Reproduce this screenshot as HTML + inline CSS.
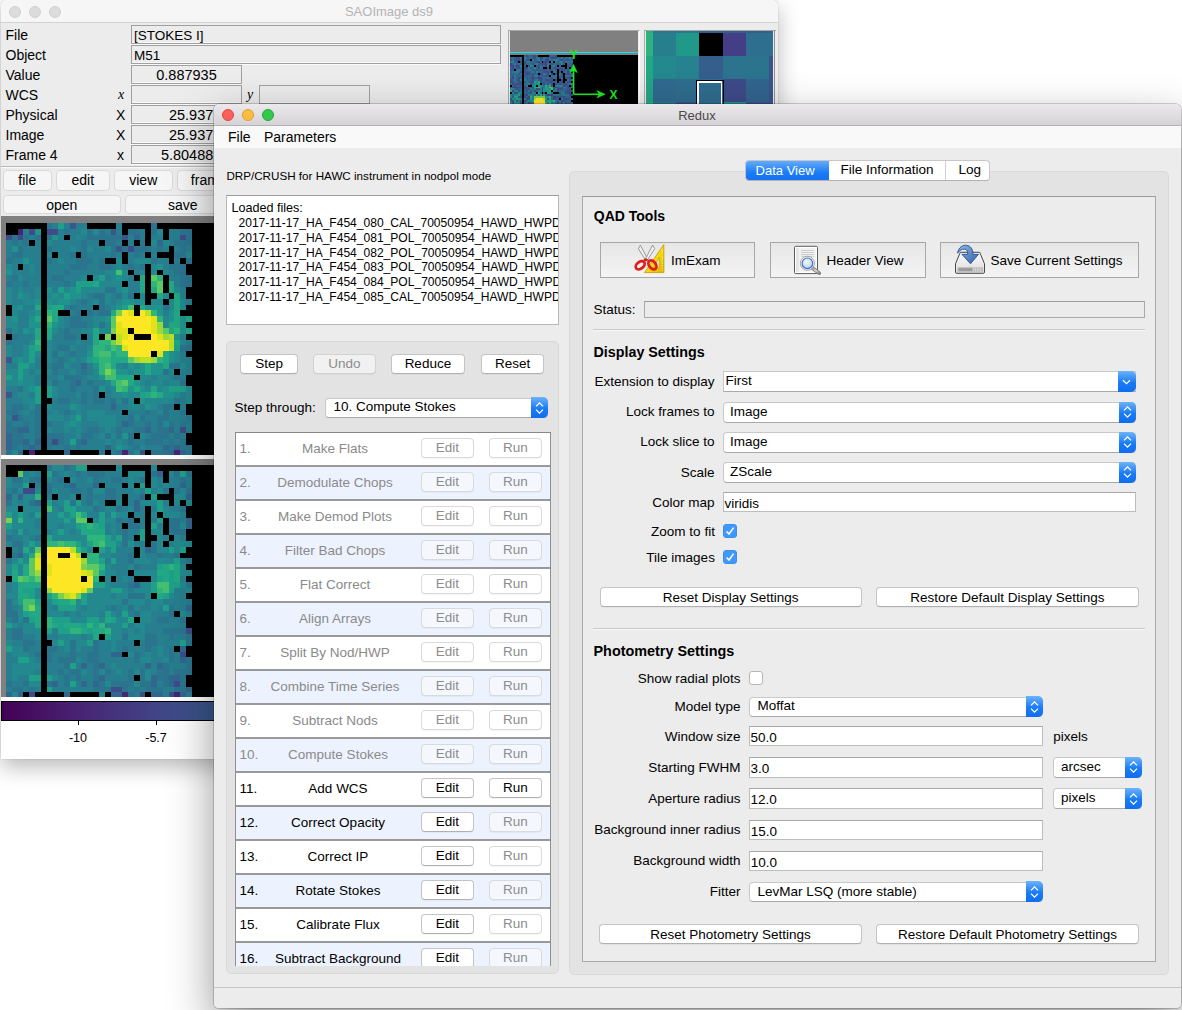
<!DOCTYPE html><html><head><meta charset="utf-8"><style>
*{box-sizing:border-box;margin:0;padding:0}
html,body{width:1182px;height:1010px;overflow:hidden;background:#fff;font-family:"Liberation Sans",sans-serif;font-size:13.5px;color:#000}
.a{position:absolute}
.t{position:absolute;white-space:nowrap;line-height:1}
.btn{position:absolute;background:#fff;border:1px solid #c4c4c4;border-bottom-color:#b0b0b0;border-radius:4px;text-align:center;white-space:nowrap;box-shadow:0 0.5px 0.5px rgba(0,0,0,0.08)}
.dis{color:#8c8c8c;border-color:#dadada;background:#f7f7f7}
.combo{position:absolute;background:#fff;border:1px solid #c8c8c8;border-bottom-color:#a9a9a9;border-radius:4px;white-space:nowrap;overflow:hidden}
.cblue{position:absolute;right:-1px;top:-1px;bottom:-1px;width:17px;background:linear-gradient(#6cb3fa,#1a7bf5 55%,#0f6ef0);border-radius:0 4px 4px 0}
.field{position:absolute;background:#fff;border:1px solid #bdbdbd;border-top-color:#a8a8a8;white-space:nowrap;overflow:hidden}
.pbtn{position:absolute;border:1px solid #a9a9a9;background:linear-gradient(#ebebeb,#f6f6f6);text-align:center;white-space:nowrap}
.tkent{position:absolute;border:1px solid #a0a0a0;box-shadow:inset 0 -1px 0 #f8f8f8, 0 1px 0 #fafafa;background:#ececec;white-space:nowrap}
.tkbtn{position:absolute;background:#f6f6f6;border:1px solid #d9d9d9;border-radius:4px;text-align:center;white-space:nowrap}
</style></head><body><div class="a" style="left:1px;top:0;width:777px;height:759px;border-radius:5px 5px 0 0;box-shadow:0 8px 22px rgba(0,0,0,0.28),0 0 1px rgba(0,0,0,0.4);background:#ececec;overflow:hidden"><div class="a" style="left:0px;top:0px;width:777px;height:22.5px;background:#f6f6f6;border-bottom:1px solid #d3d3d3"></div><div class="a" style="left:8px;top:6px;width:12px;height:12px;border-radius:50%;background:#dcdcdc;border:1px solid #d0d0d0"></div><div class="a" style="left:28px;top:6px;width:12px;height:12px;border-radius:50%;background:#dcdcdc;border:1px solid #d0d0d0"></div><div class="a" style="left:48px;top:6px;width:12px;height:12px;border-radius:50%;background:#dcdcdc;border:1px solid #d0d0d0"></div><div class="t" style="left:188px;width:400px;text-align:center;top:4.95px;font-size:13px;color:#b4b4b4;">SAOImage ds9</div><div class="t" style="left:4.5px;top:28.00px;font-size:14px;">File</div><div class="t" style="left:4.5px;top:48.00px;font-size:14px;">Object</div><div class="t" style="left:4.5px;top:68.00px;font-size:14px;">Value</div><div class="t" style="left:4.5px;top:88.00px;font-size:14px;">WCS</div><div class="t" style="left:4.5px;top:108.00px;font-size:14px;">Physical</div><div class="t" style="left:4.5px;top:128.00px;font-size:14px;">Image</div><div class="t" style="left:4.5px;top:148.00px;font-size:14px;">Frame 4</div><div class="t" style="left:117px;top:87.60px;font-size:14px;font-family:'Liberation Serif',serif"><i>x</i></div><div class="t" style="left:115px;top:108.00px;font-size:14px;">X</div><div class="t" style="left:115px;top:128.00px;font-size:14px;">X</div><div class="t" style="left:116px;top:148.00px;font-size:14px;">x</div><div class="t" style="left:246px;top:87.60px;font-size:14px;font-family:'Liberation Serif',serif"><i>y</i></div><div class="tkent" style="left:130px;top:25px;width:370px;height:19px;font-size:13.5px;text-align:left;padding-left:2px;line-height:19px">[STOKES I]</div><div class="tkent" style="left:130px;top:45px;width:370px;height:19px;font-size:13.5px;text-align:left;padding-left:2px;line-height:19px">M51</div><div class="tkent" style="left:130px;top:65px;width:111px;height:19px;font-size:14.5px;text-align:center;padding-left:0px;line-height:19px">0.887935</div><div class="tkent" style="left:130px;top:85px;width:111px;height:19px;font-size:13.5px;text-align:left;padding-left:2px;line-height:19px"></div><div class="tkent" style="left:258px;top:85px;width:111px;height:19px;font-size:13.5px;text-align:left;padding-left:2px;line-height:19px"></div><div class="tkent" style="left:130px;top:105px;width:111px;height:19px;font-size:13.5px;text-align:left;padding-left:2px;line-height:19px"></div><div class="tkent" style="left:130px;top:125px;width:111px;height:19px;font-size:13.5px;text-align:left;padding-left:2px;line-height:19px"></div><div class="tkent" style="left:130px;top:145px;width:111px;height:19px;font-size:13.5px;text-align:left;padding-left:2px;line-height:19px"></div><div class="t" style="left:-187.7px;width:400px;text-align:right;top:107.58px;font-size:14.5px;">25.937</div><div class="t" style="left:-187.7px;width:400px;text-align:right;top:127.58px;font-size:14.5px;">25.937</div><div class="t" style="left:-187.7px;width:400px;text-align:right;top:147.58px;font-size:14.5px;">5.80488</div><div class="a" style="left:0px;top:166px;width:777px;height:1px;background:#b9b9b9"></div><div class="a" style="left:0px;top:167px;width:777px;height:1px;background:#fafafa"></div><div class="tkbtn" style="left:2px;top:170px;width:48.5px;height:20.5px;line-height:19px;font-size:14px">file</div><div class="tkbtn" style="left:55px;top:170px;width:53.5px;height:20.5px;line-height:19px;font-size:14px">edit</div><div class="tkbtn" style="left:113px;top:170px;width:58.5px;height:20.5px;line-height:19px;font-size:14px">view</div><div class="tkbtn" style="left:176px;top:170px;width:63.5px;height:20.5px;line-height:19px;font-size:14px">frame</div><div class="tkbtn" style="left:2px;top:194.8px;width:117.5px;height:19.5px;line-height:18px;font-size:14px">open</div><div class="tkbtn" style="left:124px;top:194.8px;width:115.5px;height:19.5px;line-height:18px;font-size:14px">save</div><div class="a" style="left:0px;top:216px;width:777px;height:239px;background:#808080"></div><div class="a" style="left:0px;top:455px;width:777px;height:4px;background:#fff"></div><div class="a" style="left:0px;top:459px;width:777px;height:238px;background:#808080"></div><div class="a" style="left:0px;top:697px;width:777px;height:62px;background:#fff"></div><div class="a" style="left:0px;top:701px;width:777px;height:20px;border:1px solid #000;background:linear-gradient(90deg,#440154 0%,#482475 10%,#414487 20%,#355f8d 30%,#2a788e 40%,#21918c 50%,#22a884 60%,#44bf70 70%,#7ad151 80%,#bddf26 90%,#fde725 100%)"></div><div class="a" style="left:76.5px;top:721px;width:1px;height:4px;background:#000"></div><div class="a" style="left:154.5px;top:721px;width:1px;height:4px;background:#000"></div><div class="t" style="left:-123px;width:400px;text-align:center;top:732.38px;font-size:12.5px;">-10</div><div class="t" style="left:-45px;width:400px;text-align:center;top:732.38px;font-size:12.5px;">-5.7</div><svg class="a" style="left:0px;top:216px" width="214" height="239" shape-rendering="crispEdges"><rect width="214" height="239" fill="#000"/><rect x="4.95" y="7.00" width="6.11" height="6.13" fill="#000000"/><rect x="10.76" y="7.00" width="6.11" height="6.13" fill="#000000"/><rect x="16.57" y="7.00" width="6.11" height="6.13" fill="#000000"/><rect x="22.38" y="7.00" width="6.11" height="6.13" fill="#000000"/><rect x="28.19" y="7.00" width="6.11" height="6.13" fill="#000000"/><rect x="34.00" y="7.00" width="6.11" height="6.13" fill="#000000"/><rect x="39.81" y="7.00" width="6.11" height="6.13" fill="#000000"/><rect x="45.62" y="7.00" width="6.11" height="6.13" fill="#2b748e"/><rect x="51.43" y="7.00" width="6.11" height="6.13" fill="#277e8e"/><rect x="57.24" y="7.00" width="6.11" height="6.13" fill="#1fa088"/><rect x="63.05" y="7.00" width="6.11" height="6.13" fill="#277e8e"/><rect x="68.86" y="7.00" width="6.11" height="6.13" fill="#38588c"/><rect x="74.67" y="7.00" width="6.11" height="6.13" fill="#277e8e"/><rect x="80.48" y="7.00" width="6.11" height="6.13" fill="#277e8e"/><rect x="86.29" y="7.00" width="6.11" height="6.13" fill="#000000"/><rect x="92.10" y="7.00" width="6.11" height="6.13" fill="#000000"/><rect x="97.91" y="7.00" width="6.11" height="6.13" fill="#000000"/><rect x="103.72" y="7.00" width="6.11" height="6.13" fill="#000000"/><rect x="109.53" y="7.00" width="6.11" height="6.13" fill="#000000"/><rect x="115.34" y="7.00" width="6.11" height="6.13" fill="#277e8e"/><rect x="121.15" y="7.00" width="6.11" height="6.13" fill="#000000"/><rect x="126.96" y="7.00" width="6.11" height="6.13" fill="#000000"/><rect x="132.77" y="7.00" width="6.11" height="6.13" fill="#000000"/><rect x="138.58" y="7.00" width="6.11" height="6.13" fill="#000000"/><rect x="144.39" y="7.00" width="6.11" height="6.13" fill="#000000"/><rect x="150.20" y="7.00" width="6.11" height="6.13" fill="#2b748e"/><rect x="156.01" y="7.00" width="6.11" height="6.13" fill="#000000"/><rect x="161.82" y="7.00" width="6.11" height="6.13" fill="#000000"/><rect x="167.63" y="7.00" width="6.11" height="6.13" fill="#000000"/><rect x="173.44" y="7.00" width="6.11" height="6.13" fill="#000000"/><rect x="179.25" y="7.00" width="6.11" height="6.13" fill="#000000"/><rect x="185.06" y="7.00" width="6.11" height="6.13" fill="#000000"/><rect x="4.95" y="12.83" width="6.11" height="6.13" fill="#000000"/><rect x="10.76" y="12.83" width="6.11" height="6.13" fill="#000000"/><rect x="16.57" y="12.83" width="6.11" height="6.13" fill="#482475"/><rect x="22.38" y="12.83" width="6.11" height="6.13" fill="#277e8e"/><rect x="28.19" y="12.83" width="6.11" height="6.13" fill="#3e4c8a"/><rect x="34.00" y="12.83" width="6.11" height="6.13" fill="#20938c"/><rect x="39.81" y="12.83" width="6.11" height="6.13" fill="#000000"/><rect x="45.62" y="12.83" width="6.11" height="6.13" fill="#3e4c8a"/><rect x="51.43" y="12.83" width="6.11" height="6.13" fill="#3e4c8a"/><rect x="57.24" y="12.83" width="6.11" height="6.13" fill="#277e8e"/><rect x="63.05" y="12.83" width="6.11" height="6.13" fill="#2b748e"/><rect x="68.86" y="12.83" width="6.11" height="6.13" fill="#277e8e"/><rect x="74.67" y="12.83" width="6.11" height="6.13" fill="#277e8e"/><rect x="80.48" y="12.83" width="6.11" height="6.13" fill="#23898e"/><rect x="86.29" y="12.83" width="6.11" height="6.13" fill="#2b748e"/><rect x="92.10" y="12.83" width="6.11" height="6.13" fill="#23898e"/><rect x="97.91" y="12.83" width="6.11" height="6.13" fill="#2b748e"/><rect x="103.72" y="12.83" width="6.11" height="6.13" fill="#277e8e"/><rect x="109.53" y="12.83" width="6.11" height="6.13" fill="#38588c"/><rect x="115.34" y="12.83" width="6.11" height="6.13" fill="#277e8e"/><rect x="121.15" y="12.83" width="6.11" height="6.13" fill="#000000"/><rect x="126.96" y="12.83" width="6.11" height="6.13" fill="#2b748e"/><rect x="132.77" y="12.83" width="6.11" height="6.13" fill="#2b748e"/><rect x="138.58" y="12.83" width="6.11" height="6.13" fill="#277e8e"/><rect x="144.39" y="12.83" width="6.11" height="6.13" fill="#000000"/><rect x="150.20" y="12.83" width="6.11" height="6.13" fill="#2b748e"/><rect x="156.01" y="12.83" width="6.11" height="6.13" fill="#23898e"/><rect x="161.82" y="12.83" width="6.11" height="6.13" fill="#000000"/><rect x="167.63" y="12.83" width="6.11" height="6.13" fill="#277e8e"/><rect x="173.44" y="12.83" width="6.11" height="6.13" fill="#277e8e"/><rect x="179.25" y="12.83" width="6.11" height="6.13" fill="#2b748e"/><rect x="185.06" y="12.83" width="6.11" height="6.13" fill="#2b748e"/><rect x="4.95" y="18.66" width="6.11" height="6.13" fill="#3e4c8a"/><rect x="10.76" y="18.66" width="6.11" height="6.13" fill="#2b748e"/><rect x="16.57" y="18.66" width="6.11" height="6.13" fill="#3e4c8a"/><rect x="22.38" y="18.66" width="6.11" height="6.13" fill="#2b748e"/><rect x="28.19" y="18.66" width="6.11" height="6.13" fill="#277e8e"/><rect x="34.00" y="18.66" width="6.11" height="6.13" fill="#2b748e"/><rect x="39.81" y="18.66" width="6.11" height="6.13" fill="#000000"/><rect x="45.62" y="18.66" width="6.11" height="6.13" fill="#2b748e"/><rect x="51.43" y="18.66" width="6.11" height="6.13" fill="#20938c"/><rect x="57.24" y="18.66" width="6.11" height="6.13" fill="#277e8e"/><rect x="63.05" y="18.66" width="6.11" height="6.13" fill="#000000"/><rect x="68.86" y="18.66" width="6.11" height="6.13" fill="#277e8e"/><rect x="74.67" y="18.66" width="6.11" height="6.13" fill="#23898e"/><rect x="80.48" y="18.66" width="6.11" height="6.13" fill="#277e8e"/><rect x="86.29" y="18.66" width="6.11" height="6.13" fill="#2b748e"/><rect x="92.10" y="18.66" width="6.11" height="6.13" fill="#2b748e"/><rect x="97.91" y="18.66" width="6.11" height="6.13" fill="#2b748e"/><rect x="103.72" y="18.66" width="6.11" height="6.13" fill="#2b748e"/><rect x="109.53" y="18.66" width="6.11" height="6.13" fill="#2b748e"/><rect x="115.34" y="18.66" width="6.11" height="6.13" fill="#2b748e"/><rect x="121.15" y="18.66" width="6.11" height="6.13" fill="#38588c"/><rect x="126.96" y="18.66" width="6.11" height="6.13" fill="#277e8e"/><rect x="132.77" y="18.66" width="6.11" height="6.13" fill="#31668e"/><rect x="138.58" y="18.66" width="6.11" height="6.13" fill="#277e8e"/><rect x="144.39" y="18.66" width="6.11" height="6.13" fill="#000000"/><rect x="150.20" y="18.66" width="6.11" height="6.13" fill="#277e8e"/><rect x="156.01" y="18.66" width="6.11" height="6.13" fill="#277e8e"/><rect x="161.82" y="18.66" width="6.11" height="6.13" fill="#000000"/><rect x="167.63" y="18.66" width="6.11" height="6.13" fill="#277e8e"/><rect x="173.44" y="18.66" width="6.11" height="6.13" fill="#277e8e"/><rect x="179.25" y="18.66" width="6.11" height="6.13" fill="#3e4c8a"/><rect x="185.06" y="18.66" width="6.11" height="6.13" fill="#2b748e"/><rect x="4.95" y="24.49" width="6.11" height="6.13" fill="#277e8e"/><rect x="10.76" y="24.49" width="6.11" height="6.13" fill="#2b748e"/><rect x="16.57" y="24.49" width="6.11" height="6.13" fill="#277e8e"/><rect x="22.38" y="24.49" width="6.11" height="6.13" fill="#2b748e"/><rect x="28.19" y="24.49" width="6.11" height="6.13" fill="#000000"/><rect x="34.00" y="24.49" width="6.11" height="6.13" fill="#277e8e"/><rect x="39.81" y="24.49" width="6.11" height="6.13" fill="#000000"/><rect x="45.62" y="24.49" width="6.11" height="6.13" fill="#23898e"/><rect x="51.43" y="24.49" width="6.11" height="6.13" fill="#277e8e"/><rect x="57.24" y="24.49" width="6.11" height="6.13" fill="#277e8e"/><rect x="63.05" y="24.49" width="6.11" height="6.13" fill="#277e8e"/><rect x="68.86" y="24.49" width="6.11" height="6.13" fill="#277e8e"/><rect x="74.67" y="24.49" width="6.11" height="6.13" fill="#277e8e"/><rect x="80.48" y="24.49" width="6.11" height="6.13" fill="#2b748e"/><rect x="86.29" y="24.49" width="6.11" height="6.13" fill="#277e8e"/><rect x="92.10" y="24.49" width="6.11" height="6.13" fill="#277e8e"/><rect x="97.91" y="24.49" width="6.11" height="6.13" fill="#000000"/><rect x="103.72" y="24.49" width="6.11" height="6.13" fill="#2b748e"/><rect x="109.53" y="24.49" width="6.11" height="6.13" fill="#2b748e"/><rect x="115.34" y="24.49" width="6.11" height="6.13" fill="#277e8e"/><rect x="121.15" y="24.49" width="6.11" height="6.13" fill="#000000"/><rect x="126.96" y="24.49" width="6.11" height="6.13" fill="#277e8e"/><rect x="132.77" y="24.49" width="6.11" height="6.13" fill="#000000"/><rect x="138.58" y="24.49" width="6.11" height="6.13" fill="#2b748e"/><rect x="144.39" y="24.49" width="6.11" height="6.13" fill="#000000"/><rect x="150.20" y="24.49" width="6.11" height="6.13" fill="#23898e"/><rect x="156.01" y="24.49" width="6.11" height="6.13" fill="#31668e"/><rect x="161.82" y="24.49" width="6.11" height="6.13" fill="#23898e"/><rect x="167.63" y="24.49" width="6.11" height="6.13" fill="#277e8e"/><rect x="173.44" y="24.49" width="6.11" height="6.13" fill="#2b748e"/><rect x="179.25" y="24.49" width="6.11" height="6.13" fill="#2b748e"/><rect x="185.06" y="24.49" width="6.11" height="6.13" fill="#2b748e"/><rect x="4.95" y="30.32" width="6.11" height="6.13" fill="#277e8e"/><rect x="10.76" y="30.32" width="6.11" height="6.13" fill="#20938c"/><rect x="16.57" y="30.32" width="6.11" height="6.13" fill="#2b748e"/><rect x="22.38" y="30.32" width="6.11" height="6.13" fill="#277e8e"/><rect x="28.19" y="30.32" width="6.11" height="6.13" fill="#277e8e"/><rect x="34.00" y="30.32" width="6.11" height="6.13" fill="#277e8e"/><rect x="39.81" y="30.32" width="6.11" height="6.13" fill="#000000"/><rect x="45.62" y="30.32" width="6.11" height="6.13" fill="#2b748e"/><rect x="51.43" y="30.32" width="6.11" height="6.13" fill="#277e8e"/><rect x="57.24" y="30.32" width="6.11" height="6.13" fill="#277e8e"/><rect x="63.05" y="30.32" width="6.11" height="6.13" fill="#277e8e"/><rect x="68.86" y="30.32" width="6.11" height="6.13" fill="#23898e"/><rect x="74.67" y="30.32" width="6.11" height="6.13" fill="#277e8e"/><rect x="80.48" y="30.32" width="6.11" height="6.13" fill="#2b748e"/><rect x="86.29" y="30.32" width="6.11" height="6.13" fill="#23898e"/><rect x="92.10" y="30.32" width="6.11" height="6.13" fill="#277e8e"/><rect x="97.91" y="30.32" width="6.11" height="6.13" fill="#277e8e"/><rect x="103.72" y="30.32" width="6.11" height="6.13" fill="#23898e"/><rect x="109.53" y="30.32" width="6.11" height="6.13" fill="#2b748e"/><rect x="115.34" y="30.32" width="6.11" height="6.13" fill="#38588c"/><rect x="121.15" y="30.32" width="6.11" height="6.13" fill="#2b748e"/><rect x="126.96" y="30.32" width="6.11" height="6.13" fill="#3e4c8a"/><rect x="132.77" y="30.32" width="6.11" height="6.13" fill="#2b748e"/><rect x="138.58" y="30.32" width="6.11" height="6.13" fill="#2b748e"/><rect x="144.39" y="30.32" width="6.11" height="6.13" fill="#2b748e"/><rect x="150.20" y="30.32" width="6.11" height="6.13" fill="#277e8e"/><rect x="156.01" y="30.32" width="6.11" height="6.13" fill="#2b748e"/><rect x="161.82" y="30.32" width="6.11" height="6.13" fill="#277e8e"/><rect x="167.63" y="30.32" width="6.11" height="6.13" fill="#000000"/><rect x="173.44" y="30.32" width="6.11" height="6.13" fill="#277e8e"/><rect x="179.25" y="30.32" width="6.11" height="6.13" fill="#2b748e"/><rect x="185.06" y="30.32" width="6.11" height="6.13" fill="#277e8e"/><rect x="4.95" y="36.15" width="6.11" height="6.13" fill="#277e8e"/><rect x="10.76" y="36.15" width="6.11" height="6.13" fill="#2b748e"/><rect x="16.57" y="36.15" width="6.11" height="6.13" fill="#2b748e"/><rect x="22.38" y="36.15" width="6.11" height="6.13" fill="#277e8e"/><rect x="28.19" y="36.15" width="6.11" height="6.13" fill="#277e8e"/><rect x="34.00" y="36.15" width="6.11" height="6.13" fill="#277e8e"/><rect x="39.81" y="36.15" width="6.11" height="6.13" fill="#000000"/><rect x="45.62" y="36.15" width="6.11" height="6.13" fill="#23898e"/><rect x="51.43" y="36.15" width="6.11" height="6.13" fill="#000000"/><rect x="57.24" y="36.15" width="6.11" height="6.13" fill="#277e8e"/><rect x="63.05" y="36.15" width="6.11" height="6.13" fill="#277e8e"/><rect x="68.86" y="36.15" width="6.11" height="6.13" fill="#2b748e"/><rect x="74.67" y="36.15" width="6.11" height="6.13" fill="#000000"/><rect x="80.48" y="36.15" width="6.11" height="6.13" fill="#2b748e"/><rect x="86.29" y="36.15" width="6.11" height="6.13" fill="#277e8e"/><rect x="92.10" y="36.15" width="6.11" height="6.13" fill="#277e8e"/><rect x="97.91" y="36.15" width="6.11" height="6.13" fill="#277e8e"/><rect x="103.72" y="36.15" width="6.11" height="6.13" fill="#277e8e"/><rect x="109.53" y="36.15" width="6.11" height="6.13" fill="#2b748e"/><rect x="115.34" y="36.15" width="6.11" height="6.13" fill="#277e8e"/><rect x="121.15" y="36.15" width="6.11" height="6.13" fill="#000000"/><rect x="126.96" y="36.15" width="6.11" height="6.13" fill="#277e8e"/><rect x="132.77" y="36.15" width="6.11" height="6.13" fill="#2b748e"/><rect x="138.58" y="36.15" width="6.11" height="6.13" fill="#277e8e"/><rect x="144.39" y="36.15" width="6.11" height="6.13" fill="#000000"/><rect x="150.20" y="36.15" width="6.11" height="6.13" fill="#277e8e"/><rect x="156.01" y="36.15" width="6.11" height="6.13" fill="#000000"/><rect x="161.82" y="36.15" width="6.11" height="6.13" fill="#000000"/><rect x="167.63" y="36.15" width="6.11" height="6.13" fill="#000000"/><rect x="173.44" y="36.15" width="6.11" height="6.13" fill="#2b748e"/><rect x="179.25" y="36.15" width="6.11" height="6.13" fill="#2b748e"/><rect x="185.06" y="36.15" width="6.11" height="6.13" fill="#23898e"/><rect x="4.95" y="41.98" width="6.11" height="6.13" fill="#2b748e"/><rect x="10.76" y="41.98" width="6.11" height="6.13" fill="#277e8e"/><rect x="16.57" y="41.98" width="6.11" height="6.13" fill="#277e8e"/><rect x="22.38" y="41.98" width="6.11" height="6.13" fill="#20938c"/><rect x="28.19" y="41.98" width="6.11" height="6.13" fill="#277e8e"/><rect x="34.00" y="41.98" width="6.11" height="6.13" fill="#277e8e"/><rect x="39.81" y="41.98" width="6.11" height="6.13" fill="#000000"/><rect x="45.62" y="41.98" width="6.11" height="6.13" fill="#2b748e"/><rect x="51.43" y="41.98" width="6.11" height="6.13" fill="#277e8e"/><rect x="57.24" y="41.98" width="6.11" height="6.13" fill="#23898e"/><rect x="63.05" y="41.98" width="6.11" height="6.13" fill="#277e8e"/><rect x="68.86" y="41.98" width="6.11" height="6.13" fill="#277e8e"/><rect x="74.67" y="41.98" width="6.11" height="6.13" fill="#2b748e"/><rect x="80.48" y="41.98" width="6.11" height="6.13" fill="#2b748e"/><rect x="86.29" y="41.98" width="6.11" height="6.13" fill="#2b748e"/><rect x="92.10" y="41.98" width="6.11" height="6.13" fill="#277e8e"/><rect x="97.91" y="41.98" width="6.11" height="6.13" fill="#2b748e"/><rect x="103.72" y="41.98" width="6.11" height="6.13" fill="#000000"/><rect x="109.53" y="41.98" width="6.11" height="6.13" fill="#000000"/><rect x="115.34" y="41.98" width="6.11" height="6.13" fill="#23898e"/><rect x="121.15" y="41.98" width="6.11" height="6.13" fill="#000000"/><rect x="126.96" y="41.98" width="6.11" height="6.13" fill="#277e8e"/><rect x="132.77" y="41.98" width="6.11" height="6.13" fill="#23898e"/><rect x="138.58" y="41.98" width="6.11" height="6.13" fill="#23898e"/><rect x="144.39" y="41.98" width="6.11" height="6.13" fill="#23898e"/><rect x="150.20" y="41.98" width="6.11" height="6.13" fill="#2b748e"/><rect x="156.01" y="41.98" width="6.11" height="6.13" fill="#277e8e"/><rect x="161.82" y="41.98" width="6.11" height="6.13" fill="#277e8e"/><rect x="167.63" y="41.98" width="6.11" height="6.13" fill="#000000"/><rect x="173.44" y="41.98" width="6.11" height="6.13" fill="#277e8e"/><rect x="179.25" y="41.98" width="6.11" height="6.13" fill="#000000"/><rect x="185.06" y="41.98" width="6.11" height="6.13" fill="#2b748e"/><rect x="4.95" y="47.81" width="6.11" height="6.13" fill="#23898e"/><rect x="10.76" y="47.81" width="6.11" height="6.13" fill="#277e8e"/><rect x="16.57" y="47.81" width="6.11" height="6.13" fill="#000000"/><rect x="22.38" y="47.81" width="6.11" height="6.13" fill="#277e8e"/><rect x="28.19" y="47.81" width="6.11" height="6.13" fill="#23898e"/><rect x="34.00" y="47.81" width="6.11" height="6.13" fill="#277e8e"/><rect x="39.81" y="47.81" width="6.11" height="6.13" fill="#000000"/><rect x="45.62" y="47.81" width="6.11" height="6.13" fill="#277e8e"/><rect x="51.43" y="47.81" width="6.11" height="6.13" fill="#277e8e"/><rect x="57.24" y="47.81" width="6.11" height="6.13" fill="#277e8e"/><rect x="63.05" y="47.81" width="6.11" height="6.13" fill="#277e8e"/><rect x="68.86" y="47.81" width="6.11" height="6.13" fill="#2b748e"/><rect x="74.67" y="47.81" width="6.11" height="6.13" fill="#2b748e"/><rect x="80.48" y="47.81" width="6.11" height="6.13" fill="#2b748e"/><rect x="86.29" y="47.81" width="6.11" height="6.13" fill="#277e8e"/><rect x="92.10" y="47.81" width="6.11" height="6.13" fill="#277e8e"/><rect x="97.91" y="47.81" width="6.11" height="6.13" fill="#2b748e"/><rect x="103.72" y="47.81" width="6.11" height="6.13" fill="#2b748e"/><rect x="109.53" y="47.81" width="6.11" height="6.13" fill="#277e8e"/><rect x="115.34" y="47.81" width="6.11" height="6.13" fill="#23898e"/><rect x="121.15" y="47.81" width="6.11" height="6.13" fill="#277e8e"/><rect x="126.96" y="47.81" width="6.11" height="6.13" fill="#2b748e"/><rect x="132.77" y="47.81" width="6.11" height="6.13" fill="#277e8e"/><rect x="138.58" y="47.81" width="6.11" height="6.13" fill="#2b748e"/><rect x="144.39" y="47.81" width="6.11" height="6.13" fill="#000000"/><rect x="150.20" y="47.81" width="6.11" height="6.13" fill="#23898e"/><rect x="156.01" y="47.81" width="6.11" height="6.13" fill="#20938c"/><rect x="161.82" y="47.81" width="6.11" height="6.13" fill="#277e8e"/><rect x="167.63" y="47.81" width="6.11" height="6.13" fill="#2b748e"/><rect x="173.44" y="47.81" width="6.11" height="6.13" fill="#2b748e"/><rect x="179.25" y="47.81" width="6.11" height="6.13" fill="#2b748e"/><rect x="185.06" y="47.81" width="6.11" height="6.13" fill="#000000"/><rect x="4.95" y="53.64" width="6.11" height="6.13" fill="#20938c"/><rect x="10.76" y="53.64" width="6.11" height="6.13" fill="#277e8e"/><rect x="16.57" y="53.64" width="6.11" height="6.13" fill="#277e8e"/><rect x="22.38" y="53.64" width="6.11" height="6.13" fill="#277e8e"/><rect x="28.19" y="53.64" width="6.11" height="6.13" fill="#23898e"/><rect x="34.00" y="53.64" width="6.11" height="6.13" fill="#277e8e"/><rect x="39.81" y="53.64" width="6.11" height="6.13" fill="#000000"/><rect x="45.62" y="53.64" width="6.11" height="6.13" fill="#277e8e"/><rect x="51.43" y="53.64" width="6.11" height="6.13" fill="#277e8e"/><rect x="57.24" y="53.64" width="6.11" height="6.13" fill="#277e8e"/><rect x="63.05" y="53.64" width="6.11" height="6.13" fill="#2b748e"/><rect x="68.86" y="53.64" width="6.11" height="6.13" fill="#277e8e"/><rect x="74.67" y="53.64" width="6.11" height="6.13" fill="#277e8e"/><rect x="80.48" y="53.64" width="6.11" height="6.13" fill="#277e8e"/><rect x="86.29" y="53.64" width="6.11" height="6.13" fill="#277e8e"/><rect x="92.10" y="53.64" width="6.11" height="6.13" fill="#277e8e"/><rect x="97.91" y="53.64" width="6.11" height="6.13" fill="#277e8e"/><rect x="103.72" y="53.64" width="6.11" height="6.13" fill="#23898e"/><rect x="109.53" y="53.64" width="6.11" height="6.13" fill="#23898e"/><rect x="115.34" y="53.64" width="6.11" height="6.13" fill="#44bf70"/><rect x="121.15" y="53.64" width="6.11" height="6.13" fill="#23898e"/><rect x="126.96" y="53.64" width="6.11" height="6.13" fill="#000000"/><rect x="132.77" y="53.64" width="6.11" height="6.13" fill="#277e8e"/><rect x="138.58" y="53.64" width="6.11" height="6.13" fill="#23898e"/><rect x="144.39" y="53.64" width="6.11" height="6.13" fill="#000000"/><rect x="150.20" y="53.64" width="6.11" height="6.13" fill="#23898e"/><rect x="156.01" y="53.64" width="6.11" height="6.13" fill="#000000"/><rect x="161.82" y="53.64" width="6.11" height="6.13" fill="#23898e"/><rect x="167.63" y="53.64" width="6.11" height="6.13" fill="#277e8e"/><rect x="173.44" y="53.64" width="6.11" height="6.13" fill="#2b748e"/><rect x="179.25" y="53.64" width="6.11" height="6.13" fill="#2b748e"/><rect x="185.06" y="53.64" width="6.11" height="6.13" fill="#000000"/><rect x="4.95" y="59.47" width="6.11" height="6.13" fill="#277e8e"/><rect x="10.76" y="59.47" width="6.11" height="6.13" fill="#2b748e"/><rect x="16.57" y="59.47" width="6.11" height="6.13" fill="#23898e"/><rect x="22.38" y="59.47" width="6.11" height="6.13" fill="#277e8e"/><rect x="28.19" y="59.47" width="6.11" height="6.13" fill="#277e8e"/><rect x="34.00" y="59.47" width="6.11" height="6.13" fill="#277e8e"/><rect x="39.81" y="59.47" width="6.11" height="6.13" fill="#000000"/><rect x="45.62" y="59.47" width="6.11" height="6.13" fill="#277e8e"/><rect x="51.43" y="59.47" width="6.11" height="6.13" fill="#2b748e"/><rect x="57.24" y="59.47" width="6.11" height="6.13" fill="#2b748e"/><rect x="63.05" y="59.47" width="6.11" height="6.13" fill="#277e8e"/><rect x="68.86" y="59.47" width="6.11" height="6.13" fill="#277e8e"/><rect x="74.67" y="59.47" width="6.11" height="6.13" fill="#277e8e"/><rect x="80.48" y="59.47" width="6.11" height="6.13" fill="#23898e"/><rect x="86.29" y="59.47" width="6.11" height="6.13" fill="#000000"/><rect x="92.10" y="59.47" width="6.11" height="6.13" fill="#23898e"/><rect x="97.91" y="59.47" width="6.11" height="6.13" fill="#1fa088"/><rect x="103.72" y="59.47" width="6.11" height="6.13" fill="#277e8e"/><rect x="109.53" y="59.47" width="6.11" height="6.13" fill="#23898e"/><rect x="115.34" y="59.47" width="6.11" height="6.13" fill="#20938c"/><rect x="121.15" y="59.47" width="6.11" height="6.13" fill="#23898e"/><rect x="126.96" y="59.47" width="6.11" height="6.13" fill="#277e8e"/><rect x="132.77" y="59.47" width="6.11" height="6.13" fill="#000000"/><rect x="138.58" y="59.47" width="6.11" height="6.13" fill="#22a884"/><rect x="144.39" y="59.47" width="6.11" height="6.13" fill="#000000"/><rect x="150.20" y="59.47" width="6.11" height="6.13" fill="#5ec962"/><rect x="156.01" y="59.47" width="6.11" height="6.13" fill="#2fb47c"/><rect x="161.82" y="59.47" width="6.11" height="6.13" fill="#000000"/><rect x="167.63" y="59.47" width="6.11" height="6.13" fill="#277e8e"/><rect x="173.44" y="59.47" width="6.11" height="6.13" fill="#277e8e"/><rect x="179.25" y="59.47" width="6.11" height="6.13" fill="#2b748e"/><rect x="185.06" y="59.47" width="6.11" height="6.13" fill="#2b748e"/><rect x="4.95" y="65.30" width="6.11" height="6.13" fill="#2b748e"/><rect x="10.76" y="65.30" width="6.11" height="6.13" fill="#277e8e"/><rect x="16.57" y="65.30" width="6.11" height="6.13" fill="#277e8e"/><rect x="22.38" y="65.30" width="6.11" height="6.13" fill="#2b748e"/><rect x="28.19" y="65.30" width="6.11" height="6.13" fill="#277e8e"/><rect x="34.00" y="65.30" width="6.11" height="6.13" fill="#277e8e"/><rect x="39.81" y="65.30" width="6.11" height="6.13" fill="#000000"/><rect x="45.62" y="65.30" width="6.11" height="6.13" fill="#277e8e"/><rect x="51.43" y="65.30" width="6.11" height="6.13" fill="#277e8e"/><rect x="57.24" y="65.30" width="6.11" height="6.13" fill="#277e8e"/><rect x="63.05" y="65.30" width="6.11" height="6.13" fill="#2b748e"/><rect x="68.86" y="65.30" width="6.11" height="6.13" fill="#277e8e"/><rect x="74.67" y="65.30" width="6.11" height="6.13" fill="#1fa088"/><rect x="80.48" y="65.30" width="6.11" height="6.13" fill="#1fa088"/><rect x="86.29" y="65.30" width="6.11" height="6.13" fill="#1fa088"/><rect x="92.10" y="65.30" width="6.11" height="6.13" fill="#22a884"/><rect x="97.91" y="65.30" width="6.11" height="6.13" fill="#23898e"/><rect x="103.72" y="65.30" width="6.11" height="6.13" fill="#23898e"/><rect x="109.53" y="65.30" width="6.11" height="6.13" fill="#23898e"/><rect x="115.34" y="65.30" width="6.11" height="6.13" fill="#23898e"/><rect x="121.15" y="65.30" width="6.11" height="6.13" fill="#000000"/><rect x="126.96" y="65.30" width="6.11" height="6.13" fill="#277e8e"/><rect x="132.77" y="65.30" width="6.11" height="6.13" fill="#277e8e"/><rect x="138.58" y="65.30" width="6.11" height="6.13" fill="#22a884"/><rect x="144.39" y="65.30" width="6.11" height="6.13" fill="#000000"/><rect x="150.20" y="65.30" width="6.11" height="6.13" fill="#2fb47c"/><rect x="156.01" y="65.30" width="6.11" height="6.13" fill="#5ec962"/><rect x="161.82" y="65.30" width="6.11" height="6.13" fill="#000000"/><rect x="167.63" y="65.30" width="6.11" height="6.13" fill="#22a884"/><rect x="173.44" y="65.30" width="6.11" height="6.13" fill="#277e8e"/><rect x="179.25" y="65.30" width="6.11" height="6.13" fill="#2b748e"/><rect x="185.06" y="65.30" width="6.11" height="6.13" fill="#2b748e"/><rect x="4.95" y="71.13" width="6.11" height="6.13" fill="#23898e"/><rect x="10.76" y="71.13" width="6.11" height="6.13" fill="#277e8e"/><rect x="16.57" y="71.13" width="6.11" height="6.13" fill="#23898e"/><rect x="22.38" y="71.13" width="6.11" height="6.13" fill="#277e8e"/><rect x="28.19" y="71.13" width="6.11" height="6.13" fill="#277e8e"/><rect x="34.00" y="71.13" width="6.11" height="6.13" fill="#23898e"/><rect x="39.81" y="71.13" width="6.11" height="6.13" fill="#000000"/><rect x="45.62" y="71.13" width="6.11" height="6.13" fill="#20938c"/><rect x="51.43" y="71.13" width="6.11" height="6.13" fill="#277e8e"/><rect x="57.24" y="71.13" width="6.11" height="6.13" fill="#1fa088"/><rect x="63.05" y="71.13" width="6.11" height="6.13" fill="#23898e"/><rect x="68.86" y="71.13" width="6.11" height="6.13" fill="#20938c"/><rect x="74.67" y="71.13" width="6.11" height="6.13" fill="#1fa088"/><rect x="80.48" y="71.13" width="6.11" height="6.13" fill="#23898e"/><rect x="86.29" y="71.13" width="6.11" height="6.13" fill="#23898e"/><rect x="92.10" y="71.13" width="6.11" height="6.13" fill="#23898e"/><rect x="97.91" y="71.13" width="6.11" height="6.13" fill="#23898e"/><rect x="103.72" y="71.13" width="6.11" height="6.13" fill="#2b748e"/><rect x="109.53" y="71.13" width="6.11" height="6.13" fill="#2b748e"/><rect x="115.34" y="71.13" width="6.11" height="6.13" fill="#23898e"/><rect x="121.15" y="71.13" width="6.11" height="6.13" fill="#20938c"/><rect x="126.96" y="71.13" width="6.11" height="6.13" fill="#277e8e"/><rect x="132.77" y="71.13" width="6.11" height="6.13" fill="#277e8e"/><rect x="138.58" y="71.13" width="6.11" height="6.13" fill="#22a884"/><rect x="144.39" y="71.13" width="6.11" height="6.13" fill="#000000"/><rect x="150.20" y="71.13" width="6.11" height="6.13" fill="#22a884"/><rect x="156.01" y="71.13" width="6.11" height="6.13" fill="#5ec962"/><rect x="161.82" y="71.13" width="6.11" height="6.13" fill="#000000"/><rect x="167.63" y="71.13" width="6.11" height="6.13" fill="#22a884"/><rect x="173.44" y="71.13" width="6.11" height="6.13" fill="#23898e"/><rect x="179.25" y="71.13" width="6.11" height="6.13" fill="#277e8e"/><rect x="185.06" y="71.13" width="6.11" height="6.13" fill="#000000"/><rect x="4.95" y="76.96" width="6.11" height="6.13" fill="#23898e"/><rect x="10.76" y="76.96" width="6.11" height="6.13" fill="#277e8e"/><rect x="16.57" y="76.96" width="6.11" height="6.13" fill="#20938c"/><rect x="22.38" y="76.96" width="6.11" height="6.13" fill="#23898e"/><rect x="28.19" y="76.96" width="6.11" height="6.13" fill="#277e8e"/><rect x="34.00" y="76.96" width="6.11" height="6.13" fill="#23898e"/><rect x="39.81" y="76.96" width="6.11" height="6.13" fill="#000000"/><rect x="45.62" y="76.96" width="6.11" height="6.13" fill="#23898e"/><rect x="51.43" y="76.96" width="6.11" height="6.13" fill="#20938c"/><rect x="57.24" y="76.96" width="6.11" height="6.13" fill="#23898e"/><rect x="63.05" y="76.96" width="6.11" height="6.13" fill="#1fa088"/><rect x="68.86" y="76.96" width="6.11" height="6.13" fill="#20938c"/><rect x="74.67" y="76.96" width="6.11" height="6.13" fill="#20938c"/><rect x="80.48" y="76.96" width="6.11" height="6.13" fill="#23898e"/><rect x="86.29" y="76.96" width="6.11" height="6.13" fill="#277e8e"/><rect x="92.10" y="76.96" width="6.11" height="6.13" fill="#2b748e"/><rect x="97.91" y="76.96" width="6.11" height="6.13" fill="#2b748e"/><rect x="103.72" y="76.96" width="6.11" height="6.13" fill="#23898e"/><rect x="109.53" y="76.96" width="6.11" height="6.13" fill="#277e8e"/><rect x="115.34" y="76.96" width="6.11" height="6.13" fill="#2b748e"/><rect x="121.15" y="76.96" width="6.11" height="6.13" fill="#23898e"/><rect x="126.96" y="76.96" width="6.11" height="6.13" fill="#2b748e"/><rect x="132.77" y="76.96" width="6.11" height="6.13" fill="#000000"/><rect x="138.58" y="76.96" width="6.11" height="6.13" fill="#23898e"/><rect x="144.39" y="76.96" width="6.11" height="6.13" fill="#000000"/><rect x="150.20" y="76.96" width="6.11" height="6.13" fill="#000000"/><rect x="156.01" y="76.96" width="6.11" height="6.13" fill="#22a884"/><rect x="161.82" y="76.96" width="6.11" height="6.13" fill="#23898e"/><rect x="167.63" y="76.96" width="6.11" height="6.13" fill="#000000"/><rect x="173.44" y="76.96" width="6.11" height="6.13" fill="#22a884"/><rect x="179.25" y="76.96" width="6.11" height="6.13" fill="#277e8e"/><rect x="185.06" y="76.96" width="6.11" height="6.13" fill="#000000"/><rect x="4.95" y="82.79" width="6.11" height="6.13" fill="#23898e"/><rect x="10.76" y="82.79" width="6.11" height="6.13" fill="#277e8e"/><rect x="16.57" y="82.79" width="6.11" height="6.13" fill="#277e8e"/><rect x="22.38" y="82.79" width="6.11" height="6.13" fill="#23898e"/><rect x="28.19" y="82.79" width="6.11" height="6.13" fill="#23898e"/><rect x="34.00" y="82.79" width="6.11" height="6.13" fill="#20938c"/><rect x="39.81" y="82.79" width="6.11" height="6.13" fill="#000000"/><rect x="45.62" y="82.79" width="6.11" height="6.13" fill="#20938c"/><rect x="51.43" y="82.79" width="6.11" height="6.13" fill="#23898e"/><rect x="57.24" y="82.79" width="6.11" height="6.13" fill="#20938c"/><rect x="63.05" y="82.79" width="6.11" height="6.13" fill="#20938c"/><rect x="68.86" y="82.79" width="6.11" height="6.13" fill="#23898e"/><rect x="74.67" y="82.79" width="6.11" height="6.13" fill="#277e8e"/><rect x="80.48" y="82.79" width="6.11" height="6.13" fill="#2b748e"/><rect x="86.29" y="82.79" width="6.11" height="6.13" fill="#277e8e"/><rect x="92.10" y="82.79" width="6.11" height="6.13" fill="#23898e"/><rect x="97.91" y="82.79" width="6.11" height="6.13" fill="#2b748e"/><rect x="103.72" y="82.79" width="6.11" height="6.13" fill="#23898e"/><rect x="109.53" y="82.79" width="6.11" height="6.13" fill="#277e8e"/><rect x="115.34" y="82.79" width="6.11" height="6.13" fill="#23898e"/><rect x="121.15" y="82.79" width="6.11" height="6.13" fill="#20938c"/><rect x="126.96" y="82.79" width="6.11" height="6.13" fill="#20938c"/><rect x="132.77" y="82.79" width="6.11" height="6.13" fill="#23898e"/><rect x="138.58" y="82.79" width="6.11" height="6.13" fill="#20938c"/><rect x="144.39" y="82.79" width="6.11" height="6.13" fill="#000000"/><rect x="150.20" y="82.79" width="6.11" height="6.13" fill="#23898e"/><rect x="156.01" y="82.79" width="6.11" height="6.13" fill="#23898e"/><rect x="161.82" y="82.79" width="6.11" height="6.13" fill="#000000"/><rect x="167.63" y="82.79" width="6.11" height="6.13" fill="#23898e"/><rect x="173.44" y="82.79" width="6.11" height="6.13" fill="#22a884"/><rect x="179.25" y="82.79" width="6.11" height="6.13" fill="#23898e"/><rect x="185.06" y="82.79" width="6.11" height="6.13" fill="#277e8e"/><rect x="4.95" y="88.62" width="6.11" height="6.13" fill="#000000"/><rect x="10.76" y="88.62" width="6.11" height="6.13" fill="#23898e"/><rect x="16.57" y="88.62" width="6.11" height="6.13" fill="#20938c"/><rect x="22.38" y="88.62" width="6.11" height="6.13" fill="#277e8e"/><rect x="28.19" y="88.62" width="6.11" height="6.13" fill="#277e8e"/><rect x="34.00" y="88.62" width="6.11" height="6.13" fill="#22a884"/><rect x="39.81" y="88.62" width="6.11" height="6.13" fill="#000000"/><rect x="45.62" y="88.62" width="6.11" height="6.13" fill="#1fa088"/><rect x="51.43" y="88.62" width="6.11" height="6.13" fill="#22a884"/><rect x="57.24" y="88.62" width="6.11" height="6.13" fill="#22a884"/><rect x="63.05" y="88.62" width="6.11" height="6.13" fill="#277e8e"/><rect x="68.86" y="88.62" width="6.11" height="6.13" fill="#2b748e"/><rect x="74.67" y="88.62" width="6.11" height="6.13" fill="#277e8e"/><rect x="80.48" y="88.62" width="6.11" height="6.13" fill="#277e8e"/><rect x="86.29" y="88.62" width="6.11" height="6.13" fill="#277e8e"/><rect x="92.10" y="88.62" width="6.11" height="6.13" fill="#000000"/><rect x="97.91" y="88.62" width="6.11" height="6.13" fill="#2b748e"/><rect x="103.72" y="88.62" width="6.11" height="6.13" fill="#277e8e"/><rect x="109.53" y="88.62" width="6.11" height="6.13" fill="#23898e"/><rect x="115.34" y="88.62" width="6.11" height="6.13" fill="#20938c"/><rect x="121.15" y="88.62" width="6.11" height="6.13" fill="#1fa088"/><rect x="126.96" y="88.62" width="6.11" height="6.13" fill="#44bf70"/><rect x="132.77" y="88.62" width="6.11" height="6.13" fill="#000000"/><rect x="138.58" y="88.62" width="6.11" height="6.13" fill="#22a884"/><rect x="144.39" y="88.62" width="6.11" height="6.13" fill="#20938c"/><rect x="150.20" y="88.62" width="6.11" height="6.13" fill="#20938c"/><rect x="156.01" y="88.62" width="6.11" height="6.13" fill="#20938c"/><rect x="161.82" y="88.62" width="6.11" height="6.13" fill="#2b748e"/><rect x="167.63" y="88.62" width="6.11" height="6.13" fill="#23898e"/><rect x="173.44" y="88.62" width="6.11" height="6.13" fill="#22a884"/><rect x="179.25" y="88.62" width="6.11" height="6.13" fill="#23898e"/><rect x="185.06" y="88.62" width="6.11" height="6.13" fill="#000000"/><rect x="4.95" y="94.45" width="6.11" height="6.13" fill="#000000"/><rect x="10.76" y="94.45" width="6.11" height="6.13" fill="#23898e"/><rect x="16.57" y="94.45" width="6.11" height="6.13" fill="#277e8e"/><rect x="22.38" y="94.45" width="6.11" height="6.13" fill="#277e8e"/><rect x="28.19" y="94.45" width="6.11" height="6.13" fill="#23898e"/><rect x="34.00" y="94.45" width="6.11" height="6.13" fill="#20938c"/><rect x="39.81" y="94.45" width="6.11" height="6.13" fill="#000000"/><rect x="45.62" y="94.45" width="6.11" height="6.13" fill="#2fb47c"/><rect x="51.43" y="94.45" width="6.11" height="6.13" fill="#22a884"/><rect x="57.24" y="94.45" width="6.11" height="6.13" fill="#000000"/><rect x="63.05" y="94.45" width="6.11" height="6.13" fill="#000000"/><rect x="68.86" y="94.45" width="6.11" height="6.13" fill="#277e8e"/><rect x="74.67" y="94.45" width="6.11" height="6.13" fill="#2b748e"/><rect x="80.48" y="94.45" width="6.11" height="6.13" fill="#000000"/><rect x="86.29" y="94.45" width="6.11" height="6.13" fill="#2b748e"/><rect x="92.10" y="94.45" width="6.11" height="6.13" fill="#277e8e"/><rect x="97.91" y="94.45" width="6.11" height="6.13" fill="#2b748e"/><rect x="103.72" y="94.45" width="6.11" height="6.13" fill="#2b748e"/><rect x="109.53" y="94.45" width="6.11" height="6.13" fill="#22a884"/><rect x="115.34" y="94.45" width="6.11" height="6.13" fill="#7ad151"/><rect x="121.15" y="94.45" width="6.11" height="6.13" fill="#fde725"/><rect x="126.96" y="94.45" width="6.11" height="6.13" fill="#dfe318"/><rect x="132.77" y="94.45" width="6.11" height="6.13" fill="#000000"/><rect x="138.58" y="94.45" width="6.11" height="6.13" fill="#fde725"/><rect x="144.39" y="94.45" width="6.11" height="6.13" fill="#bddf26"/><rect x="150.20" y="94.45" width="6.11" height="6.13" fill="#2fb47c"/><rect x="156.01" y="94.45" width="6.11" height="6.13" fill="#20938c"/><rect x="161.82" y="94.45" width="6.11" height="6.13" fill="#277e8e"/><rect x="167.63" y="94.45" width="6.11" height="6.13" fill="#20938c"/><rect x="173.44" y="94.45" width="6.11" height="6.13" fill="#22a884"/><rect x="179.25" y="94.45" width="6.11" height="6.13" fill="#000000"/><rect x="185.06" y="94.45" width="6.11" height="6.13" fill="#000000"/><rect x="4.95" y="100.28" width="6.11" height="6.13" fill="#23898e"/><rect x="10.76" y="100.28" width="6.11" height="6.13" fill="#20938c"/><rect x="16.57" y="100.28" width="6.11" height="6.13" fill="#277e8e"/><rect x="22.38" y="100.28" width="6.11" height="6.13" fill="#277e8e"/><rect x="28.19" y="100.28" width="6.11" height="6.13" fill="#20938c"/><rect x="34.00" y="100.28" width="6.11" height="6.13" fill="#22a884"/><rect x="39.81" y="100.28" width="6.11" height="6.13" fill="#000000"/><rect x="45.62" y="100.28" width="6.11" height="6.13" fill="#5ec962"/><rect x="51.43" y="100.28" width="6.11" height="6.13" fill="#22a884"/><rect x="57.24" y="100.28" width="6.11" height="6.13" fill="#23898e"/><rect x="63.05" y="100.28" width="6.11" height="6.13" fill="#277e8e"/><rect x="68.86" y="100.28" width="6.11" height="6.13" fill="#2b748e"/><rect x="74.67" y="100.28" width="6.11" height="6.13" fill="#2b748e"/><rect x="80.48" y="100.28" width="6.11" height="6.13" fill="#277e8e"/><rect x="86.29" y="100.28" width="6.11" height="6.13" fill="#277e8e"/><rect x="92.10" y="100.28" width="6.11" height="6.13" fill="#23898e"/><rect x="97.91" y="100.28" width="6.11" height="6.13" fill="#23898e"/><rect x="103.72" y="100.28" width="6.11" height="6.13" fill="#20938c"/><rect x="109.53" y="100.28" width="6.11" height="6.13" fill="#5ec962"/><rect x="115.34" y="100.28" width="6.11" height="6.13" fill="#fde725"/><rect x="121.15" y="100.28" width="6.11" height="6.13" fill="#fde725"/><rect x="126.96" y="100.28" width="6.11" height="6.13" fill="#fde725"/><rect x="132.77" y="100.28" width="6.11" height="6.13" fill="#fde725"/><rect x="138.58" y="100.28" width="6.11" height="6.13" fill="#fde725"/><rect x="144.39" y="100.28" width="6.11" height="6.13" fill="#fde725"/><rect x="150.20" y="100.28" width="6.11" height="6.13" fill="#dfe318"/><rect x="156.01" y="100.28" width="6.11" height="6.13" fill="#2fb47c"/><rect x="161.82" y="100.28" width="6.11" height="6.13" fill="#23898e"/><rect x="167.63" y="100.28" width="6.11" height="6.13" fill="#20938c"/><rect x="173.44" y="100.28" width="6.11" height="6.13" fill="#22a884"/><rect x="179.25" y="100.28" width="6.11" height="6.13" fill="#20938c"/><rect x="185.06" y="100.28" width="6.11" height="6.13" fill="#22a884"/><rect x="4.95" y="106.11" width="6.11" height="6.13" fill="#23898e"/><rect x="10.76" y="106.11" width="6.11" height="6.13" fill="#23898e"/><rect x="16.57" y="106.11" width="6.11" height="6.13" fill="#277e8e"/><rect x="22.38" y="106.11" width="6.11" height="6.13" fill="#277e8e"/><rect x="28.19" y="106.11" width="6.11" height="6.13" fill="#20938c"/><rect x="34.00" y="106.11" width="6.11" height="6.13" fill="#20938c"/><rect x="39.81" y="106.11" width="6.11" height="6.13" fill="#000000"/><rect x="45.62" y="106.11" width="6.11" height="6.13" fill="#2fb47c"/><rect x="51.43" y="106.11" width="6.11" height="6.13" fill="#20938c"/><rect x="57.24" y="106.11" width="6.11" height="6.13" fill="#23898e"/><rect x="63.05" y="106.11" width="6.11" height="6.13" fill="#277e8e"/><rect x="68.86" y="106.11" width="6.11" height="6.13" fill="#2b748e"/><rect x="74.67" y="106.11" width="6.11" height="6.13" fill="#2b748e"/><rect x="80.48" y="106.11" width="6.11" height="6.13" fill="#2b748e"/><rect x="86.29" y="106.11" width="6.11" height="6.13" fill="#277e8e"/><rect x="92.10" y="106.11" width="6.11" height="6.13" fill="#23898e"/><rect x="97.91" y="106.11" width="6.11" height="6.13" fill="#2b748e"/><rect x="103.72" y="106.11" width="6.11" height="6.13" fill="#23898e"/><rect x="109.53" y="106.11" width="6.11" height="6.13" fill="#5ec962"/><rect x="115.34" y="106.11" width="6.11" height="6.13" fill="#dfe318"/><rect x="121.15" y="106.11" width="6.11" height="6.13" fill="#fde725"/><rect x="126.96" y="106.11" width="6.11" height="6.13" fill="#fde725"/><rect x="132.77" y="106.11" width="6.11" height="6.13" fill="#fde725"/><rect x="138.58" y="106.11" width="6.11" height="6.13" fill="#fde725"/><rect x="144.39" y="106.11" width="6.11" height="6.13" fill="#fde725"/><rect x="150.20" y="106.11" width="6.11" height="6.13" fill="#dfe318"/><rect x="156.01" y="106.11" width="6.11" height="6.13" fill="#9bd93c"/><rect x="161.82" y="106.11" width="6.11" height="6.13" fill="#23898e"/><rect x="167.63" y="106.11" width="6.11" height="6.13" fill="#22a884"/><rect x="173.44" y="106.11" width="6.11" height="6.13" fill="#22a884"/><rect x="179.25" y="106.11" width="6.11" height="6.13" fill="#20938c"/><rect x="185.06" y="106.11" width="6.11" height="6.13" fill="#000000"/><rect x="4.95" y="111.94" width="6.11" height="6.13" fill="#2b748e"/><rect x="10.76" y="111.94" width="6.11" height="6.13" fill="#23898e"/><rect x="16.57" y="111.94" width="6.11" height="6.13" fill="#277e8e"/><rect x="22.38" y="111.94" width="6.11" height="6.13" fill="#20938c"/><rect x="28.19" y="111.94" width="6.11" height="6.13" fill="#23898e"/><rect x="34.00" y="111.94" width="6.11" height="6.13" fill="#22a884"/><rect x="39.81" y="111.94" width="6.11" height="6.13" fill="#000000"/><rect x="45.62" y="111.94" width="6.11" height="6.13" fill="#22a884"/><rect x="51.43" y="111.94" width="6.11" height="6.13" fill="#23898e"/><rect x="57.24" y="111.94" width="6.11" height="6.13" fill="#277e8e"/><rect x="63.05" y="111.94" width="6.11" height="6.13" fill="#2b748e"/><rect x="68.86" y="111.94" width="6.11" height="6.13" fill="#277e8e"/><rect x="74.67" y="111.94" width="6.11" height="6.13" fill="#277e8e"/><rect x="80.48" y="111.94" width="6.11" height="6.13" fill="#23898e"/><rect x="86.29" y="111.94" width="6.11" height="6.13" fill="#23898e"/><rect x="92.10" y="111.94" width="6.11" height="6.13" fill="#22a884"/><rect x="97.91" y="111.94" width="6.11" height="6.13" fill="#23898e"/><rect x="103.72" y="111.94" width="6.11" height="6.13" fill="#23898e"/><rect x="109.53" y="111.94" width="6.11" height="6.13" fill="#7ad151"/><rect x="115.34" y="111.94" width="6.11" height="6.13" fill="#dfe318"/><rect x="121.15" y="111.94" width="6.11" height="6.13" fill="#dfe318"/><rect x="126.96" y="111.94" width="6.11" height="6.13" fill="#000000"/><rect x="132.77" y="111.94" width="6.11" height="6.13" fill="#fde725"/><rect x="138.58" y="111.94" width="6.11" height="6.13" fill="#fde725"/><rect x="144.39" y="111.94" width="6.11" height="6.13" fill="#fde725"/><rect x="150.20" y="111.94" width="6.11" height="6.13" fill="#dfe318"/><rect x="156.01" y="111.94" width="6.11" height="6.13" fill="#9bd93c"/><rect x="161.82" y="111.94" width="6.11" height="6.13" fill="#5ec962"/><rect x="167.63" y="111.94" width="6.11" height="6.13" fill="#22a884"/><rect x="173.44" y="111.94" width="6.11" height="6.13" fill="#2fb47c"/><rect x="179.25" y="111.94" width="6.11" height="6.13" fill="#20938c"/><rect x="185.06" y="111.94" width="6.11" height="6.13" fill="#22a884"/><rect x="4.95" y="117.77" width="6.11" height="6.13" fill="#000000"/><rect x="10.76" y="117.77" width="6.11" height="6.13" fill="#2b748e"/><rect x="16.57" y="117.77" width="6.11" height="6.13" fill="#277e8e"/><rect x="22.38" y="117.77" width="6.11" height="6.13" fill="#277e8e"/><rect x="28.19" y="117.77" width="6.11" height="6.13" fill="#277e8e"/><rect x="34.00" y="117.77" width="6.11" height="6.13" fill="#22a884"/><rect x="39.81" y="117.77" width="6.11" height="6.13" fill="#000000"/><rect x="45.62" y="117.77" width="6.11" height="6.13" fill="#22a884"/><rect x="51.43" y="117.77" width="6.11" height="6.13" fill="#277e8e"/><rect x="57.24" y="117.77" width="6.11" height="6.13" fill="#277e8e"/><rect x="63.05" y="117.77" width="6.11" height="6.13" fill="#2b748e"/><rect x="68.86" y="117.77" width="6.11" height="6.13" fill="#2b748e"/><rect x="74.67" y="117.77" width="6.11" height="6.13" fill="#277e8e"/><rect x="80.48" y="117.77" width="6.11" height="6.13" fill="#000000"/><rect x="86.29" y="117.77" width="6.11" height="6.13" fill="#277e8e"/><rect x="92.10" y="117.77" width="6.11" height="6.13" fill="#22a884"/><rect x="97.91" y="117.77" width="6.11" height="6.13" fill="#000000"/><rect x="103.72" y="117.77" width="6.11" height="6.13" fill="#7ad151"/><rect x="109.53" y="117.77" width="6.11" height="6.13" fill="#000000"/><rect x="115.34" y="117.77" width="6.11" height="6.13" fill="#bddf26"/><rect x="121.15" y="117.77" width="6.11" height="6.13" fill="#dfe318"/><rect x="126.96" y="117.77" width="6.11" height="6.13" fill="#fde725"/><rect x="132.77" y="117.77" width="6.11" height="6.13" fill="#000000"/><rect x="138.58" y="117.77" width="6.11" height="6.13" fill="#000000"/><rect x="144.39" y="117.77" width="6.11" height="6.13" fill="#000000"/><rect x="150.20" y="117.77" width="6.11" height="6.13" fill="#fde725"/><rect x="156.01" y="117.77" width="6.11" height="6.13" fill="#dfe318"/><rect x="161.82" y="117.77" width="6.11" height="6.13" fill="#9bd93c"/><rect x="167.63" y="117.77" width="6.11" height="6.13" fill="#bddf26"/><rect x="173.44" y="117.77" width="6.11" height="6.13" fill="#20938c"/><rect x="179.25" y="117.77" width="6.11" height="6.13" fill="#277e8e"/><rect x="185.06" y="117.77" width="6.11" height="6.13" fill="#000000"/><rect x="4.95" y="123.60" width="6.11" height="6.13" fill="#2b748e"/><rect x="10.76" y="123.60" width="6.11" height="6.13" fill="#277e8e"/><rect x="16.57" y="123.60" width="6.11" height="6.13" fill="#277e8e"/><rect x="22.38" y="123.60" width="6.11" height="6.13" fill="#277e8e"/><rect x="28.19" y="123.60" width="6.11" height="6.13" fill="#23898e"/><rect x="34.00" y="123.60" width="6.11" height="6.13" fill="#2fb47c"/><rect x="39.81" y="123.60" width="6.11" height="6.13" fill="#000000"/><rect x="45.62" y="123.60" width="6.11" height="6.13" fill="#23898e"/><rect x="51.43" y="123.60" width="6.11" height="6.13" fill="#277e8e"/><rect x="57.24" y="123.60" width="6.11" height="6.13" fill="#277e8e"/><rect x="63.05" y="123.60" width="6.11" height="6.13" fill="#277e8e"/><rect x="68.86" y="123.60" width="6.11" height="6.13" fill="#277e8e"/><rect x="74.67" y="123.60" width="6.11" height="6.13" fill="#23898e"/><rect x="80.48" y="123.60" width="6.11" height="6.13" fill="#277e8e"/><rect x="86.29" y="123.60" width="6.11" height="6.13" fill="#277e8e"/><rect x="92.10" y="123.60" width="6.11" height="6.13" fill="#22a884"/><rect x="97.91" y="123.60" width="6.11" height="6.13" fill="#2fb47c"/><rect x="103.72" y="123.60" width="6.11" height="6.13" fill="#2fb47c"/><rect x="109.53" y="123.60" width="6.11" height="6.13" fill="#7ad151"/><rect x="115.34" y="123.60" width="6.11" height="6.13" fill="#bddf26"/><rect x="121.15" y="123.60" width="6.11" height="6.13" fill="#fde725"/><rect x="126.96" y="123.60" width="6.11" height="6.13" fill="#fde725"/><rect x="132.77" y="123.60" width="6.11" height="6.13" fill="#fde725"/><rect x="138.58" y="123.60" width="6.11" height="6.13" fill="#fde725"/><rect x="144.39" y="123.60" width="6.11" height="6.13" fill="#fde725"/><rect x="150.20" y="123.60" width="6.11" height="6.13" fill="#fde725"/><rect x="156.01" y="123.60" width="6.11" height="6.13" fill="#fde725"/><rect x="161.82" y="123.60" width="6.11" height="6.13" fill="#fde725"/><rect x="167.63" y="123.60" width="6.11" height="6.13" fill="#bddf26"/><rect x="173.44" y="123.60" width="6.11" height="6.13" fill="#22a884"/><rect x="179.25" y="123.60" width="6.11" height="6.13" fill="#23898e"/><rect x="185.06" y="123.60" width="6.11" height="6.13" fill="#277e8e"/><rect x="4.95" y="129.43" width="6.11" height="6.13" fill="#23898e"/><rect x="10.76" y="129.43" width="6.11" height="6.13" fill="#277e8e"/><rect x="16.57" y="129.43" width="6.11" height="6.13" fill="#277e8e"/><rect x="22.38" y="129.43" width="6.11" height="6.13" fill="#23898e"/><rect x="28.19" y="129.43" width="6.11" height="6.13" fill="#1fa088"/><rect x="34.00" y="129.43" width="6.11" height="6.13" fill="#22a884"/><rect x="39.81" y="129.43" width="6.11" height="6.13" fill="#000000"/><rect x="45.62" y="129.43" width="6.11" height="6.13" fill="#23898e"/><rect x="51.43" y="129.43" width="6.11" height="6.13" fill="#277e8e"/><rect x="57.24" y="129.43" width="6.11" height="6.13" fill="#2b748e"/><rect x="63.05" y="129.43" width="6.11" height="6.13" fill="#2b748e"/><rect x="68.86" y="129.43" width="6.11" height="6.13" fill="#23898e"/><rect x="74.67" y="129.43" width="6.11" height="6.13" fill="#277e8e"/><rect x="80.48" y="129.43" width="6.11" height="6.13" fill="#277e8e"/><rect x="86.29" y="129.43" width="6.11" height="6.13" fill="#23898e"/><rect x="92.10" y="129.43" width="6.11" height="6.13" fill="#2fb47c"/><rect x="97.91" y="129.43" width="6.11" height="6.13" fill="#2fb47c"/><rect x="103.72" y="129.43" width="6.11" height="6.13" fill="#22a884"/><rect x="109.53" y="129.43" width="6.11" height="6.13" fill="#44bf70"/><rect x="115.34" y="129.43" width="6.11" height="6.13" fill="#2fb47c"/><rect x="121.15" y="129.43" width="6.11" height="6.13" fill="#dfe318"/><rect x="126.96" y="129.43" width="6.11" height="6.13" fill="#fde725"/><rect x="132.77" y="129.43" width="6.11" height="6.13" fill="#fde725"/><rect x="138.58" y="129.43" width="6.11" height="6.13" fill="#fde725"/><rect x="144.39" y="129.43" width="6.11" height="6.13" fill="#fde725"/><rect x="150.20" y="129.43" width="6.11" height="6.13" fill="#fde725"/><rect x="156.01" y="129.43" width="6.11" height="6.13" fill="#fde725"/><rect x="161.82" y="129.43" width="6.11" height="6.13" fill="#fde725"/><rect x="167.63" y="129.43" width="6.11" height="6.13" fill="#bddf26"/><rect x="173.44" y="129.43" width="6.11" height="6.13" fill="#1fa088"/><rect x="179.25" y="129.43" width="6.11" height="6.13" fill="#2b748e"/><rect x="185.06" y="129.43" width="6.11" height="6.13" fill="#2b748e"/><rect x="4.95" y="135.26" width="6.11" height="6.13" fill="#23898e"/><rect x="10.76" y="135.26" width="6.11" height="6.13" fill="#277e8e"/><rect x="16.57" y="135.26" width="6.11" height="6.13" fill="#277e8e"/><rect x="22.38" y="135.26" width="6.11" height="6.13" fill="#23898e"/><rect x="28.19" y="135.26" width="6.11" height="6.13" fill="#1fa088"/><rect x="34.00" y="135.26" width="6.11" height="6.13" fill="#23898e"/><rect x="39.81" y="135.26" width="6.11" height="6.13" fill="#000000"/><rect x="45.62" y="135.26" width="6.11" height="6.13" fill="#23898e"/><rect x="51.43" y="135.26" width="6.11" height="6.13" fill="#2b748e"/><rect x="57.24" y="135.26" width="6.11" height="6.13" fill="#23898e"/><rect x="63.05" y="135.26" width="6.11" height="6.13" fill="#277e8e"/><rect x="68.86" y="135.26" width="6.11" height="6.13" fill="#2b748e"/><rect x="74.67" y="135.26" width="6.11" height="6.13" fill="#277e8e"/><rect x="80.48" y="135.26" width="6.11" height="6.13" fill="#277e8e"/><rect x="86.29" y="135.26" width="6.11" height="6.13" fill="#20938c"/><rect x="92.10" y="135.26" width="6.11" height="6.13" fill="#2fb47c"/><rect x="97.91" y="135.26" width="6.11" height="6.13" fill="#44bf70"/><rect x="103.72" y="135.26" width="6.11" height="6.13" fill="#44bf70"/><rect x="109.53" y="135.26" width="6.11" height="6.13" fill="#22a884"/><rect x="115.34" y="135.26" width="6.11" height="6.13" fill="#2fb47c"/><rect x="121.15" y="135.26" width="6.11" height="6.13" fill="#2fb47c"/><rect x="126.96" y="135.26" width="6.11" height="6.13" fill="#fde725"/><rect x="132.77" y="135.26" width="6.11" height="6.13" fill="#fde725"/><rect x="138.58" y="135.26" width="6.11" height="6.13" fill="#fde725"/><rect x="144.39" y="135.26" width="6.11" height="6.13" fill="#fde725"/><rect x="150.20" y="135.26" width="6.11" height="6.13" fill="#000000"/><rect x="156.01" y="135.26" width="6.11" height="6.13" fill="#dfe318"/><rect x="161.82" y="135.26" width="6.11" height="6.13" fill="#22a884"/><rect x="167.63" y="135.26" width="6.11" height="6.13" fill="#20938c"/><rect x="173.44" y="135.26" width="6.11" height="6.13" fill="#23898e"/><rect x="179.25" y="135.26" width="6.11" height="6.13" fill="#277e8e"/><rect x="185.06" y="135.26" width="6.11" height="6.13" fill="#000000"/><rect x="4.95" y="141.09" width="6.11" height="6.13" fill="#38588c"/><rect x="10.76" y="141.09" width="6.11" height="6.13" fill="#23898e"/><rect x="16.57" y="141.09" width="6.11" height="6.13" fill="#20938c"/><rect x="22.38" y="141.09" width="6.11" height="6.13" fill="#23898e"/><rect x="28.19" y="141.09" width="6.11" height="6.13" fill="#1fa088"/><rect x="34.00" y="141.09" width="6.11" height="6.13" fill="#277e8e"/><rect x="39.81" y="141.09" width="6.11" height="6.13" fill="#000000"/><rect x="45.62" y="141.09" width="6.11" height="6.13" fill="#23898e"/><rect x="51.43" y="141.09" width="6.11" height="6.13" fill="#277e8e"/><rect x="57.24" y="141.09" width="6.11" height="6.13" fill="#2b748e"/><rect x="63.05" y="141.09" width="6.11" height="6.13" fill="#277e8e"/><rect x="68.86" y="141.09" width="6.11" height="6.13" fill="#23898e"/><rect x="74.67" y="141.09" width="6.11" height="6.13" fill="#277e8e"/><rect x="80.48" y="141.09" width="6.11" height="6.13" fill="#23898e"/><rect x="86.29" y="141.09" width="6.11" height="6.13" fill="#1fa088"/><rect x="92.10" y="141.09" width="6.11" height="6.13" fill="#22a884"/><rect x="97.91" y="141.09" width="6.11" height="6.13" fill="#2fb47c"/><rect x="103.72" y="141.09" width="6.11" height="6.13" fill="#2fb47c"/><rect x="109.53" y="141.09" width="6.11" height="6.13" fill="#22a884"/><rect x="115.34" y="141.09" width="6.11" height="6.13" fill="#22a884"/><rect x="121.15" y="141.09" width="6.11" height="6.13" fill="#22a884"/><rect x="126.96" y="141.09" width="6.11" height="6.13" fill="#5ec962"/><rect x="132.77" y="141.09" width="6.11" height="6.13" fill="#9bd93c"/><rect x="138.58" y="141.09" width="6.11" height="6.13" fill="#bddf26"/><rect x="144.39" y="141.09" width="6.11" height="6.13" fill="#bddf26"/><rect x="150.20" y="141.09" width="6.11" height="6.13" fill="#9bd93c"/><rect x="156.01" y="141.09" width="6.11" height="6.13" fill="#2fb47c"/><rect x="161.82" y="141.09" width="6.11" height="6.13" fill="#22a884"/><rect x="167.63" y="141.09" width="6.11" height="6.13" fill="#20938c"/><rect x="173.44" y="141.09" width="6.11" height="6.13" fill="#23898e"/><rect x="179.25" y="141.09" width="6.11" height="6.13" fill="#277e8e"/><rect x="185.06" y="141.09" width="6.11" height="6.13" fill="#277e8e"/><rect x="4.95" y="146.92" width="6.11" height="6.13" fill="#277e8e"/><rect x="10.76" y="146.92" width="6.11" height="6.13" fill="#277e8e"/><rect x="16.57" y="146.92" width="6.11" height="6.13" fill="#1fa088"/><rect x="22.38" y="146.92" width="6.11" height="6.13" fill="#1fa088"/><rect x="28.19" y="146.92" width="6.11" height="6.13" fill="#23898e"/><rect x="34.00" y="146.92" width="6.11" height="6.13" fill="#277e8e"/><rect x="39.81" y="146.92" width="6.11" height="6.13" fill="#000000"/><rect x="45.62" y="146.92" width="6.11" height="6.13" fill="#277e8e"/><rect x="51.43" y="146.92" width="6.11" height="6.13" fill="#2b748e"/><rect x="57.24" y="146.92" width="6.11" height="6.13" fill="#2b748e"/><rect x="63.05" y="146.92" width="6.11" height="6.13" fill="#23898e"/><rect x="68.86" y="146.92" width="6.11" height="6.13" fill="#277e8e"/><rect x="74.67" y="146.92" width="6.11" height="6.13" fill="#277e8e"/><rect x="80.48" y="146.92" width="6.11" height="6.13" fill="#31668e"/><rect x="86.29" y="146.92" width="6.11" height="6.13" fill="#277e8e"/><rect x="92.10" y="146.92" width="6.11" height="6.13" fill="#20938c"/><rect x="97.91" y="146.92" width="6.11" height="6.13" fill="#2fb47c"/><rect x="103.72" y="146.92" width="6.11" height="6.13" fill="#44bf70"/><rect x="109.53" y="146.92" width="6.11" height="6.13" fill="#22a884"/><rect x="115.34" y="146.92" width="6.11" height="6.13" fill="#23898e"/><rect x="121.15" y="146.92" width="6.11" height="6.13" fill="#277e8e"/><rect x="126.96" y="146.92" width="6.11" height="6.13" fill="#20938c"/><rect x="132.77" y="146.92" width="6.11" height="6.13" fill="#23898e"/><rect x="138.58" y="146.92" width="6.11" height="6.13" fill="#20938c"/><rect x="144.39" y="146.92" width="6.11" height="6.13" fill="#22a884"/><rect x="150.20" y="146.92" width="6.11" height="6.13" fill="#20938c"/><rect x="156.01" y="146.92" width="6.11" height="6.13" fill="#20938c"/><rect x="161.82" y="146.92" width="6.11" height="6.13" fill="#22a884"/><rect x="167.63" y="146.92" width="6.11" height="6.13" fill="#2b748e"/><rect x="173.44" y="146.92" width="6.11" height="6.13" fill="#2b748e"/><rect x="179.25" y="146.92" width="6.11" height="6.13" fill="#23898e"/><rect x="185.06" y="146.92" width="6.11" height="6.13" fill="#277e8e"/><rect x="4.95" y="152.75" width="6.11" height="6.13" fill="#23898e"/><rect x="10.76" y="152.75" width="6.11" height="6.13" fill="#23898e"/><rect x="16.57" y="152.75" width="6.11" height="6.13" fill="#1fa088"/><rect x="22.38" y="152.75" width="6.11" height="6.13" fill="#23898e"/><rect x="28.19" y="152.75" width="6.11" height="6.13" fill="#277e8e"/><rect x="34.00" y="152.75" width="6.11" height="6.13" fill="#23898e"/><rect x="39.81" y="152.75" width="6.11" height="6.13" fill="#000000"/><rect x="45.62" y="152.75" width="6.11" height="6.13" fill="#23898e"/><rect x="51.43" y="152.75" width="6.11" height="6.13" fill="#2b748e"/><rect x="57.24" y="152.75" width="6.11" height="6.13" fill="#277e8e"/><rect x="63.05" y="152.75" width="6.11" height="6.13" fill="#277e8e"/><rect x="68.86" y="152.75" width="6.11" height="6.13" fill="#23898e"/><rect x="74.67" y="152.75" width="6.11" height="6.13" fill="#277e8e"/><rect x="80.48" y="152.75" width="6.11" height="6.13" fill="#2b748e"/><rect x="86.29" y="152.75" width="6.11" height="6.13" fill="#277e8e"/><rect x="92.10" y="152.75" width="6.11" height="6.13" fill="#23898e"/><rect x="97.91" y="152.75" width="6.11" height="6.13" fill="#2fb47c"/><rect x="103.72" y="152.75" width="6.11" height="6.13" fill="#7ad151"/><rect x="109.53" y="152.75" width="6.11" height="6.13" fill="#44bf70"/><rect x="115.34" y="152.75" width="6.11" height="6.13" fill="#20938c"/><rect x="121.15" y="152.75" width="6.11" height="6.13" fill="#20938c"/><rect x="126.96" y="152.75" width="6.11" height="6.13" fill="#23898e"/><rect x="132.77" y="152.75" width="6.11" height="6.13" fill="#20938c"/><rect x="138.58" y="152.75" width="6.11" height="6.13" fill="#20938c"/><rect x="144.39" y="152.75" width="6.11" height="6.13" fill="#22a884"/><rect x="150.20" y="152.75" width="6.11" height="6.13" fill="#20938c"/><rect x="156.01" y="152.75" width="6.11" height="6.13" fill="#20938c"/><rect x="161.82" y="152.75" width="6.11" height="6.13" fill="#2b748e"/><rect x="167.63" y="152.75" width="6.11" height="6.13" fill="#23898e"/><rect x="173.44" y="152.75" width="6.11" height="6.13" fill="#000000"/><rect x="179.25" y="152.75" width="6.11" height="6.13" fill="#277e8e"/><rect x="185.06" y="152.75" width="6.11" height="6.13" fill="#277e8e"/><rect x="4.95" y="158.58" width="6.11" height="6.13" fill="#1fa088"/><rect x="10.76" y="158.58" width="6.11" height="6.13" fill="#23898e"/><rect x="16.57" y="158.58" width="6.11" height="6.13" fill="#1fa088"/><rect x="22.38" y="158.58" width="6.11" height="6.13" fill="#23898e"/><rect x="28.19" y="158.58" width="6.11" height="6.13" fill="#23898e"/><rect x="34.00" y="158.58" width="6.11" height="6.13" fill="#277e8e"/><rect x="39.81" y="158.58" width="6.11" height="6.13" fill="#000000"/><rect x="45.62" y="158.58" width="6.11" height="6.13" fill="#277e8e"/><rect x="51.43" y="158.58" width="6.11" height="6.13" fill="#277e8e"/><rect x="57.24" y="158.58" width="6.11" height="6.13" fill="#23898e"/><rect x="63.05" y="158.58" width="6.11" height="6.13" fill="#2b748e"/><rect x="68.86" y="158.58" width="6.11" height="6.13" fill="#2b748e"/><rect x="74.67" y="158.58" width="6.11" height="6.13" fill="#2b748e"/><rect x="80.48" y="158.58" width="6.11" height="6.13" fill="#277e8e"/><rect x="86.29" y="158.58" width="6.11" height="6.13" fill="#23898e"/><rect x="92.10" y="158.58" width="6.11" height="6.13" fill="#23898e"/><rect x="97.91" y="158.58" width="6.11" height="6.13" fill="#20938c"/><rect x="103.72" y="158.58" width="6.11" height="6.13" fill="#44bf70"/><rect x="109.53" y="158.58" width="6.11" height="6.13" fill="#44bf70"/><rect x="115.34" y="158.58" width="6.11" height="6.13" fill="#22a884"/><rect x="121.15" y="158.58" width="6.11" height="6.13" fill="#22a884"/><rect x="126.96" y="158.58" width="6.11" height="6.13" fill="#22a884"/><rect x="132.77" y="158.58" width="6.11" height="6.13" fill="#000000"/><rect x="138.58" y="158.58" width="6.11" height="6.13" fill="#23898e"/><rect x="144.39" y="158.58" width="6.11" height="6.13" fill="#23898e"/><rect x="150.20" y="158.58" width="6.11" height="6.13" fill="#277e8e"/><rect x="156.01" y="158.58" width="6.11" height="6.13" fill="#23898e"/><rect x="161.82" y="158.58" width="6.11" height="6.13" fill="#23898e"/><rect x="167.63" y="158.58" width="6.11" height="6.13" fill="#277e8e"/><rect x="173.44" y="158.58" width="6.11" height="6.13" fill="#2b748e"/><rect x="179.25" y="158.58" width="6.11" height="6.13" fill="#277e8e"/><rect x="185.06" y="158.58" width="6.11" height="6.13" fill="#000000"/><rect x="4.95" y="164.41" width="6.11" height="6.13" fill="#23898e"/><rect x="10.76" y="164.41" width="6.11" height="6.13" fill="#23898e"/><rect x="16.57" y="164.41" width="6.11" height="6.13" fill="#20938c"/><rect x="22.38" y="164.41" width="6.11" height="6.13" fill="#23898e"/><rect x="28.19" y="164.41" width="6.11" height="6.13" fill="#23898e"/><rect x="34.00" y="164.41" width="6.11" height="6.13" fill="#277e8e"/><rect x="39.81" y="164.41" width="6.11" height="6.13" fill="#000000"/><rect x="45.62" y="164.41" width="6.11" height="6.13" fill="#23898e"/><rect x="51.43" y="164.41" width="6.11" height="6.13" fill="#2b748e"/><rect x="57.24" y="164.41" width="6.11" height="6.13" fill="#277e8e"/><rect x="63.05" y="164.41" width="6.11" height="6.13" fill="#277e8e"/><rect x="68.86" y="164.41" width="6.11" height="6.13" fill="#2b748e"/><rect x="74.67" y="164.41" width="6.11" height="6.13" fill="#31668e"/><rect x="80.48" y="164.41" width="6.11" height="6.13" fill="#277e8e"/><rect x="86.29" y="164.41" width="6.11" height="6.13" fill="#2b748e"/><rect x="92.10" y="164.41" width="6.11" height="6.13" fill="#277e8e"/><rect x="97.91" y="164.41" width="6.11" height="6.13" fill="#277e8e"/><rect x="103.72" y="164.41" width="6.11" height="6.13" fill="#23898e"/><rect x="109.53" y="164.41" width="6.11" height="6.13" fill="#22a884"/><rect x="115.34" y="164.41" width="6.11" height="6.13" fill="#44bf70"/><rect x="121.15" y="164.41" width="6.11" height="6.13" fill="#5ec962"/><rect x="126.96" y="164.41" width="6.11" height="6.13" fill="#22a884"/><rect x="132.77" y="164.41" width="6.11" height="6.13" fill="#20938c"/><rect x="138.58" y="164.41" width="6.11" height="6.13" fill="#23898e"/><rect x="144.39" y="164.41" width="6.11" height="6.13" fill="#277e8e"/><rect x="150.20" y="164.41" width="6.11" height="6.13" fill="#23898e"/><rect x="156.01" y="164.41" width="6.11" height="6.13" fill="#23898e"/><rect x="161.82" y="164.41" width="6.11" height="6.13" fill="#277e8e"/><rect x="167.63" y="164.41" width="6.11" height="6.13" fill="#23898e"/><rect x="173.44" y="164.41" width="6.11" height="6.13" fill="#23898e"/><rect x="179.25" y="164.41" width="6.11" height="6.13" fill="#2b748e"/><rect x="185.06" y="164.41" width="6.11" height="6.13" fill="#000000"/><rect x="4.95" y="170.24" width="6.11" height="6.13" fill="#277e8e"/><rect x="10.76" y="170.24" width="6.11" height="6.13" fill="#277e8e"/><rect x="16.57" y="170.24" width="6.11" height="6.13" fill="#2b748e"/><rect x="22.38" y="170.24" width="6.11" height="6.13" fill="#23898e"/><rect x="28.19" y="170.24" width="6.11" height="6.13" fill="#20938c"/><rect x="34.00" y="170.24" width="6.11" height="6.13" fill="#1fa088"/><rect x="39.81" y="170.24" width="6.11" height="6.13" fill="#000000"/><rect x="45.62" y="170.24" width="6.11" height="6.13" fill="#1fa088"/><rect x="51.43" y="170.24" width="6.11" height="6.13" fill="#23898e"/><rect x="57.24" y="170.24" width="6.11" height="6.13" fill="#277e8e"/><rect x="63.05" y="170.24" width="6.11" height="6.13" fill="#277e8e"/><rect x="68.86" y="170.24" width="6.11" height="6.13" fill="#2b748e"/><rect x="74.67" y="170.24" width="6.11" height="6.13" fill="#277e8e"/><rect x="80.48" y="170.24" width="6.11" height="6.13" fill="#277e8e"/><rect x="86.29" y="170.24" width="6.11" height="6.13" fill="#277e8e"/><rect x="92.10" y="170.24" width="6.11" height="6.13" fill="#2b748e"/><rect x="97.91" y="170.24" width="6.11" height="6.13" fill="#20938c"/><rect x="103.72" y="170.24" width="6.11" height="6.13" fill="#277e8e"/><rect x="109.53" y="170.24" width="6.11" height="6.13" fill="#23898e"/><rect x="115.34" y="170.24" width="6.11" height="6.13" fill="#44bf70"/><rect x="121.15" y="170.24" width="6.11" height="6.13" fill="#2fb47c"/><rect x="126.96" y="170.24" width="6.11" height="6.13" fill="#20938c"/><rect x="132.77" y="170.24" width="6.11" height="6.13" fill="#22a884"/><rect x="138.58" y="170.24" width="6.11" height="6.13" fill="#20938c"/><rect x="144.39" y="170.24" width="6.11" height="6.13" fill="#23898e"/><rect x="150.20" y="170.24" width="6.11" height="6.13" fill="#22a884"/><rect x="156.01" y="170.24" width="6.11" height="6.13" fill="#23898e"/><rect x="161.82" y="170.24" width="6.11" height="6.13" fill="#20938c"/><rect x="167.63" y="170.24" width="6.11" height="6.13" fill="#1fa088"/><rect x="173.44" y="170.24" width="6.11" height="6.13" fill="#1fa088"/><rect x="179.25" y="170.24" width="6.11" height="6.13" fill="#1fa088"/><rect x="185.06" y="170.24" width="6.11" height="6.13" fill="#23898e"/><rect x="4.95" y="176.07" width="6.11" height="6.13" fill="#38588c"/><rect x="10.76" y="176.07" width="6.11" height="6.13" fill="#277e8e"/><rect x="16.57" y="176.07" width="6.11" height="6.13" fill="#23898e"/><rect x="22.38" y="176.07" width="6.11" height="6.13" fill="#23898e"/><rect x="28.19" y="176.07" width="6.11" height="6.13" fill="#277e8e"/><rect x="34.00" y="176.07" width="6.11" height="6.13" fill="#1fa088"/><rect x="39.81" y="176.07" width="6.11" height="6.13" fill="#000000"/><rect x="45.62" y="176.07" width="6.11" height="6.13" fill="#1fa088"/><rect x="51.43" y="176.07" width="6.11" height="6.13" fill="#23898e"/><rect x="57.24" y="176.07" width="6.11" height="6.13" fill="#277e8e"/><rect x="63.05" y="176.07" width="6.11" height="6.13" fill="#277e8e"/><rect x="68.86" y="176.07" width="6.11" height="6.13" fill="#277e8e"/><rect x="74.67" y="176.07" width="6.11" height="6.13" fill="#23898e"/><rect x="80.48" y="176.07" width="6.11" height="6.13" fill="#2b748e"/><rect x="86.29" y="176.07" width="6.11" height="6.13" fill="#277e8e"/><rect x="92.10" y="176.07" width="6.11" height="6.13" fill="#2b748e"/><rect x="97.91" y="176.07" width="6.11" height="6.13" fill="#000000"/><rect x="103.72" y="176.07" width="6.11" height="6.13" fill="#277e8e"/><rect x="109.53" y="176.07" width="6.11" height="6.13" fill="#23898e"/><rect x="115.34" y="176.07" width="6.11" height="6.13" fill="#23898e"/><rect x="121.15" y="176.07" width="6.11" height="6.13" fill="#20938c"/><rect x="126.96" y="176.07" width="6.11" height="6.13" fill="#23898e"/><rect x="132.77" y="176.07" width="6.11" height="6.13" fill="#23898e"/><rect x="138.58" y="176.07" width="6.11" height="6.13" fill="#1fa088"/><rect x="144.39" y="176.07" width="6.11" height="6.13" fill="#22a884"/><rect x="150.20" y="176.07" width="6.11" height="6.13" fill="#2fb47c"/><rect x="156.01" y="176.07" width="6.11" height="6.13" fill="#22a884"/><rect x="161.82" y="176.07" width="6.11" height="6.13" fill="#20938c"/><rect x="167.63" y="176.07" width="6.11" height="6.13" fill="#20938c"/><rect x="173.44" y="176.07" width="6.11" height="6.13" fill="#23898e"/><rect x="179.25" y="176.07" width="6.11" height="6.13" fill="#277e8e"/><rect x="185.06" y="176.07" width="6.11" height="6.13" fill="#23898e"/><rect x="4.95" y="181.90" width="6.11" height="6.13" fill="#277e8e"/><rect x="10.76" y="181.90" width="6.11" height="6.13" fill="#277e8e"/><rect x="16.57" y="181.90" width="6.11" height="6.13" fill="#277e8e"/><rect x="22.38" y="181.90" width="6.11" height="6.13" fill="#23898e"/><rect x="28.19" y="181.90" width="6.11" height="6.13" fill="#23898e"/><rect x="34.00" y="181.90" width="6.11" height="6.13" fill="#1fa088"/><rect x="39.81" y="181.90" width="6.11" height="6.13" fill="#000000"/><rect x="45.62" y="181.90" width="6.11" height="6.13" fill="#000000"/><rect x="51.43" y="181.90" width="6.11" height="6.13" fill="#277e8e"/><rect x="57.24" y="181.90" width="6.11" height="6.13" fill="#2b748e"/><rect x="63.05" y="181.90" width="6.11" height="6.13" fill="#2b748e"/><rect x="68.86" y="181.90" width="6.11" height="6.13" fill="#277e8e"/><rect x="74.67" y="181.90" width="6.11" height="6.13" fill="#277e8e"/><rect x="80.48" y="181.90" width="6.11" height="6.13" fill="#2b748e"/><rect x="86.29" y="181.90" width="6.11" height="6.13" fill="#277e8e"/><rect x="92.10" y="181.90" width="6.11" height="6.13" fill="#2b748e"/><rect x="97.91" y="181.90" width="6.11" height="6.13" fill="#2b748e"/><rect x="103.72" y="181.90" width="6.11" height="6.13" fill="#277e8e"/><rect x="109.53" y="181.90" width="6.11" height="6.13" fill="#2b748e"/><rect x="115.34" y="181.90" width="6.11" height="6.13" fill="#23898e"/><rect x="121.15" y="181.90" width="6.11" height="6.13" fill="#2b748e"/><rect x="126.96" y="181.90" width="6.11" height="6.13" fill="#23898e"/><rect x="132.77" y="181.90" width="6.11" height="6.13" fill="#000000"/><rect x="138.58" y="181.90" width="6.11" height="6.13" fill="#20938c"/><rect x="144.39" y="181.90" width="6.11" height="6.13" fill="#23898e"/><rect x="150.20" y="181.90" width="6.11" height="6.13" fill="#23898e"/><rect x="156.01" y="181.90" width="6.11" height="6.13" fill="#23898e"/><rect x="161.82" y="181.90" width="6.11" height="6.13" fill="#23898e"/><rect x="167.63" y="181.90" width="6.11" height="6.13" fill="#23898e"/><rect x="173.44" y="181.90" width="6.11" height="6.13" fill="#2b748e"/><rect x="179.25" y="181.90" width="6.11" height="6.13" fill="#277e8e"/><rect x="185.06" y="181.90" width="6.11" height="6.13" fill="#23898e"/><rect x="4.95" y="187.73" width="6.11" height="6.13" fill="#277e8e"/><rect x="10.76" y="187.73" width="6.11" height="6.13" fill="#2b748e"/><rect x="16.57" y="187.73" width="6.11" height="6.13" fill="#2b748e"/><rect x="22.38" y="187.73" width="6.11" height="6.13" fill="#277e8e"/><rect x="28.19" y="187.73" width="6.11" height="6.13" fill="#23898e"/><rect x="34.00" y="187.73" width="6.11" height="6.13" fill="#2b748e"/><rect x="39.81" y="187.73" width="6.11" height="6.13" fill="#000000"/><rect x="45.62" y="187.73" width="6.11" height="6.13" fill="#23898e"/><rect x="51.43" y="187.73" width="6.11" height="6.13" fill="#277e8e"/><rect x="57.24" y="187.73" width="6.11" height="6.13" fill="#277e8e"/><rect x="63.05" y="187.73" width="6.11" height="6.13" fill="#277e8e"/><rect x="68.86" y="187.73" width="6.11" height="6.13" fill="#20938c"/><rect x="74.67" y="187.73" width="6.11" height="6.13" fill="#23898e"/><rect x="80.48" y="187.73" width="6.11" height="6.13" fill="#277e8e"/><rect x="86.29" y="187.73" width="6.11" height="6.13" fill="#277e8e"/><rect x="92.10" y="187.73" width="6.11" height="6.13" fill="#277e8e"/><rect x="97.91" y="187.73" width="6.11" height="6.13" fill="#277e8e"/><rect x="103.72" y="187.73" width="6.11" height="6.13" fill="#277e8e"/><rect x="109.53" y="187.73" width="6.11" height="6.13" fill="#31668e"/><rect x="115.34" y="187.73" width="6.11" height="6.13" fill="#277e8e"/><rect x="121.15" y="187.73" width="6.11" height="6.13" fill="#277e8e"/><rect x="126.96" y="187.73" width="6.11" height="6.13" fill="#23898e"/><rect x="132.77" y="187.73" width="6.11" height="6.13" fill="#23898e"/><rect x="138.58" y="187.73" width="6.11" height="6.13" fill="#277e8e"/><rect x="144.39" y="187.73" width="6.11" height="6.13" fill="#20938c"/><rect x="150.20" y="187.73" width="6.11" height="6.13" fill="#23898e"/><rect x="156.01" y="187.73" width="6.11" height="6.13" fill="#277e8e"/><rect x="161.82" y="187.73" width="6.11" height="6.13" fill="#2b748e"/><rect x="167.63" y="187.73" width="6.11" height="6.13" fill="#2b748e"/><rect x="173.44" y="187.73" width="6.11" height="6.13" fill="#000000"/><rect x="179.25" y="187.73" width="6.11" height="6.13" fill="#277e8e"/><rect x="185.06" y="187.73" width="6.11" height="6.13" fill="#000000"/><rect x="4.95" y="193.56" width="6.11" height="6.13" fill="#2b748e"/><rect x="10.76" y="193.56" width="6.11" height="6.13" fill="#2b748e"/><rect x="16.57" y="193.56" width="6.11" height="6.13" fill="#277e8e"/><rect x="22.38" y="193.56" width="6.11" height="6.13" fill="#23898e"/><rect x="28.19" y="193.56" width="6.11" height="6.13" fill="#277e8e"/><rect x="34.00" y="193.56" width="6.11" height="6.13" fill="#2b748e"/><rect x="39.81" y="193.56" width="6.11" height="6.13" fill="#000000"/><rect x="45.62" y="193.56" width="6.11" height="6.13" fill="#277e8e"/><rect x="51.43" y="193.56" width="6.11" height="6.13" fill="#23898e"/><rect x="57.24" y="193.56" width="6.11" height="6.13" fill="#277e8e"/><rect x="63.05" y="193.56" width="6.11" height="6.13" fill="#2b748e"/><rect x="68.86" y="193.56" width="6.11" height="6.13" fill="#277e8e"/><rect x="74.67" y="193.56" width="6.11" height="6.13" fill="#23898e"/><rect x="80.48" y="193.56" width="6.11" height="6.13" fill="#277e8e"/><rect x="86.29" y="193.56" width="6.11" height="6.13" fill="#23898e"/><rect x="92.10" y="193.56" width="6.11" height="6.13" fill="#23898e"/><rect x="97.91" y="193.56" width="6.11" height="6.13" fill="#23898e"/><rect x="103.72" y="193.56" width="6.11" height="6.13" fill="#277e8e"/><rect x="109.53" y="193.56" width="6.11" height="6.13" fill="#277e8e"/><rect x="115.34" y="193.56" width="6.11" height="6.13" fill="#277e8e"/><rect x="121.15" y="193.56" width="6.11" height="6.13" fill="#000000"/><rect x="126.96" y="193.56" width="6.11" height="6.13" fill="#277e8e"/><rect x="132.77" y="193.56" width="6.11" height="6.13" fill="#277e8e"/><rect x="138.58" y="193.56" width="6.11" height="6.13" fill="#277e8e"/><rect x="144.39" y="193.56" width="6.11" height="6.13" fill="#2b748e"/><rect x="150.20" y="193.56" width="6.11" height="6.13" fill="#277e8e"/><rect x="156.01" y="193.56" width="6.11" height="6.13" fill="#23898e"/><rect x="161.82" y="193.56" width="6.11" height="6.13" fill="#2b748e"/><rect x="167.63" y="193.56" width="6.11" height="6.13" fill="#277e8e"/><rect x="173.44" y="193.56" width="6.11" height="6.13" fill="#277e8e"/><rect x="179.25" y="193.56" width="6.11" height="6.13" fill="#2b748e"/><rect x="185.06" y="193.56" width="6.11" height="6.13" fill="#000000"/><rect x="4.95" y="199.39" width="6.11" height="6.13" fill="#277e8e"/><rect x="10.76" y="199.39" width="6.11" height="6.13" fill="#38588c"/><rect x="16.57" y="199.39" width="6.11" height="6.13" fill="#2b748e"/><rect x="22.38" y="199.39" width="6.11" height="6.13" fill="#277e8e"/><rect x="28.19" y="199.39" width="6.11" height="6.13" fill="#277e8e"/><rect x="34.00" y="199.39" width="6.11" height="6.13" fill="#2b748e"/><rect x="39.81" y="199.39" width="6.11" height="6.13" fill="#000000"/><rect x="45.62" y="199.39" width="6.11" height="6.13" fill="#23898e"/><rect x="51.43" y="199.39" width="6.11" height="6.13" fill="#23898e"/><rect x="57.24" y="199.39" width="6.11" height="6.13" fill="#23898e"/><rect x="63.05" y="199.39" width="6.11" height="6.13" fill="#277e8e"/><rect x="68.86" y="199.39" width="6.11" height="6.13" fill="#23898e"/><rect x="74.67" y="199.39" width="6.11" height="6.13" fill="#1fa088"/><rect x="80.48" y="199.39" width="6.11" height="6.13" fill="#277e8e"/><rect x="86.29" y="199.39" width="6.11" height="6.13" fill="#23898e"/><rect x="92.10" y="199.39" width="6.11" height="6.13" fill="#23898e"/><rect x="97.91" y="199.39" width="6.11" height="6.13" fill="#23898e"/><rect x="103.72" y="199.39" width="6.11" height="6.13" fill="#23898e"/><rect x="109.53" y="199.39" width="6.11" height="6.13" fill="#23898e"/><rect x="115.34" y="199.39" width="6.11" height="6.13" fill="#277e8e"/><rect x="121.15" y="199.39" width="6.11" height="6.13" fill="#277e8e"/><rect x="126.96" y="199.39" width="6.11" height="6.13" fill="#2b748e"/><rect x="132.77" y="199.39" width="6.11" height="6.13" fill="#23898e"/><rect x="138.58" y="199.39" width="6.11" height="6.13" fill="#2b748e"/><rect x="144.39" y="199.39" width="6.11" height="6.13" fill="#277e8e"/><rect x="150.20" y="199.39" width="6.11" height="6.13" fill="#277e8e"/><rect x="156.01" y="199.39" width="6.11" height="6.13" fill="#2b748e"/><rect x="161.82" y="199.39" width="6.11" height="6.13" fill="#2b748e"/><rect x="167.63" y="199.39" width="6.11" height="6.13" fill="#277e8e"/><rect x="173.44" y="199.39" width="6.11" height="6.13" fill="#277e8e"/><rect x="179.25" y="199.39" width="6.11" height="6.13" fill="#277e8e"/><rect x="185.06" y="199.39" width="6.11" height="6.13" fill="#2b748e"/><rect x="4.95" y="205.22" width="6.11" height="6.13" fill="#2b748e"/><rect x="10.76" y="205.22" width="6.11" height="6.13" fill="#277e8e"/><rect x="16.57" y="205.22" width="6.11" height="6.13" fill="#277e8e"/><rect x="22.38" y="205.22" width="6.11" height="6.13" fill="#2b748e"/><rect x="28.19" y="205.22" width="6.11" height="6.13" fill="#277e8e"/><rect x="34.00" y="205.22" width="6.11" height="6.13" fill="#2b748e"/><rect x="39.81" y="205.22" width="6.11" height="6.13" fill="#000000"/><rect x="45.62" y="205.22" width="6.11" height="6.13" fill="#2b748e"/><rect x="51.43" y="205.22" width="6.11" height="6.13" fill="#277e8e"/><rect x="57.24" y="205.22" width="6.11" height="6.13" fill="#277e8e"/><rect x="63.05" y="205.22" width="6.11" height="6.13" fill="#23898e"/><rect x="68.86" y="205.22" width="6.11" height="6.13" fill="#20938c"/><rect x="74.67" y="205.22" width="6.11" height="6.13" fill="#23898e"/><rect x="80.48" y="205.22" width="6.11" height="6.13" fill="#277e8e"/><rect x="86.29" y="205.22" width="6.11" height="6.13" fill="#277e8e"/><rect x="92.10" y="205.22" width="6.11" height="6.13" fill="#277e8e"/><rect x="97.91" y="205.22" width="6.11" height="6.13" fill="#23898e"/><rect x="103.72" y="205.22" width="6.11" height="6.13" fill="#23898e"/><rect x="109.53" y="205.22" width="6.11" height="6.13" fill="#23898e"/><rect x="115.34" y="205.22" width="6.11" height="6.13" fill="#277e8e"/><rect x="121.15" y="205.22" width="6.11" height="6.13" fill="#31668e"/><rect x="126.96" y="205.22" width="6.11" height="6.13" fill="#2b748e"/><rect x="132.77" y="205.22" width="6.11" height="6.13" fill="#277e8e"/><rect x="138.58" y="205.22" width="6.11" height="6.13" fill="#277e8e"/><rect x="144.39" y="205.22" width="6.11" height="6.13" fill="#2b748e"/><rect x="150.20" y="205.22" width="6.11" height="6.13" fill="#277e8e"/><rect x="156.01" y="205.22" width="6.11" height="6.13" fill="#2b748e"/><rect x="161.82" y="205.22" width="6.11" height="6.13" fill="#23898e"/><rect x="167.63" y="205.22" width="6.11" height="6.13" fill="#2b748e"/><rect x="173.44" y="205.22" width="6.11" height="6.13" fill="#277e8e"/><rect x="179.25" y="205.22" width="6.11" height="6.13" fill="#2b748e"/><rect x="185.06" y="205.22" width="6.11" height="6.13" fill="#277e8e"/><rect x="4.95" y="211.05" width="6.11" height="6.13" fill="#2b748e"/><rect x="10.76" y="211.05" width="6.11" height="6.13" fill="#2b748e"/><rect x="16.57" y="211.05" width="6.11" height="6.13" fill="#31668e"/><rect x="22.38" y="211.05" width="6.11" height="6.13" fill="#31668e"/><rect x="28.19" y="211.05" width="6.11" height="6.13" fill="#277e8e"/><rect x="34.00" y="211.05" width="6.11" height="6.13" fill="#2b748e"/><rect x="39.81" y="211.05" width="6.11" height="6.13" fill="#000000"/><rect x="45.62" y="211.05" width="6.11" height="6.13" fill="#23898e"/><rect x="51.43" y="211.05" width="6.11" height="6.13" fill="#277e8e"/><rect x="57.24" y="211.05" width="6.11" height="6.13" fill="#277e8e"/><rect x="63.05" y="211.05" width="6.11" height="6.13" fill="#23898e"/><rect x="68.86" y="211.05" width="6.11" height="6.13" fill="#277e8e"/><rect x="74.67" y="211.05" width="6.11" height="6.13" fill="#23898e"/><rect x="80.48" y="211.05" width="6.11" height="6.13" fill="#277e8e"/><rect x="86.29" y="211.05" width="6.11" height="6.13" fill="#2b748e"/><rect x="92.10" y="211.05" width="6.11" height="6.13" fill="#2b748e"/><rect x="97.91" y="211.05" width="6.11" height="6.13" fill="#277e8e"/><rect x="103.72" y="211.05" width="6.11" height="6.13" fill="#23898e"/><rect x="109.53" y="211.05" width="6.11" height="6.13" fill="#277e8e"/><rect x="115.34" y="211.05" width="6.11" height="6.13" fill="#2b748e"/><rect x="121.15" y="211.05" width="6.11" height="6.13" fill="#277e8e"/><rect x="126.96" y="211.05" width="6.11" height="6.13" fill="#277e8e"/><rect x="132.77" y="211.05" width="6.11" height="6.13" fill="#2b748e"/><rect x="138.58" y="211.05" width="6.11" height="6.13" fill="#2b748e"/><rect x="144.39" y="211.05" width="6.11" height="6.13" fill="#31668e"/><rect x="150.20" y="211.05" width="6.11" height="6.13" fill="#277e8e"/><rect x="156.01" y="211.05" width="6.11" height="6.13" fill="#2b748e"/><rect x="161.82" y="211.05" width="6.11" height="6.13" fill="#2b748e"/><rect x="167.63" y="211.05" width="6.11" height="6.13" fill="#31668e"/><rect x="173.44" y="211.05" width="6.11" height="6.13" fill="#277e8e"/><rect x="179.25" y="211.05" width="6.11" height="6.13" fill="#3e4c8a"/><rect x="185.06" y="211.05" width="6.11" height="6.13" fill="#277e8e"/><rect x="4.95" y="216.88" width="6.11" height="6.13" fill="#31668e"/><rect x="10.76" y="216.88" width="6.11" height="6.13" fill="#2b748e"/><rect x="16.57" y="216.88" width="6.11" height="6.13" fill="#2b748e"/><rect x="22.38" y="216.88" width="6.11" height="6.13" fill="#277e8e"/><rect x="28.19" y="216.88" width="6.11" height="6.13" fill="#277e8e"/><rect x="34.00" y="216.88" width="6.11" height="6.13" fill="#2b748e"/><rect x="39.81" y="216.88" width="6.11" height="6.13" fill="#000000"/><rect x="45.62" y="216.88" width="6.11" height="6.13" fill="#2b748e"/><rect x="51.43" y="216.88" width="6.11" height="6.13" fill="#2b748e"/><rect x="57.24" y="216.88" width="6.11" height="6.13" fill="#2b748e"/><rect x="63.05" y="216.88" width="6.11" height="6.13" fill="#277e8e"/><rect x="68.86" y="216.88" width="6.11" height="6.13" fill="#277e8e"/><rect x="74.67" y="216.88" width="6.11" height="6.13" fill="#23898e"/><rect x="80.48" y="216.88" width="6.11" height="6.13" fill="#2b748e"/><rect x="86.29" y="216.88" width="6.11" height="6.13" fill="#2b748e"/><rect x="92.10" y="216.88" width="6.11" height="6.13" fill="#277e8e"/><rect x="97.91" y="216.88" width="6.11" height="6.13" fill="#23898e"/><rect x="103.72" y="216.88" width="6.11" height="6.13" fill="#2b748e"/><rect x="109.53" y="216.88" width="6.11" height="6.13" fill="#23898e"/><rect x="115.34" y="216.88" width="6.11" height="6.13" fill="#2b748e"/><rect x="121.15" y="216.88" width="6.11" height="6.13" fill="#20938c"/><rect x="126.96" y="216.88" width="6.11" height="6.13" fill="#2b748e"/><rect x="132.77" y="216.88" width="6.11" height="6.13" fill="#000000"/><rect x="138.58" y="216.88" width="6.11" height="6.13" fill="#23898e"/><rect x="144.39" y="216.88" width="6.11" height="6.13" fill="#277e8e"/><rect x="150.20" y="216.88" width="6.11" height="6.13" fill="#2b748e"/><rect x="156.01" y="216.88" width="6.11" height="6.13" fill="#2b748e"/><rect x="161.82" y="216.88" width="6.11" height="6.13" fill="#2b748e"/><rect x="167.63" y="216.88" width="6.11" height="6.13" fill="#277e8e"/><rect x="173.44" y="216.88" width="6.11" height="6.13" fill="#2b748e"/><rect x="179.25" y="216.88" width="6.11" height="6.13" fill="#277e8e"/><rect x="185.06" y="216.88" width="6.11" height="6.13" fill="#000000"/><rect x="4.95" y="222.71" width="6.11" height="6.13" fill="#31668e"/><rect x="10.76" y="222.71" width="6.11" height="6.13" fill="#2b748e"/><rect x="16.57" y="222.71" width="6.11" height="6.13" fill="#2b748e"/><rect x="22.38" y="222.71" width="6.11" height="6.13" fill="#31668e"/><rect x="28.19" y="222.71" width="6.11" height="6.13" fill="#277e8e"/><rect x="34.00" y="222.71" width="6.11" height="6.13" fill="#31668e"/><rect x="39.81" y="222.71" width="6.11" height="6.13" fill="#000000"/><rect x="45.62" y="222.71" width="6.11" height="6.13" fill="#2b748e"/><rect x="51.43" y="222.71" width="6.11" height="6.13" fill="#3e4c8a"/><rect x="57.24" y="222.71" width="6.11" height="6.13" fill="#2b748e"/><rect x="63.05" y="222.71" width="6.11" height="6.13" fill="#277e8e"/><rect x="68.86" y="222.71" width="6.11" height="6.13" fill="#1fa088"/><rect x="74.67" y="222.71" width="6.11" height="6.13" fill="#2b748e"/><rect x="80.48" y="222.71" width="6.11" height="6.13" fill="#31668e"/><rect x="86.29" y="222.71" width="6.11" height="6.13" fill="#277e8e"/><rect x="92.10" y="222.71" width="6.11" height="6.13" fill="#277e8e"/><rect x="97.91" y="222.71" width="6.11" height="6.13" fill="#277e8e"/><rect x="103.72" y="222.71" width="6.11" height="6.13" fill="#23898e"/><rect x="109.53" y="222.71" width="6.11" height="6.13" fill="#277e8e"/><rect x="115.34" y="222.71" width="6.11" height="6.13" fill="#23898e"/><rect x="121.15" y="222.71" width="6.11" height="6.13" fill="#277e8e"/><rect x="126.96" y="222.71" width="6.11" height="6.13" fill="#2b748e"/><rect x="132.77" y="222.71" width="6.11" height="6.13" fill="#277e8e"/><rect x="138.58" y="222.71" width="6.11" height="6.13" fill="#277e8e"/><rect x="144.39" y="222.71" width="6.11" height="6.13" fill="#2b748e"/><rect x="150.20" y="222.71" width="6.11" height="6.13" fill="#2b748e"/><rect x="156.01" y="222.71" width="6.11" height="6.13" fill="#2b748e"/><rect x="161.82" y="222.71" width="6.11" height="6.13" fill="#277e8e"/><rect x="167.63" y="222.71" width="6.11" height="6.13" fill="#2b748e"/><rect x="173.44" y="222.71" width="6.11" height="6.13" fill="#277e8e"/><rect x="179.25" y="222.71" width="6.11" height="6.13" fill="#2b748e"/><rect x="185.06" y="222.71" width="6.11" height="6.13" fill="#000000"/><rect x="4.95" y="228.54" width="6.11" height="6.13" fill="#31668e"/><rect x="10.76" y="228.54" width="6.11" height="6.13" fill="#2b748e"/><rect x="16.57" y="228.54" width="6.11" height="6.13" fill="#277e8e"/><rect x="22.38" y="228.54" width="6.11" height="6.13" fill="#2b748e"/><rect x="28.19" y="228.54" width="6.11" height="6.13" fill="#31668e"/><rect x="34.00" y="228.54" width="6.11" height="6.13" fill="#2b748e"/><rect x="39.81" y="228.54" width="6.11" height="6.13" fill="#000000"/><rect x="45.62" y="228.54" width="6.11" height="6.13" fill="#2b748e"/><rect x="51.43" y="228.54" width="6.11" height="6.13" fill="#277e8e"/><rect x="57.24" y="228.54" width="6.11" height="6.13" fill="#277e8e"/><rect x="63.05" y="228.54" width="6.11" height="6.13" fill="#2b748e"/><rect x="68.86" y="228.54" width="6.11" height="6.13" fill="#277e8e"/><rect x="74.67" y="228.54" width="6.11" height="6.13" fill="#2b748e"/><rect x="80.48" y="228.54" width="6.11" height="6.13" fill="#277e8e"/><rect x="86.29" y="228.54" width="6.11" height="6.13" fill="#277e8e"/><rect x="92.10" y="228.54" width="6.11" height="6.13" fill="#277e8e"/><rect x="97.91" y="228.54" width="6.11" height="6.13" fill="#277e8e"/><rect x="103.72" y="228.54" width="6.11" height="6.13" fill="#31668e"/><rect x="109.53" y="228.54" width="6.11" height="6.13" fill="#277e8e"/><rect x="115.34" y="228.54" width="6.11" height="6.13" fill="#20938c"/><rect x="121.15" y="228.54" width="6.11" height="6.13" fill="#23898e"/><rect x="126.96" y="228.54" width="6.11" height="6.13" fill="#277e8e"/><rect x="132.77" y="228.54" width="6.11" height="6.13" fill="#2b748e"/><rect x="138.58" y="228.54" width="6.11" height="6.13" fill="#23898e"/><rect x="144.39" y="228.54" width="6.11" height="6.13" fill="#277e8e"/><rect x="150.20" y="228.54" width="6.11" height="6.13" fill="#277e8e"/><rect x="156.01" y="228.54" width="6.11" height="6.13" fill="#277e8e"/><rect x="161.82" y="228.54" width="6.11" height="6.13" fill="#31668e"/><rect x="167.63" y="228.54" width="6.11" height="6.13" fill="#2b748e"/><rect x="173.44" y="228.54" width="6.11" height="6.13" fill="#31668e"/><rect x="179.25" y="228.54" width="6.11" height="6.13" fill="#2b748e"/><rect x="185.06" y="228.54" width="6.11" height="6.13" fill="#2b748e"/><rect x="4.95" y="234.37" width="6.11" height="6.13" fill="#2b748e"/><rect x="10.76" y="234.37" width="6.11" height="6.13" fill="#23898e"/><rect x="16.57" y="234.37" width="6.11" height="6.13" fill="#31668e"/><rect x="22.38" y="234.37" width="6.11" height="6.13" fill="#000000"/><rect x="28.19" y="234.37" width="6.11" height="6.13" fill="#482475"/><rect x="34.00" y="234.37" width="6.11" height="6.13" fill="#000000"/><rect x="39.81" y="234.37" width="6.11" height="6.13" fill="#000000"/><rect x="45.62" y="234.37" width="6.11" height="6.13" fill="#000000"/><rect x="51.43" y="234.37" width="6.11" height="6.13" fill="#000000"/><rect x="57.24" y="234.37" width="6.11" height="6.13" fill="#000000"/><rect x="63.05" y="234.37" width="6.11" height="6.13" fill="#31668e"/><rect x="68.86" y="234.37" width="6.11" height="6.13" fill="#000000"/><rect x="74.67" y="234.37" width="6.11" height="6.13" fill="#000000"/><rect x="80.48" y="234.37" width="6.11" height="6.13" fill="#000000"/><rect x="86.29" y="234.37" width="6.11" height="6.13" fill="#000000"/><rect x="92.10" y="234.37" width="6.11" height="6.13" fill="#000000"/><rect x="97.91" y="234.37" width="6.11" height="6.13" fill="#2b748e"/><rect x="103.72" y="234.37" width="6.11" height="6.13" fill="#000000"/><rect x="109.53" y="234.37" width="6.11" height="6.13" fill="#277e8e"/><rect x="115.34" y="234.37" width="6.11" height="6.13" fill="#2b748e"/><rect x="121.15" y="234.37" width="6.11" height="6.13" fill="#482475"/><rect x="126.96" y="234.37" width="6.11" height="6.13" fill="#2b748e"/><rect x="132.77" y="234.37" width="6.11" height="6.13" fill="#23898e"/><rect x="138.58" y="234.37" width="6.11" height="6.13" fill="#3e4c8a"/><rect x="144.39" y="234.37" width="6.11" height="6.13" fill="#000000"/><rect x="150.20" y="234.37" width="6.11" height="6.13" fill="#2b748e"/><rect x="156.01" y="234.37" width="6.11" height="6.13" fill="#2b748e"/><rect x="161.82" y="234.37" width="6.11" height="6.13" fill="#2b748e"/><rect x="167.63" y="234.37" width="6.11" height="6.13" fill="#31668e"/><rect x="173.44" y="234.37" width="6.11" height="6.13" fill="#482475"/><rect x="179.25" y="234.37" width="6.11" height="6.13" fill="#31668e"/><rect x="185.06" y="234.37" width="6.11" height="6.13" fill="#2b748e"/></svg><svg class="a" style="left:0px;top:459px" width="214" height="238" shape-rendering="crispEdges"><rect width="214" height="238" fill="#000"/><rect x="4.95" y="6.10" width="6.11" height="6.13" fill="#000000"/><rect x="10.76" y="6.10" width="6.11" height="6.13" fill="#000000"/><rect x="16.57" y="6.10" width="6.11" height="6.13" fill="#000000"/><rect x="22.38" y="6.10" width="6.11" height="6.13" fill="#000000"/><rect x="28.19" y="6.10" width="6.11" height="6.13" fill="#000000"/><rect x="34.00" y="6.10" width="6.11" height="6.13" fill="#000000"/><rect x="39.81" y="6.10" width="6.11" height="6.13" fill="#000000"/><rect x="45.62" y="6.10" width="6.11" height="6.13" fill="#2b748e"/><rect x="51.43" y="6.10" width="6.11" height="6.13" fill="#23898e"/><rect x="57.24" y="6.10" width="6.11" height="6.13" fill="#23898e"/><rect x="63.05" y="6.10" width="6.11" height="6.13" fill="#2b748e"/><rect x="68.86" y="6.10" width="6.11" height="6.13" fill="#277e8e"/><rect x="74.67" y="6.10" width="6.11" height="6.13" fill="#1fa088"/><rect x="80.48" y="6.10" width="6.11" height="6.13" fill="#1fa088"/><rect x="86.29" y="6.10" width="6.11" height="6.13" fill="#000000"/><rect x="92.10" y="6.10" width="6.11" height="6.13" fill="#000000"/><rect x="97.91" y="6.10" width="6.11" height="6.13" fill="#000000"/><rect x="103.72" y="6.10" width="6.11" height="6.13" fill="#000000"/><rect x="109.53" y="6.10" width="6.11" height="6.13" fill="#000000"/><rect x="115.34" y="6.10" width="6.11" height="6.13" fill="#23898e"/><rect x="121.15" y="6.10" width="6.11" height="6.13" fill="#000000"/><rect x="126.96" y="6.10" width="6.11" height="6.13" fill="#000000"/><rect x="132.77" y="6.10" width="6.11" height="6.13" fill="#000000"/><rect x="138.58" y="6.10" width="6.11" height="6.13" fill="#000000"/><rect x="144.39" y="6.10" width="6.11" height="6.13" fill="#000000"/><rect x="150.20" y="6.10" width="6.11" height="6.13" fill="#23898e"/><rect x="156.01" y="6.10" width="6.11" height="6.13" fill="#000000"/><rect x="161.82" y="6.10" width="6.11" height="6.13" fill="#000000"/><rect x="167.63" y="6.10" width="6.11" height="6.13" fill="#000000"/><rect x="173.44" y="6.10" width="6.11" height="6.13" fill="#000000"/><rect x="179.25" y="6.10" width="6.11" height="6.13" fill="#000000"/><rect x="185.06" y="6.10" width="6.11" height="6.13" fill="#000000"/><rect x="4.95" y="11.93" width="6.11" height="6.13" fill="#000000"/><rect x="10.76" y="11.93" width="6.11" height="6.13" fill="#000000"/><rect x="16.57" y="11.93" width="6.11" height="6.13" fill="#5ec962"/><rect x="22.38" y="11.93" width="6.11" height="6.13" fill="#277e8e"/><rect x="28.19" y="11.93" width="6.11" height="6.13" fill="#23898e"/><rect x="34.00" y="11.93" width="6.11" height="6.13" fill="#277e8e"/><rect x="39.81" y="11.93" width="6.11" height="6.13" fill="#000000"/><rect x="45.62" y="11.93" width="6.11" height="6.13" fill="#1fa088"/><rect x="51.43" y="11.93" width="6.11" height="6.13" fill="#2b748e"/><rect x="57.24" y="11.93" width="6.11" height="6.13" fill="#277e8e"/><rect x="63.05" y="11.93" width="6.11" height="6.13" fill="#23898e"/><rect x="68.86" y="11.93" width="6.11" height="6.13" fill="#277e8e"/><rect x="74.67" y="11.93" width="6.11" height="6.13" fill="#2b748e"/><rect x="80.48" y="11.93" width="6.11" height="6.13" fill="#277e8e"/><rect x="86.29" y="11.93" width="6.11" height="6.13" fill="#2b748e"/><rect x="92.10" y="11.93" width="6.11" height="6.13" fill="#2b748e"/><rect x="97.91" y="11.93" width="6.11" height="6.13" fill="#2b748e"/><rect x="103.72" y="11.93" width="6.11" height="6.13" fill="#277e8e"/><rect x="109.53" y="11.93" width="6.11" height="6.13" fill="#277e8e"/><rect x="115.34" y="11.93" width="6.11" height="6.13" fill="#277e8e"/><rect x="121.15" y="11.93" width="6.11" height="6.13" fill="#000000"/><rect x="126.96" y="11.93" width="6.11" height="6.13" fill="#23898e"/><rect x="132.77" y="11.93" width="6.11" height="6.13" fill="#23898e"/><rect x="138.58" y="11.93" width="6.11" height="6.13" fill="#23898e"/><rect x="144.39" y="11.93" width="6.11" height="6.13" fill="#000000"/><rect x="150.20" y="11.93" width="6.11" height="6.13" fill="#2b748e"/><rect x="156.01" y="11.93" width="6.11" height="6.13" fill="#31668e"/><rect x="161.82" y="11.93" width="6.11" height="6.13" fill="#000000"/><rect x="167.63" y="11.93" width="6.11" height="6.13" fill="#23898e"/><rect x="173.44" y="11.93" width="6.11" height="6.13" fill="#2b748e"/><rect x="179.25" y="11.93" width="6.11" height="6.13" fill="#1fa088"/><rect x="185.06" y="11.93" width="6.11" height="6.13" fill="#2b748e"/><rect x="4.95" y="17.76" width="6.11" height="6.13" fill="#23898e"/><rect x="10.76" y="17.76" width="6.11" height="6.13" fill="#2b748e"/><rect x="16.57" y="17.76" width="6.11" height="6.13" fill="#2b748e"/><rect x="22.38" y="17.76" width="6.11" height="6.13" fill="#23898e"/><rect x="28.19" y="17.76" width="6.11" height="6.13" fill="#2b748e"/><rect x="34.00" y="17.76" width="6.11" height="6.13" fill="#2b748e"/><rect x="39.81" y="17.76" width="6.11" height="6.13" fill="#000000"/><rect x="45.62" y="17.76" width="6.11" height="6.13" fill="#23898e"/><rect x="51.43" y="17.76" width="6.11" height="6.13" fill="#277e8e"/><rect x="57.24" y="17.76" width="6.11" height="6.13" fill="#2b748e"/><rect x="63.05" y="17.76" width="6.11" height="6.13" fill="#000000"/><rect x="68.86" y="17.76" width="6.11" height="6.13" fill="#23898e"/><rect x="74.67" y="17.76" width="6.11" height="6.13" fill="#277e8e"/><rect x="80.48" y="17.76" width="6.11" height="6.13" fill="#277e8e"/><rect x="86.29" y="17.76" width="6.11" height="6.13" fill="#23898e"/><rect x="92.10" y="17.76" width="6.11" height="6.13" fill="#2b748e"/><rect x="97.91" y="17.76" width="6.11" height="6.13" fill="#277e8e"/><rect x="103.72" y="17.76" width="6.11" height="6.13" fill="#277e8e"/><rect x="109.53" y="17.76" width="6.11" height="6.13" fill="#2b748e"/><rect x="115.34" y="17.76" width="6.11" height="6.13" fill="#2b748e"/><rect x="121.15" y="17.76" width="6.11" height="6.13" fill="#277e8e"/><rect x="126.96" y="17.76" width="6.11" height="6.13" fill="#23898e"/><rect x="132.77" y="17.76" width="6.11" height="6.13" fill="#277e8e"/><rect x="138.58" y="17.76" width="6.11" height="6.13" fill="#2b748e"/><rect x="144.39" y="17.76" width="6.11" height="6.13" fill="#000000"/><rect x="150.20" y="17.76" width="6.11" height="6.13" fill="#23898e"/><rect x="156.01" y="17.76" width="6.11" height="6.13" fill="#277e8e"/><rect x="161.82" y="17.76" width="6.11" height="6.13" fill="#000000"/><rect x="167.63" y="17.76" width="6.11" height="6.13" fill="#277e8e"/><rect x="173.44" y="17.76" width="6.11" height="6.13" fill="#277e8e"/><rect x="179.25" y="17.76" width="6.11" height="6.13" fill="#2b748e"/><rect x="185.06" y="17.76" width="6.11" height="6.13" fill="#277e8e"/><rect x="4.95" y="23.59" width="6.11" height="6.13" fill="#23898e"/><rect x="10.76" y="23.59" width="6.11" height="6.13" fill="#277e8e"/><rect x="16.57" y="23.59" width="6.11" height="6.13" fill="#277e8e"/><rect x="22.38" y="23.59" width="6.11" height="6.13" fill="#1fa088"/><rect x="28.19" y="23.59" width="6.11" height="6.13" fill="#000000"/><rect x="34.00" y="23.59" width="6.11" height="6.13" fill="#277e8e"/><rect x="39.81" y="23.59" width="6.11" height="6.13" fill="#000000"/><rect x="45.62" y="23.59" width="6.11" height="6.13" fill="#2b748e"/><rect x="51.43" y="23.59" width="6.11" height="6.13" fill="#277e8e"/><rect x="57.24" y="23.59" width="6.11" height="6.13" fill="#277e8e"/><rect x="63.05" y="23.59" width="6.11" height="6.13" fill="#2b748e"/><rect x="68.86" y="23.59" width="6.11" height="6.13" fill="#31668e"/><rect x="74.67" y="23.59" width="6.11" height="6.13" fill="#277e8e"/><rect x="80.48" y="23.59" width="6.11" height="6.13" fill="#277e8e"/><rect x="86.29" y="23.59" width="6.11" height="6.13" fill="#277e8e"/><rect x="92.10" y="23.59" width="6.11" height="6.13" fill="#31668e"/><rect x="97.91" y="23.59" width="6.11" height="6.13" fill="#000000"/><rect x="103.72" y="23.59" width="6.11" height="6.13" fill="#277e8e"/><rect x="109.53" y="23.59" width="6.11" height="6.13" fill="#277e8e"/><rect x="115.34" y="23.59" width="6.11" height="6.13" fill="#277e8e"/><rect x="121.15" y="23.59" width="6.11" height="6.13" fill="#000000"/><rect x="126.96" y="23.59" width="6.11" height="6.13" fill="#23898e"/><rect x="132.77" y="23.59" width="6.11" height="6.13" fill="#000000"/><rect x="138.58" y="23.59" width="6.11" height="6.13" fill="#1fa088"/><rect x="144.39" y="23.59" width="6.11" height="6.13" fill="#000000"/><rect x="150.20" y="23.59" width="6.11" height="6.13" fill="#23898e"/><rect x="156.01" y="23.59" width="6.11" height="6.13" fill="#277e8e"/><rect x="161.82" y="23.59" width="6.11" height="6.13" fill="#23898e"/><rect x="167.63" y="23.59" width="6.11" height="6.13" fill="#277e8e"/><rect x="173.44" y="23.59" width="6.11" height="6.13" fill="#277e8e"/><rect x="179.25" y="23.59" width="6.11" height="6.13" fill="#31668e"/><rect x="185.06" y="23.59" width="6.11" height="6.13" fill="#277e8e"/><rect x="4.95" y="29.42" width="6.11" height="6.13" fill="#277e8e"/><rect x="10.76" y="29.42" width="6.11" height="6.13" fill="#2b748e"/><rect x="16.57" y="29.42" width="6.11" height="6.13" fill="#23898e"/><rect x="22.38" y="29.42" width="6.11" height="6.13" fill="#3e4c8a"/><rect x="28.19" y="29.42" width="6.11" height="6.13" fill="#3e4c8a"/><rect x="34.00" y="29.42" width="6.11" height="6.13" fill="#23898e"/><rect x="39.81" y="29.42" width="6.11" height="6.13" fill="#000000"/><rect x="45.62" y="29.42" width="6.11" height="6.13" fill="#2b748e"/><rect x="51.43" y="29.42" width="6.11" height="6.13" fill="#23898e"/><rect x="57.24" y="29.42" width="6.11" height="6.13" fill="#277e8e"/><rect x="63.05" y="29.42" width="6.11" height="6.13" fill="#277e8e"/><rect x="68.86" y="29.42" width="6.11" height="6.13" fill="#2b748e"/><rect x="74.67" y="29.42" width="6.11" height="6.13" fill="#2b748e"/><rect x="80.48" y="29.42" width="6.11" height="6.13" fill="#277e8e"/><rect x="86.29" y="29.42" width="6.11" height="6.13" fill="#2b748e"/><rect x="92.10" y="29.42" width="6.11" height="6.13" fill="#23898e"/><rect x="97.91" y="29.42" width="6.11" height="6.13" fill="#23898e"/><rect x="103.72" y="29.42" width="6.11" height="6.13" fill="#2b748e"/><rect x="109.53" y="29.42" width="6.11" height="6.13" fill="#2b748e"/><rect x="115.34" y="29.42" width="6.11" height="6.13" fill="#277e8e"/><rect x="121.15" y="29.42" width="6.11" height="6.13" fill="#277e8e"/><rect x="126.96" y="29.42" width="6.11" height="6.13" fill="#277e8e"/><rect x="132.77" y="29.42" width="6.11" height="6.13" fill="#23898e"/><rect x="138.58" y="29.42" width="6.11" height="6.13" fill="#277e8e"/><rect x="144.39" y="29.42" width="6.11" height="6.13" fill="#1fa088"/><rect x="150.20" y="29.42" width="6.11" height="6.13" fill="#277e8e"/><rect x="156.01" y="29.42" width="6.11" height="6.13" fill="#23898e"/><rect x="161.82" y="29.42" width="6.11" height="6.13" fill="#2b748e"/><rect x="167.63" y="29.42" width="6.11" height="6.13" fill="#000000"/><rect x="173.44" y="29.42" width="6.11" height="6.13" fill="#2b748e"/><rect x="179.25" y="29.42" width="6.11" height="6.13" fill="#23898e"/><rect x="185.06" y="29.42" width="6.11" height="6.13" fill="#2b748e"/><rect x="4.95" y="35.25" width="6.11" height="6.13" fill="#31668e"/><rect x="10.76" y="35.25" width="6.11" height="6.13" fill="#23898e"/><rect x="16.57" y="35.25" width="6.11" height="6.13" fill="#31668e"/><rect x="22.38" y="35.25" width="6.11" height="6.13" fill="#23898e"/><rect x="28.19" y="35.25" width="6.11" height="6.13" fill="#23898e"/><rect x="34.00" y="35.25" width="6.11" height="6.13" fill="#2fb47c"/><rect x="39.81" y="35.25" width="6.11" height="6.13" fill="#000000"/><rect x="45.62" y="35.25" width="6.11" height="6.13" fill="#277e8e"/><rect x="51.43" y="35.25" width="6.11" height="6.13" fill="#000000"/><rect x="57.24" y="35.25" width="6.11" height="6.13" fill="#277e8e"/><rect x="63.05" y="35.25" width="6.11" height="6.13" fill="#277e8e"/><rect x="68.86" y="35.25" width="6.11" height="6.13" fill="#23898e"/><rect x="74.67" y="35.25" width="6.11" height="6.13" fill="#000000"/><rect x="80.48" y="35.25" width="6.11" height="6.13" fill="#277e8e"/><rect x="86.29" y="35.25" width="6.11" height="6.13" fill="#2b748e"/><rect x="92.10" y="35.25" width="6.11" height="6.13" fill="#277e8e"/><rect x="97.91" y="35.25" width="6.11" height="6.13" fill="#277e8e"/><rect x="103.72" y="35.25" width="6.11" height="6.13" fill="#2b748e"/><rect x="109.53" y="35.25" width="6.11" height="6.13" fill="#2b748e"/><rect x="115.34" y="35.25" width="6.11" height="6.13" fill="#277e8e"/><rect x="121.15" y="35.25" width="6.11" height="6.13" fill="#000000"/><rect x="126.96" y="35.25" width="6.11" height="6.13" fill="#277e8e"/><rect x="132.77" y="35.25" width="6.11" height="6.13" fill="#277e8e"/><rect x="138.58" y="35.25" width="6.11" height="6.13" fill="#31668e"/><rect x="144.39" y="35.25" width="6.11" height="6.13" fill="#000000"/><rect x="150.20" y="35.25" width="6.11" height="6.13" fill="#1fa088"/><rect x="156.01" y="35.25" width="6.11" height="6.13" fill="#000000"/><rect x="161.82" y="35.25" width="6.11" height="6.13" fill="#000000"/><rect x="167.63" y="35.25" width="6.11" height="6.13" fill="#000000"/><rect x="173.44" y="35.25" width="6.11" height="6.13" fill="#23898e"/><rect x="179.25" y="35.25" width="6.11" height="6.13" fill="#23898e"/><rect x="185.06" y="35.25" width="6.11" height="6.13" fill="#31668e"/><rect x="4.95" y="41.08" width="6.11" height="6.13" fill="#2b748e"/><rect x="10.76" y="41.08" width="6.11" height="6.13" fill="#23898e"/><rect x="16.57" y="41.08" width="6.11" height="6.13" fill="#277e8e"/><rect x="22.38" y="41.08" width="6.11" height="6.13" fill="#23898e"/><rect x="28.19" y="41.08" width="6.11" height="6.13" fill="#2b748e"/><rect x="34.00" y="41.08" width="6.11" height="6.13" fill="#31668e"/><rect x="39.81" y="41.08" width="6.11" height="6.13" fill="#000000"/><rect x="45.62" y="41.08" width="6.11" height="6.13" fill="#1fa088"/><rect x="51.43" y="41.08" width="6.11" height="6.13" fill="#277e8e"/><rect x="57.24" y="41.08" width="6.11" height="6.13" fill="#23898e"/><rect x="63.05" y="41.08" width="6.11" height="6.13" fill="#1fa088"/><rect x="68.86" y="41.08" width="6.11" height="6.13" fill="#2b748e"/><rect x="74.67" y="41.08" width="6.11" height="6.13" fill="#1fa088"/><rect x="80.48" y="41.08" width="6.11" height="6.13" fill="#277e8e"/><rect x="86.29" y="41.08" width="6.11" height="6.13" fill="#2b748e"/><rect x="92.10" y="41.08" width="6.11" height="6.13" fill="#23898e"/><rect x="97.91" y="41.08" width="6.11" height="6.13" fill="#277e8e"/><rect x="103.72" y="41.08" width="6.11" height="6.13" fill="#000000"/><rect x="109.53" y="41.08" width="6.11" height="6.13" fill="#000000"/><rect x="115.34" y="41.08" width="6.11" height="6.13" fill="#23898e"/><rect x="121.15" y="41.08" width="6.11" height="6.13" fill="#000000"/><rect x="126.96" y="41.08" width="6.11" height="6.13" fill="#277e8e"/><rect x="132.77" y="41.08" width="6.11" height="6.13" fill="#31668e"/><rect x="138.58" y="41.08" width="6.11" height="6.13" fill="#23898e"/><rect x="144.39" y="41.08" width="6.11" height="6.13" fill="#23898e"/><rect x="150.20" y="41.08" width="6.11" height="6.13" fill="#23898e"/><rect x="156.01" y="41.08" width="6.11" height="6.13" fill="#1fa088"/><rect x="161.82" y="41.08" width="6.11" height="6.13" fill="#277e8e"/><rect x="167.63" y="41.08" width="6.11" height="6.13" fill="#000000"/><rect x="173.44" y="41.08" width="6.11" height="6.13" fill="#23898e"/><rect x="179.25" y="41.08" width="6.11" height="6.13" fill="#000000"/><rect x="185.06" y="41.08" width="6.11" height="6.13" fill="#23898e"/><rect x="4.95" y="46.91" width="6.11" height="6.13" fill="#23898e"/><rect x="10.76" y="46.91" width="6.11" height="6.13" fill="#23898e"/><rect x="16.57" y="46.91" width="6.11" height="6.13" fill="#000000"/><rect x="22.38" y="46.91" width="6.11" height="6.13" fill="#23898e"/><rect x="28.19" y="46.91" width="6.11" height="6.13" fill="#23898e"/><rect x="34.00" y="46.91" width="6.11" height="6.13" fill="#23898e"/><rect x="39.81" y="46.91" width="6.11" height="6.13" fill="#000000"/><rect x="45.62" y="46.91" width="6.11" height="6.13" fill="#44bf70"/><rect x="51.43" y="46.91" width="6.11" height="6.13" fill="#23898e"/><rect x="57.24" y="46.91" width="6.11" height="6.13" fill="#277e8e"/><rect x="63.05" y="46.91" width="6.11" height="6.13" fill="#1fa088"/><rect x="68.86" y="46.91" width="6.11" height="6.13" fill="#1fa088"/><rect x="74.67" y="46.91" width="6.11" height="6.13" fill="#23898e"/><rect x="80.48" y="46.91" width="6.11" height="6.13" fill="#23898e"/><rect x="86.29" y="46.91" width="6.11" height="6.13" fill="#23898e"/><rect x="92.10" y="46.91" width="6.11" height="6.13" fill="#2b748e"/><rect x="97.91" y="46.91" width="6.11" height="6.13" fill="#277e8e"/><rect x="103.72" y="46.91" width="6.11" height="6.13" fill="#23898e"/><rect x="109.53" y="46.91" width="6.11" height="6.13" fill="#23898e"/><rect x="115.34" y="46.91" width="6.11" height="6.13" fill="#2b748e"/><rect x="121.15" y="46.91" width="6.11" height="6.13" fill="#277e8e"/><rect x="126.96" y="46.91" width="6.11" height="6.13" fill="#23898e"/><rect x="132.77" y="46.91" width="6.11" height="6.13" fill="#31668e"/><rect x="138.58" y="46.91" width="6.11" height="6.13" fill="#277e8e"/><rect x="144.39" y="46.91" width="6.11" height="6.13" fill="#000000"/><rect x="150.20" y="46.91" width="6.11" height="6.13" fill="#277e8e"/><rect x="156.01" y="46.91" width="6.11" height="6.13" fill="#1fa088"/><rect x="161.82" y="46.91" width="6.11" height="6.13" fill="#23898e"/><rect x="167.63" y="46.91" width="6.11" height="6.13" fill="#277e8e"/><rect x="173.44" y="46.91" width="6.11" height="6.13" fill="#277e8e"/><rect x="179.25" y="46.91" width="6.11" height="6.13" fill="#2b748e"/><rect x="185.06" y="46.91" width="6.11" height="6.13" fill="#000000"/><rect x="4.95" y="52.74" width="6.11" height="6.13" fill="#1fa088"/><rect x="10.76" y="52.74" width="6.11" height="6.13" fill="#23898e"/><rect x="16.57" y="52.74" width="6.11" height="6.13" fill="#1fa088"/><rect x="22.38" y="52.74" width="6.11" height="6.13" fill="#23898e"/><rect x="28.19" y="52.74" width="6.11" height="6.13" fill="#277e8e"/><rect x="34.00" y="52.74" width="6.11" height="6.13" fill="#1fa088"/><rect x="39.81" y="52.74" width="6.11" height="6.13" fill="#000000"/><rect x="45.62" y="52.74" width="6.11" height="6.13" fill="#23898e"/><rect x="51.43" y="52.74" width="6.11" height="6.13" fill="#23898e"/><rect x="57.24" y="52.74" width="6.11" height="6.13" fill="#1fa088"/><rect x="63.05" y="52.74" width="6.11" height="6.13" fill="#23898e"/><rect x="68.86" y="52.74" width="6.11" height="6.13" fill="#1fa088"/><rect x="74.67" y="52.74" width="6.11" height="6.13" fill="#44bf70"/><rect x="80.48" y="52.74" width="6.11" height="6.13" fill="#22a884"/><rect x="86.29" y="52.74" width="6.11" height="6.13" fill="#277e8e"/><rect x="92.10" y="52.74" width="6.11" height="6.13" fill="#277e8e"/><rect x="97.91" y="52.74" width="6.11" height="6.13" fill="#1fa088"/><rect x="103.72" y="52.74" width="6.11" height="6.13" fill="#277e8e"/><rect x="109.53" y="52.74" width="6.11" height="6.13" fill="#1fa088"/><rect x="115.34" y="52.74" width="6.11" height="6.13" fill="#23898e"/><rect x="121.15" y="52.74" width="6.11" height="6.13" fill="#23898e"/><rect x="126.96" y="52.74" width="6.11" height="6.13" fill="#000000"/><rect x="132.77" y="52.74" width="6.11" height="6.13" fill="#277e8e"/><rect x="138.58" y="52.74" width="6.11" height="6.13" fill="#277e8e"/><rect x="144.39" y="52.74" width="6.11" height="6.13" fill="#000000"/><rect x="150.20" y="52.74" width="6.11" height="6.13" fill="#23898e"/><rect x="156.01" y="52.74" width="6.11" height="6.13" fill="#000000"/><rect x="161.82" y="52.74" width="6.11" height="6.13" fill="#23898e"/><rect x="167.63" y="52.74" width="6.11" height="6.13" fill="#23898e"/><rect x="173.44" y="52.74" width="6.11" height="6.13" fill="#23898e"/><rect x="179.25" y="52.74" width="6.11" height="6.13" fill="#277e8e"/><rect x="185.06" y="52.74" width="6.11" height="6.13" fill="#000000"/><rect x="4.95" y="58.57" width="6.11" height="6.13" fill="#7ad151"/><rect x="10.76" y="58.57" width="6.11" height="6.13" fill="#23898e"/><rect x="16.57" y="58.57" width="6.11" height="6.13" fill="#2fb47c"/><rect x="22.38" y="58.57" width="6.11" height="6.13" fill="#23898e"/><rect x="28.19" y="58.57" width="6.11" height="6.13" fill="#23898e"/><rect x="34.00" y="58.57" width="6.11" height="6.13" fill="#277e8e"/><rect x="39.81" y="58.57" width="6.11" height="6.13" fill="#000000"/><rect x="45.62" y="58.57" width="6.11" height="6.13" fill="#23898e"/><rect x="51.43" y="58.57" width="6.11" height="6.13" fill="#23898e"/><rect x="57.24" y="58.57" width="6.11" height="6.13" fill="#23898e"/><rect x="63.05" y="58.57" width="6.11" height="6.13" fill="#1fa088"/><rect x="68.86" y="58.57" width="6.11" height="6.13" fill="#23898e"/><rect x="74.67" y="58.57" width="6.11" height="6.13" fill="#5ec962"/><rect x="80.48" y="58.57" width="6.11" height="6.13" fill="#5ec962"/><rect x="86.29" y="58.57" width="6.11" height="6.13" fill="#000000"/><rect x="92.10" y="58.57" width="6.11" height="6.13" fill="#23898e"/><rect x="97.91" y="58.57" width="6.11" height="6.13" fill="#1fa088"/><rect x="103.72" y="58.57" width="6.11" height="6.13" fill="#23898e"/><rect x="109.53" y="58.57" width="6.11" height="6.13" fill="#23898e"/><rect x="115.34" y="58.57" width="6.11" height="6.13" fill="#2b748e"/><rect x="121.15" y="58.57" width="6.11" height="6.13" fill="#277e8e"/><rect x="126.96" y="58.57" width="6.11" height="6.13" fill="#2b748e"/><rect x="132.77" y="58.57" width="6.11" height="6.13" fill="#000000"/><rect x="138.58" y="58.57" width="6.11" height="6.13" fill="#277e8e"/><rect x="144.39" y="58.57" width="6.11" height="6.13" fill="#000000"/><rect x="150.20" y="58.57" width="6.11" height="6.13" fill="#277e8e"/><rect x="156.01" y="58.57" width="6.11" height="6.13" fill="#1fa088"/><rect x="161.82" y="58.57" width="6.11" height="6.13" fill="#000000"/><rect x="167.63" y="58.57" width="6.11" height="6.13" fill="#2b748e"/><rect x="173.44" y="58.57" width="6.11" height="6.13" fill="#2b748e"/><rect x="179.25" y="58.57" width="6.11" height="6.13" fill="#277e8e"/><rect x="185.06" y="58.57" width="6.11" height="6.13" fill="#31668e"/><rect x="4.95" y="64.40" width="6.11" height="6.13" fill="#1fa088"/><rect x="10.76" y="64.40" width="6.11" height="6.13" fill="#23898e"/><rect x="16.57" y="64.40" width="6.11" height="6.13" fill="#23898e"/><rect x="22.38" y="64.40" width="6.11" height="6.13" fill="#23898e"/><rect x="28.19" y="64.40" width="6.11" height="6.13" fill="#23898e"/><rect x="34.00" y="64.40" width="6.11" height="6.13" fill="#277e8e"/><rect x="39.81" y="64.40" width="6.11" height="6.13" fill="#000000"/><rect x="45.62" y="64.40" width="6.11" height="6.13" fill="#23898e"/><rect x="51.43" y="64.40" width="6.11" height="6.13" fill="#23898e"/><rect x="57.24" y="64.40" width="6.11" height="6.13" fill="#277e8e"/><rect x="63.05" y="64.40" width="6.11" height="6.13" fill="#23898e"/><rect x="68.86" y="64.40" width="6.11" height="6.13" fill="#23898e"/><rect x="74.67" y="64.40" width="6.11" height="6.13" fill="#1fa088"/><rect x="80.48" y="64.40" width="6.11" height="6.13" fill="#22a884"/><rect x="86.29" y="64.40" width="6.11" height="6.13" fill="#2fb47c"/><rect x="92.10" y="64.40" width="6.11" height="6.13" fill="#22a884"/><rect x="97.91" y="64.40" width="6.11" height="6.13" fill="#1fa088"/><rect x="103.72" y="64.40" width="6.11" height="6.13" fill="#277e8e"/><rect x="109.53" y="64.40" width="6.11" height="6.13" fill="#23898e"/><rect x="115.34" y="64.40" width="6.11" height="6.13" fill="#277e8e"/><rect x="121.15" y="64.40" width="6.11" height="6.13" fill="#000000"/><rect x="126.96" y="64.40" width="6.11" height="6.13" fill="#2b748e"/><rect x="132.77" y="64.40" width="6.11" height="6.13" fill="#2b748e"/><rect x="138.58" y="64.40" width="6.11" height="6.13" fill="#277e8e"/><rect x="144.39" y="64.40" width="6.11" height="6.13" fill="#000000"/><rect x="150.20" y="64.40" width="6.11" height="6.13" fill="#1fa088"/><rect x="156.01" y="64.40" width="6.11" height="6.13" fill="#277e8e"/><rect x="161.82" y="64.40" width="6.11" height="6.13" fill="#000000"/><rect x="167.63" y="64.40" width="6.11" height="6.13" fill="#2b748e"/><rect x="173.44" y="64.40" width="6.11" height="6.13" fill="#2b748e"/><rect x="179.25" y="64.40" width="6.11" height="6.13" fill="#23898e"/><rect x="185.06" y="64.40" width="6.11" height="6.13" fill="#31668e"/><rect x="4.95" y="70.23" width="6.11" height="6.13" fill="#23898e"/><rect x="10.76" y="70.23" width="6.11" height="6.13" fill="#277e8e"/><rect x="16.57" y="70.23" width="6.11" height="6.13" fill="#1fa088"/><rect x="22.38" y="70.23" width="6.11" height="6.13" fill="#277e8e"/><rect x="28.19" y="70.23" width="6.11" height="6.13" fill="#23898e"/><rect x="34.00" y="70.23" width="6.11" height="6.13" fill="#23898e"/><rect x="39.81" y="70.23" width="6.11" height="6.13" fill="#000000"/><rect x="45.62" y="70.23" width="6.11" height="6.13" fill="#277e8e"/><rect x="51.43" y="70.23" width="6.11" height="6.13" fill="#23898e"/><rect x="57.24" y="70.23" width="6.11" height="6.13" fill="#1fa088"/><rect x="63.05" y="70.23" width="6.11" height="6.13" fill="#23898e"/><rect x="68.86" y="70.23" width="6.11" height="6.13" fill="#277e8e"/><rect x="74.67" y="70.23" width="6.11" height="6.13" fill="#23898e"/><rect x="80.48" y="70.23" width="6.11" height="6.13" fill="#22a884"/><rect x="86.29" y="70.23" width="6.11" height="6.13" fill="#22a884"/><rect x="92.10" y="70.23" width="6.11" height="6.13" fill="#22a884"/><rect x="97.91" y="70.23" width="6.11" height="6.13" fill="#22a884"/><rect x="103.72" y="70.23" width="6.11" height="6.13" fill="#277e8e"/><rect x="109.53" y="70.23" width="6.11" height="6.13" fill="#23898e"/><rect x="115.34" y="70.23" width="6.11" height="6.13" fill="#277e8e"/><rect x="121.15" y="70.23" width="6.11" height="6.13" fill="#2b748e"/><rect x="126.96" y="70.23" width="6.11" height="6.13" fill="#277e8e"/><rect x="132.77" y="70.23" width="6.11" height="6.13" fill="#277e8e"/><rect x="138.58" y="70.23" width="6.11" height="6.13" fill="#1fa088"/><rect x="144.39" y="70.23" width="6.11" height="6.13" fill="#000000"/><rect x="150.20" y="70.23" width="6.11" height="6.13" fill="#23898e"/><rect x="156.01" y="70.23" width="6.11" height="6.13" fill="#23898e"/><rect x="161.82" y="70.23" width="6.11" height="6.13" fill="#000000"/><rect x="167.63" y="70.23" width="6.11" height="6.13" fill="#2b748e"/><rect x="173.44" y="70.23" width="6.11" height="6.13" fill="#2b748e"/><rect x="179.25" y="70.23" width="6.11" height="6.13" fill="#2b748e"/><rect x="185.06" y="70.23" width="6.11" height="6.13" fill="#000000"/><rect x="4.95" y="76.06" width="6.11" height="6.13" fill="#2b748e"/><rect x="10.76" y="76.06" width="6.11" height="6.13" fill="#277e8e"/><rect x="16.57" y="76.06" width="6.11" height="6.13" fill="#277e8e"/><rect x="22.38" y="76.06" width="6.11" height="6.13" fill="#23898e"/><rect x="28.19" y="76.06" width="6.11" height="6.13" fill="#277e8e"/><rect x="34.00" y="76.06" width="6.11" height="6.13" fill="#2b748e"/><rect x="39.81" y="76.06" width="6.11" height="6.13" fill="#000000"/><rect x="45.62" y="76.06" width="6.11" height="6.13" fill="#22a884"/><rect x="51.43" y="76.06" width="6.11" height="6.13" fill="#23898e"/><rect x="57.24" y="76.06" width="6.11" height="6.13" fill="#23898e"/><rect x="63.05" y="76.06" width="6.11" height="6.13" fill="#23898e"/><rect x="68.86" y="76.06" width="6.11" height="6.13" fill="#23898e"/><rect x="74.67" y="76.06" width="6.11" height="6.13" fill="#23898e"/><rect x="80.48" y="76.06" width="6.11" height="6.13" fill="#23898e"/><rect x="86.29" y="76.06" width="6.11" height="6.13" fill="#2fb47c"/><rect x="92.10" y="76.06" width="6.11" height="6.13" fill="#2fb47c"/><rect x="97.91" y="76.06" width="6.11" height="6.13" fill="#2fb47c"/><rect x="103.72" y="76.06" width="6.11" height="6.13" fill="#1fa088"/><rect x="109.53" y="76.06" width="6.11" height="6.13" fill="#23898e"/><rect x="115.34" y="76.06" width="6.11" height="6.13" fill="#1fa088"/><rect x="121.15" y="76.06" width="6.11" height="6.13" fill="#2b748e"/><rect x="126.96" y="76.06" width="6.11" height="6.13" fill="#277e8e"/><rect x="132.77" y="76.06" width="6.11" height="6.13" fill="#000000"/><rect x="138.58" y="76.06" width="6.11" height="6.13" fill="#1fa088"/><rect x="144.39" y="76.06" width="6.11" height="6.13" fill="#000000"/><rect x="150.20" y="76.06" width="6.11" height="6.13" fill="#000000"/><rect x="156.01" y="76.06" width="6.11" height="6.13" fill="#23898e"/><rect x="161.82" y="76.06" width="6.11" height="6.13" fill="#277e8e"/><rect x="167.63" y="76.06" width="6.11" height="6.13" fill="#000000"/><rect x="173.44" y="76.06" width="6.11" height="6.13" fill="#23898e"/><rect x="179.25" y="76.06" width="6.11" height="6.13" fill="#277e8e"/><rect x="185.06" y="76.06" width="6.11" height="6.13" fill="#000000"/><rect x="4.95" y="81.89" width="6.11" height="6.13" fill="#23898e"/><rect x="10.76" y="81.89" width="6.11" height="6.13" fill="#2b748e"/><rect x="16.57" y="81.89" width="6.11" height="6.13" fill="#2b748e"/><rect x="22.38" y="81.89" width="6.11" height="6.13" fill="#23898e"/><rect x="28.19" y="81.89" width="6.11" height="6.13" fill="#1fa088"/><rect x="34.00" y="81.89" width="6.11" height="6.13" fill="#23898e"/><rect x="39.81" y="81.89" width="6.11" height="6.13" fill="#000000"/><rect x="45.62" y="81.89" width="6.11" height="6.13" fill="#2fb47c"/><rect x="51.43" y="81.89" width="6.11" height="6.13" fill="#2fb47c"/><rect x="57.24" y="81.89" width="6.11" height="6.13" fill="#44bf70"/><rect x="63.05" y="81.89" width="6.11" height="6.13" fill="#2fb47c"/><rect x="68.86" y="81.89" width="6.11" height="6.13" fill="#2fb47c"/><rect x="74.67" y="81.89" width="6.11" height="6.13" fill="#1fa088"/><rect x="80.48" y="81.89" width="6.11" height="6.13" fill="#23898e"/><rect x="86.29" y="81.89" width="6.11" height="6.13" fill="#1fa088"/><rect x="92.10" y="81.89" width="6.11" height="6.13" fill="#2fb47c"/><rect x="97.91" y="81.89" width="6.11" height="6.13" fill="#44bf70"/><rect x="103.72" y="81.89" width="6.11" height="6.13" fill="#1fa088"/><rect x="109.53" y="81.89" width="6.11" height="6.13" fill="#1fa088"/><rect x="115.34" y="81.89" width="6.11" height="6.13" fill="#23898e"/><rect x="121.15" y="81.89" width="6.11" height="6.13" fill="#2b748e"/><rect x="126.96" y="81.89" width="6.11" height="6.13" fill="#20938c"/><rect x="132.77" y="81.89" width="6.11" height="6.13" fill="#277e8e"/><rect x="138.58" y="81.89" width="6.11" height="6.13" fill="#277e8e"/><rect x="144.39" y="81.89" width="6.11" height="6.13" fill="#000000"/><rect x="150.20" y="81.89" width="6.11" height="6.13" fill="#2b748e"/><rect x="156.01" y="81.89" width="6.11" height="6.13" fill="#23898e"/><rect x="161.82" y="81.89" width="6.11" height="6.13" fill="#000000"/><rect x="167.63" y="81.89" width="6.11" height="6.13" fill="#277e8e"/><rect x="173.44" y="81.89" width="6.11" height="6.13" fill="#23898e"/><rect x="179.25" y="81.89" width="6.11" height="6.13" fill="#23898e"/><rect x="185.06" y="81.89" width="6.11" height="6.13" fill="#23898e"/><rect x="4.95" y="87.72" width="6.11" height="6.13" fill="#000000"/><rect x="10.76" y="87.72" width="6.11" height="6.13" fill="#277e8e"/><rect x="16.57" y="87.72" width="6.11" height="6.13" fill="#2b748e"/><rect x="22.38" y="87.72" width="6.11" height="6.13" fill="#22a884"/><rect x="28.19" y="87.72" width="6.11" height="6.13" fill="#23898e"/><rect x="34.00" y="87.72" width="6.11" height="6.13" fill="#5ec962"/><rect x="39.81" y="87.72" width="6.11" height="6.13" fill="#000000"/><rect x="45.62" y="87.72" width="6.11" height="6.13" fill="#fde725"/><rect x="51.43" y="87.72" width="6.11" height="6.13" fill="#fde725"/><rect x="57.24" y="87.72" width="6.11" height="6.13" fill="#fde725"/><rect x="63.05" y="87.72" width="6.11" height="6.13" fill="#fde725"/><rect x="68.86" y="87.72" width="6.11" height="6.13" fill="#bddf26"/><rect x="74.67" y="87.72" width="6.11" height="6.13" fill="#2fb47c"/><rect x="80.48" y="87.72" width="6.11" height="6.13" fill="#1fa088"/><rect x="86.29" y="87.72" width="6.11" height="6.13" fill="#23898e"/><rect x="92.10" y="87.72" width="6.11" height="6.13" fill="#000000"/><rect x="97.91" y="87.72" width="6.11" height="6.13" fill="#1fa088"/><rect x="103.72" y="87.72" width="6.11" height="6.13" fill="#23898e"/><rect x="109.53" y="87.72" width="6.11" height="6.13" fill="#1fa088"/><rect x="115.34" y="87.72" width="6.11" height="6.13" fill="#277e8e"/><rect x="121.15" y="87.72" width="6.11" height="6.13" fill="#277e8e"/><rect x="126.96" y="87.72" width="6.11" height="6.13" fill="#277e8e"/><rect x="132.77" y="87.72" width="6.11" height="6.13" fill="#000000"/><rect x="138.58" y="87.72" width="6.11" height="6.13" fill="#23898e"/><rect x="144.39" y="87.72" width="6.11" height="6.13" fill="#31668e"/><rect x="150.20" y="87.72" width="6.11" height="6.13" fill="#2b748e"/><rect x="156.01" y="87.72" width="6.11" height="6.13" fill="#23898e"/><rect x="161.82" y="87.72" width="6.11" height="6.13" fill="#23898e"/><rect x="167.63" y="87.72" width="6.11" height="6.13" fill="#1fa088"/><rect x="173.44" y="87.72" width="6.11" height="6.13" fill="#23898e"/><rect x="179.25" y="87.72" width="6.11" height="6.13" fill="#1fa088"/><rect x="185.06" y="87.72" width="6.11" height="6.13" fill="#000000"/><rect x="4.95" y="93.55" width="6.11" height="6.13" fill="#000000"/><rect x="10.76" y="93.55" width="6.11" height="6.13" fill="#2b748e"/><rect x="16.57" y="93.55" width="6.11" height="6.13" fill="#31668e"/><rect x="22.38" y="93.55" width="6.11" height="6.13" fill="#23898e"/><rect x="28.19" y="93.55" width="6.11" height="6.13" fill="#22a884"/><rect x="34.00" y="93.55" width="6.11" height="6.13" fill="#bddf26"/><rect x="39.81" y="93.55" width="6.11" height="6.13" fill="#000000"/><rect x="45.62" y="93.55" width="6.11" height="6.13" fill="#fde725"/><rect x="51.43" y="93.55" width="6.11" height="6.13" fill="#fde725"/><rect x="57.24" y="93.55" width="6.11" height="6.13" fill="#000000"/><rect x="63.05" y="93.55" width="6.11" height="6.13" fill="#000000"/><rect x="68.86" y="93.55" width="6.11" height="6.13" fill="#fde725"/><rect x="74.67" y="93.55" width="6.11" height="6.13" fill="#bddf26"/><rect x="80.48" y="93.55" width="6.11" height="6.13" fill="#000000"/><rect x="86.29" y="93.55" width="6.11" height="6.13" fill="#2fb47c"/><rect x="92.10" y="93.55" width="6.11" height="6.13" fill="#2fb47c"/><rect x="97.91" y="93.55" width="6.11" height="6.13" fill="#23898e"/><rect x="103.72" y="93.55" width="6.11" height="6.13" fill="#23898e"/><rect x="109.53" y="93.55" width="6.11" height="6.13" fill="#277e8e"/><rect x="115.34" y="93.55" width="6.11" height="6.13" fill="#277e8e"/><rect x="121.15" y="93.55" width="6.11" height="6.13" fill="#277e8e"/><rect x="126.96" y="93.55" width="6.11" height="6.13" fill="#2b748e"/><rect x="132.77" y="93.55" width="6.11" height="6.13" fill="#000000"/><rect x="138.58" y="93.55" width="6.11" height="6.13" fill="#23898e"/><rect x="144.39" y="93.55" width="6.11" height="6.13" fill="#277e8e"/><rect x="150.20" y="93.55" width="6.11" height="6.13" fill="#277e8e"/><rect x="156.01" y="93.55" width="6.11" height="6.13" fill="#2b748e"/><rect x="161.82" y="93.55" width="6.11" height="6.13" fill="#277e8e"/><rect x="167.63" y="93.55" width="6.11" height="6.13" fill="#277e8e"/><rect x="173.44" y="93.55" width="6.11" height="6.13" fill="#2b748e"/><rect x="179.25" y="93.55" width="6.11" height="6.13" fill="#000000"/><rect x="185.06" y="93.55" width="6.11" height="6.13" fill="#000000"/><rect x="4.95" y="99.38" width="6.11" height="6.13" fill="#2b748e"/><rect x="10.76" y="99.38" width="6.11" height="6.13" fill="#23898e"/><rect x="16.57" y="99.38" width="6.11" height="6.13" fill="#1fa088"/><rect x="22.38" y="99.38" width="6.11" height="6.13" fill="#23898e"/><rect x="28.19" y="99.38" width="6.11" height="6.13" fill="#5ec962"/><rect x="34.00" y="99.38" width="6.11" height="6.13" fill="#dfe318"/><rect x="39.81" y="99.38" width="6.11" height="6.13" fill="#000000"/><rect x="45.62" y="99.38" width="6.11" height="6.13" fill="#fde725"/><rect x="51.43" y="99.38" width="6.11" height="6.13" fill="#fde725"/><rect x="57.24" y="99.38" width="6.11" height="6.13" fill="#fde725"/><rect x="63.05" y="99.38" width="6.11" height="6.13" fill="#fde725"/><rect x="68.86" y="99.38" width="6.11" height="6.13" fill="#fde725"/><rect x="74.67" y="99.38" width="6.11" height="6.13" fill="#fde725"/><rect x="80.48" y="99.38" width="6.11" height="6.13" fill="#9bd93c"/><rect x="86.29" y="99.38" width="6.11" height="6.13" fill="#2fb47c"/><rect x="92.10" y="99.38" width="6.11" height="6.13" fill="#2fb47c"/><rect x="97.91" y="99.38" width="6.11" height="6.13" fill="#1fa088"/><rect x="103.72" y="99.38" width="6.11" height="6.13" fill="#277e8e"/><rect x="109.53" y="99.38" width="6.11" height="6.13" fill="#1fa088"/><rect x="115.34" y="99.38" width="6.11" height="6.13" fill="#277e8e"/><rect x="121.15" y="99.38" width="6.11" height="6.13" fill="#277e8e"/><rect x="126.96" y="99.38" width="6.11" height="6.13" fill="#2b748e"/><rect x="132.77" y="99.38" width="6.11" height="6.13" fill="#23898e"/><rect x="138.58" y="99.38" width="6.11" height="6.13" fill="#23898e"/><rect x="144.39" y="99.38" width="6.11" height="6.13" fill="#23898e"/><rect x="150.20" y="99.38" width="6.11" height="6.13" fill="#277e8e"/><rect x="156.01" y="99.38" width="6.11" height="6.13" fill="#23898e"/><rect x="161.82" y="99.38" width="6.11" height="6.13" fill="#23898e"/><rect x="167.63" y="99.38" width="6.11" height="6.13" fill="#23898e"/><rect x="173.44" y="99.38" width="6.11" height="6.13" fill="#1fa088"/><rect x="179.25" y="99.38" width="6.11" height="6.13" fill="#277e8e"/><rect x="185.06" y="99.38" width="6.11" height="6.13" fill="#2b748e"/><rect x="4.95" y="105.21" width="6.11" height="6.13" fill="#23898e"/><rect x="10.76" y="105.21" width="6.11" height="6.13" fill="#1fa088"/><rect x="16.57" y="105.21" width="6.11" height="6.13" fill="#23898e"/><rect x="22.38" y="105.21" width="6.11" height="6.13" fill="#22a884"/><rect x="28.19" y="105.21" width="6.11" height="6.13" fill="#5ec962"/><rect x="34.00" y="105.21" width="6.11" height="6.13" fill="#dfe318"/><rect x="39.81" y="105.21" width="6.11" height="6.13" fill="#000000"/><rect x="45.62" y="105.21" width="6.11" height="6.13" fill="#dfe318"/><rect x="51.43" y="105.21" width="6.11" height="6.13" fill="#fde725"/><rect x="57.24" y="105.21" width="6.11" height="6.13" fill="#fde725"/><rect x="63.05" y="105.21" width="6.11" height="6.13" fill="#fde725"/><rect x="68.86" y="105.21" width="6.11" height="6.13" fill="#fde725"/><rect x="74.67" y="105.21" width="6.11" height="6.13" fill="#fde725"/><rect x="80.48" y="105.21" width="6.11" height="6.13" fill="#7ad151"/><rect x="86.29" y="105.21" width="6.11" height="6.13" fill="#5ec962"/><rect x="92.10" y="105.21" width="6.11" height="6.13" fill="#5ec962"/><rect x="97.91" y="105.21" width="6.11" height="6.13" fill="#2fb47c"/><rect x="103.72" y="105.21" width="6.11" height="6.13" fill="#23898e"/><rect x="109.53" y="105.21" width="6.11" height="6.13" fill="#277e8e"/><rect x="115.34" y="105.21" width="6.11" height="6.13" fill="#277e8e"/><rect x="121.15" y="105.21" width="6.11" height="6.13" fill="#277e8e"/><rect x="126.96" y="105.21" width="6.11" height="6.13" fill="#23898e"/><rect x="132.77" y="105.21" width="6.11" height="6.13" fill="#2b748e"/><rect x="138.58" y="105.21" width="6.11" height="6.13" fill="#277e8e"/><rect x="144.39" y="105.21" width="6.11" height="6.13" fill="#277e8e"/><rect x="150.20" y="105.21" width="6.11" height="6.13" fill="#277e8e"/><rect x="156.01" y="105.21" width="6.11" height="6.13" fill="#1fa088"/><rect x="161.82" y="105.21" width="6.11" height="6.13" fill="#22a884"/><rect x="167.63" y="105.21" width="6.11" height="6.13" fill="#2fb47c"/><rect x="173.44" y="105.21" width="6.11" height="6.13" fill="#22a884"/><rect x="179.25" y="105.21" width="6.11" height="6.13" fill="#23898e"/><rect x="185.06" y="105.21" width="6.11" height="6.13" fill="#000000"/><rect x="4.95" y="111.04" width="6.11" height="6.13" fill="#23898e"/><rect x="10.76" y="111.04" width="6.11" height="6.13" fill="#22a884"/><rect x="16.57" y="111.04" width="6.11" height="6.13" fill="#23898e"/><rect x="22.38" y="111.04" width="6.11" height="6.13" fill="#22a884"/><rect x="28.19" y="111.04" width="6.11" height="6.13" fill="#5ec962"/><rect x="34.00" y="111.04" width="6.11" height="6.13" fill="#9bd93c"/><rect x="39.81" y="111.04" width="6.11" height="6.13" fill="#000000"/><rect x="45.62" y="111.04" width="6.11" height="6.13" fill="#dfe318"/><rect x="51.43" y="111.04" width="6.11" height="6.13" fill="#fde725"/><rect x="57.24" y="111.04" width="6.11" height="6.13" fill="#fde725"/><rect x="63.05" y="111.04" width="6.11" height="6.13" fill="#fde725"/><rect x="68.86" y="111.04" width="6.11" height="6.13" fill="#fde725"/><rect x="74.67" y="111.04" width="6.11" height="6.13" fill="#fde725"/><rect x="80.48" y="111.04" width="6.11" height="6.13" fill="#dfe318"/><rect x="86.29" y="111.04" width="6.11" height="6.13" fill="#bddf26"/><rect x="92.10" y="111.04" width="6.11" height="6.13" fill="#5ec962"/><rect x="97.91" y="111.04" width="6.11" height="6.13" fill="#1fa088"/><rect x="103.72" y="111.04" width="6.11" height="6.13" fill="#23898e"/><rect x="109.53" y="111.04" width="6.11" height="6.13" fill="#23898e"/><rect x="115.34" y="111.04" width="6.11" height="6.13" fill="#277e8e"/><rect x="121.15" y="111.04" width="6.11" height="6.13" fill="#277e8e"/><rect x="126.96" y="111.04" width="6.11" height="6.13" fill="#000000"/><rect x="132.77" y="111.04" width="6.11" height="6.13" fill="#23898e"/><rect x="138.58" y="111.04" width="6.11" height="6.13" fill="#23898e"/><rect x="144.39" y="111.04" width="6.11" height="6.13" fill="#23898e"/><rect x="150.20" y="111.04" width="6.11" height="6.13" fill="#23898e"/><rect x="156.01" y="111.04" width="6.11" height="6.13" fill="#22a884"/><rect x="161.82" y="111.04" width="6.11" height="6.13" fill="#22a884"/><rect x="167.63" y="111.04" width="6.11" height="6.13" fill="#1fa088"/><rect x="173.44" y="111.04" width="6.11" height="6.13" fill="#22a884"/><rect x="179.25" y="111.04" width="6.11" height="6.13" fill="#23898e"/><rect x="185.06" y="111.04" width="6.11" height="6.13" fill="#23898e"/><rect x="4.95" y="116.87" width="6.11" height="6.13" fill="#000000"/><rect x="10.76" y="116.87" width="6.11" height="6.13" fill="#22a884"/><rect x="16.57" y="116.87" width="6.11" height="6.13" fill="#5ec962"/><rect x="22.38" y="116.87" width="6.11" height="6.13" fill="#44bf70"/><rect x="28.19" y="116.87" width="6.11" height="6.13" fill="#2fb47c"/><rect x="34.00" y="116.87" width="6.11" height="6.13" fill="#5ec962"/><rect x="39.81" y="116.87" width="6.11" height="6.13" fill="#000000"/><rect x="45.62" y="116.87" width="6.11" height="6.13" fill="#fde725"/><rect x="51.43" y="116.87" width="6.11" height="6.13" fill="#fde725"/><rect x="57.24" y="116.87" width="6.11" height="6.13" fill="#fde725"/><rect x="63.05" y="116.87" width="6.11" height="6.13" fill="#fde725"/><rect x="68.86" y="116.87" width="6.11" height="6.13" fill="#fde725"/><rect x="74.67" y="116.87" width="6.11" height="6.13" fill="#fde725"/><rect x="80.48" y="116.87" width="6.11" height="6.13" fill="#000000"/><rect x="86.29" y="116.87" width="6.11" height="6.13" fill="#fde725"/><rect x="92.10" y="116.87" width="6.11" height="6.13" fill="#2fb47c"/><rect x="97.91" y="116.87" width="6.11" height="6.13" fill="#000000"/><rect x="103.72" y="116.87" width="6.11" height="6.13" fill="#23898e"/><rect x="109.53" y="116.87" width="6.11" height="6.13" fill="#000000"/><rect x="115.34" y="116.87" width="6.11" height="6.13" fill="#277e8e"/><rect x="121.15" y="116.87" width="6.11" height="6.13" fill="#23898e"/><rect x="126.96" y="116.87" width="6.11" height="6.13" fill="#277e8e"/><rect x="132.77" y="116.87" width="6.11" height="6.13" fill="#000000"/><rect x="138.58" y="116.87" width="6.11" height="6.13" fill="#000000"/><rect x="144.39" y="116.87" width="6.11" height="6.13" fill="#000000"/><rect x="150.20" y="116.87" width="6.11" height="6.13" fill="#23898e"/><rect x="156.01" y="116.87" width="6.11" height="6.13" fill="#1fa088"/><rect x="161.82" y="116.87" width="6.11" height="6.13" fill="#22a884"/><rect x="167.63" y="116.87" width="6.11" height="6.13" fill="#1fa088"/><rect x="173.44" y="116.87" width="6.11" height="6.13" fill="#22a884"/><rect x="179.25" y="116.87" width="6.11" height="6.13" fill="#277e8e"/><rect x="185.06" y="116.87" width="6.11" height="6.13" fill="#000000"/><rect x="4.95" y="122.70" width="6.11" height="6.13" fill="#277e8e"/><rect x="10.76" y="122.70" width="6.11" height="6.13" fill="#23898e"/><rect x="16.57" y="122.70" width="6.11" height="6.13" fill="#22a884"/><rect x="22.38" y="122.70" width="6.11" height="6.13" fill="#22a884"/><rect x="28.19" y="122.70" width="6.11" height="6.13" fill="#22a884"/><rect x="34.00" y="122.70" width="6.11" height="6.13" fill="#22a884"/><rect x="39.81" y="122.70" width="6.11" height="6.13" fill="#000000"/><rect x="45.62" y="122.70" width="6.11" height="6.13" fill="#fde725"/><rect x="51.43" y="122.70" width="6.11" height="6.13" fill="#fde725"/><rect x="57.24" y="122.70" width="6.11" height="6.13" fill="#fde725"/><rect x="63.05" y="122.70" width="6.11" height="6.13" fill="#fde725"/><rect x="68.86" y="122.70" width="6.11" height="6.13" fill="#fde725"/><rect x="74.67" y="122.70" width="6.11" height="6.13" fill="#fde725"/><rect x="80.48" y="122.70" width="6.11" height="6.13" fill="#fde725"/><rect x="86.29" y="122.70" width="6.11" height="6.13" fill="#fde725"/><rect x="92.10" y="122.70" width="6.11" height="6.13" fill="#1fa088"/><rect x="97.91" y="122.70" width="6.11" height="6.13" fill="#1fa088"/><rect x="103.72" y="122.70" width="6.11" height="6.13" fill="#23898e"/><rect x="109.53" y="122.70" width="6.11" height="6.13" fill="#277e8e"/><rect x="115.34" y="122.70" width="6.11" height="6.13" fill="#277e8e"/><rect x="121.15" y="122.70" width="6.11" height="6.13" fill="#277e8e"/><rect x="126.96" y="122.70" width="6.11" height="6.13" fill="#2b748e"/><rect x="132.77" y="122.70" width="6.11" height="6.13" fill="#31668e"/><rect x="138.58" y="122.70" width="6.11" height="6.13" fill="#23898e"/><rect x="144.39" y="122.70" width="6.11" height="6.13" fill="#23898e"/><rect x="150.20" y="122.70" width="6.11" height="6.13" fill="#1fa088"/><rect x="156.01" y="122.70" width="6.11" height="6.13" fill="#44bf70"/><rect x="161.82" y="122.70" width="6.11" height="6.13" fill="#44bf70"/><rect x="167.63" y="122.70" width="6.11" height="6.13" fill="#1fa088"/><rect x="173.44" y="122.70" width="6.11" height="6.13" fill="#1fa088"/><rect x="179.25" y="122.70" width="6.11" height="6.13" fill="#23898e"/><rect x="185.06" y="122.70" width="6.11" height="6.13" fill="#2b748e"/><rect x="4.95" y="128.53" width="6.11" height="6.13" fill="#277e8e"/><rect x="10.76" y="128.53" width="6.11" height="6.13" fill="#23898e"/><rect x="16.57" y="128.53" width="6.11" height="6.13" fill="#22a884"/><rect x="22.38" y="128.53" width="6.11" height="6.13" fill="#1fa088"/><rect x="28.19" y="128.53" width="6.11" height="6.13" fill="#1fa088"/><rect x="34.00" y="128.53" width="6.11" height="6.13" fill="#23898e"/><rect x="39.81" y="128.53" width="6.11" height="6.13" fill="#000000"/><rect x="45.62" y="128.53" width="6.11" height="6.13" fill="#9bd93c"/><rect x="51.43" y="128.53" width="6.11" height="6.13" fill="#fde725"/><rect x="57.24" y="128.53" width="6.11" height="6.13" fill="#fde725"/><rect x="63.05" y="128.53" width="6.11" height="6.13" fill="#fde725"/><rect x="68.86" y="128.53" width="6.11" height="6.13" fill="#fde725"/><rect x="74.67" y="128.53" width="6.11" height="6.13" fill="#fde725"/><rect x="80.48" y="128.53" width="6.11" height="6.13" fill="#dfe318"/><rect x="86.29" y="128.53" width="6.11" height="6.13" fill="#5ec962"/><rect x="92.10" y="128.53" width="6.11" height="6.13" fill="#23898e"/><rect x="97.91" y="128.53" width="6.11" height="6.13" fill="#23898e"/><rect x="103.72" y="128.53" width="6.11" height="6.13" fill="#23898e"/><rect x="109.53" y="128.53" width="6.11" height="6.13" fill="#1fa088"/><rect x="115.34" y="128.53" width="6.11" height="6.13" fill="#1fa088"/><rect x="121.15" y="128.53" width="6.11" height="6.13" fill="#23898e"/><rect x="126.96" y="128.53" width="6.11" height="6.13" fill="#277e8e"/><rect x="132.77" y="128.53" width="6.11" height="6.13" fill="#23898e"/><rect x="138.58" y="128.53" width="6.11" height="6.13" fill="#23898e"/><rect x="144.39" y="128.53" width="6.11" height="6.13" fill="#23898e"/><rect x="150.20" y="128.53" width="6.11" height="6.13" fill="#1fa088"/><rect x="156.01" y="128.53" width="6.11" height="6.13" fill="#2fb47c"/><rect x="161.82" y="128.53" width="6.11" height="6.13" fill="#44bf70"/><rect x="167.63" y="128.53" width="6.11" height="6.13" fill="#1fa088"/><rect x="173.44" y="128.53" width="6.11" height="6.13" fill="#277e8e"/><rect x="179.25" y="128.53" width="6.11" height="6.13" fill="#277e8e"/><rect x="185.06" y="128.53" width="6.11" height="6.13" fill="#23898e"/><rect x="4.95" y="134.36" width="6.11" height="6.13" fill="#23898e"/><rect x="10.76" y="134.36" width="6.11" height="6.13" fill="#23898e"/><rect x="16.57" y="134.36" width="6.11" height="6.13" fill="#22a884"/><rect x="22.38" y="134.36" width="6.11" height="6.13" fill="#22a884"/><rect x="28.19" y="134.36" width="6.11" height="6.13" fill="#1fa088"/><rect x="34.00" y="134.36" width="6.11" height="6.13" fill="#23898e"/><rect x="39.81" y="134.36" width="6.11" height="6.13" fill="#000000"/><rect x="45.62" y="134.36" width="6.11" height="6.13" fill="#1fa088"/><rect x="51.43" y="134.36" width="6.11" height="6.13" fill="#2fb47c"/><rect x="57.24" y="134.36" width="6.11" height="6.13" fill="#7ad151"/><rect x="63.05" y="134.36" width="6.11" height="6.13" fill="#bddf26"/><rect x="68.86" y="134.36" width="6.11" height="6.13" fill="#dfe318"/><rect x="74.67" y="134.36" width="6.11" height="6.13" fill="#7ad151"/><rect x="80.48" y="134.36" width="6.11" height="6.13" fill="#1fa088"/><rect x="86.29" y="134.36" width="6.11" height="6.13" fill="#23898e"/><rect x="92.10" y="134.36" width="6.11" height="6.13" fill="#23898e"/><rect x="97.91" y="134.36" width="6.11" height="6.13" fill="#23898e"/><rect x="103.72" y="134.36" width="6.11" height="6.13" fill="#23898e"/><rect x="109.53" y="134.36" width="6.11" height="6.13" fill="#277e8e"/><rect x="115.34" y="134.36" width="6.11" height="6.13" fill="#23898e"/><rect x="121.15" y="134.36" width="6.11" height="6.13" fill="#23898e"/><rect x="126.96" y="134.36" width="6.11" height="6.13" fill="#2b748e"/><rect x="132.77" y="134.36" width="6.11" height="6.13" fill="#2b748e"/><rect x="138.58" y="134.36" width="6.11" height="6.13" fill="#2b748e"/><rect x="144.39" y="134.36" width="6.11" height="6.13" fill="#23898e"/><rect x="150.20" y="134.36" width="6.11" height="6.13" fill="#000000"/><rect x="156.01" y="134.36" width="6.11" height="6.13" fill="#22a884"/><rect x="161.82" y="134.36" width="6.11" height="6.13" fill="#1fa088"/><rect x="167.63" y="134.36" width="6.11" height="6.13" fill="#23898e"/><rect x="173.44" y="134.36" width="6.11" height="6.13" fill="#277e8e"/><rect x="179.25" y="134.36" width="6.11" height="6.13" fill="#277e8e"/><rect x="185.06" y="134.36" width="6.11" height="6.13" fill="#000000"/><rect x="4.95" y="140.19" width="6.11" height="6.13" fill="#2b748e"/><rect x="10.76" y="140.19" width="6.11" height="6.13" fill="#23898e"/><rect x="16.57" y="140.19" width="6.11" height="6.13" fill="#1fa088"/><rect x="22.38" y="140.19" width="6.11" height="6.13" fill="#44bf70"/><rect x="28.19" y="140.19" width="6.11" height="6.13" fill="#44bf70"/><rect x="34.00" y="140.19" width="6.11" height="6.13" fill="#1fa088"/><rect x="39.81" y="140.19" width="6.11" height="6.13" fill="#000000"/><rect x="45.62" y="140.19" width="6.11" height="6.13" fill="#23898e"/><rect x="51.43" y="140.19" width="6.11" height="6.13" fill="#1fa088"/><rect x="57.24" y="140.19" width="6.11" height="6.13" fill="#22a884"/><rect x="63.05" y="140.19" width="6.11" height="6.13" fill="#22a884"/><rect x="68.86" y="140.19" width="6.11" height="6.13" fill="#2fb47c"/><rect x="74.67" y="140.19" width="6.11" height="6.13" fill="#23898e"/><rect x="80.48" y="140.19" width="6.11" height="6.13" fill="#1fa088"/><rect x="86.29" y="140.19" width="6.11" height="6.13" fill="#23898e"/><rect x="92.10" y="140.19" width="6.11" height="6.13" fill="#23898e"/><rect x="97.91" y="140.19" width="6.11" height="6.13" fill="#23898e"/><rect x="103.72" y="140.19" width="6.11" height="6.13" fill="#23898e"/><rect x="109.53" y="140.19" width="6.11" height="6.13" fill="#23898e"/><rect x="115.34" y="140.19" width="6.11" height="6.13" fill="#23898e"/><rect x="121.15" y="140.19" width="6.11" height="6.13" fill="#2b748e"/><rect x="126.96" y="140.19" width="6.11" height="6.13" fill="#23898e"/><rect x="132.77" y="140.19" width="6.11" height="6.13" fill="#23898e"/><rect x="138.58" y="140.19" width="6.11" height="6.13" fill="#23898e"/><rect x="144.39" y="140.19" width="6.11" height="6.13" fill="#277e8e"/><rect x="150.20" y="140.19" width="6.11" height="6.13" fill="#23898e"/><rect x="156.01" y="140.19" width="6.11" height="6.13" fill="#23898e"/><rect x="161.82" y="140.19" width="6.11" height="6.13" fill="#277e8e"/><rect x="167.63" y="140.19" width="6.11" height="6.13" fill="#277e8e"/><rect x="173.44" y="140.19" width="6.11" height="6.13" fill="#277e8e"/><rect x="179.25" y="140.19" width="6.11" height="6.13" fill="#277e8e"/><rect x="185.06" y="140.19" width="6.11" height="6.13" fill="#277e8e"/><rect x="4.95" y="146.02" width="6.11" height="6.13" fill="#2b748e"/><rect x="10.76" y="146.02" width="6.11" height="6.13" fill="#277e8e"/><rect x="16.57" y="146.02" width="6.11" height="6.13" fill="#23898e"/><rect x="22.38" y="146.02" width="6.11" height="6.13" fill="#44bf70"/><rect x="28.19" y="146.02" width="6.11" height="6.13" fill="#7ad151"/><rect x="34.00" y="146.02" width="6.11" height="6.13" fill="#22a884"/><rect x="39.81" y="146.02" width="6.11" height="6.13" fill="#000000"/><rect x="45.62" y="146.02" width="6.11" height="6.13" fill="#23898e"/><rect x="51.43" y="146.02" width="6.11" height="6.13" fill="#277e8e"/><rect x="57.24" y="146.02" width="6.11" height="6.13" fill="#1fa088"/><rect x="63.05" y="146.02" width="6.11" height="6.13" fill="#1fa088"/><rect x="68.86" y="146.02" width="6.11" height="6.13" fill="#1fa088"/><rect x="74.67" y="146.02" width="6.11" height="6.13" fill="#23898e"/><rect x="80.48" y="146.02" width="6.11" height="6.13" fill="#277e8e"/><rect x="86.29" y="146.02" width="6.11" height="6.13" fill="#23898e"/><rect x="92.10" y="146.02" width="6.11" height="6.13" fill="#23898e"/><rect x="97.91" y="146.02" width="6.11" height="6.13" fill="#23898e"/><rect x="103.72" y="146.02" width="6.11" height="6.13" fill="#277e8e"/><rect x="109.53" y="146.02" width="6.11" height="6.13" fill="#2b748e"/><rect x="115.34" y="146.02" width="6.11" height="6.13" fill="#277e8e"/><rect x="121.15" y="146.02" width="6.11" height="6.13" fill="#23898e"/><rect x="126.96" y="146.02" width="6.11" height="6.13" fill="#2b748e"/><rect x="132.77" y="146.02" width="6.11" height="6.13" fill="#23898e"/><rect x="138.58" y="146.02" width="6.11" height="6.13" fill="#277e8e"/><rect x="144.39" y="146.02" width="6.11" height="6.13" fill="#277e8e"/><rect x="150.20" y="146.02" width="6.11" height="6.13" fill="#23898e"/><rect x="156.01" y="146.02" width="6.11" height="6.13" fill="#277e8e"/><rect x="161.82" y="146.02" width="6.11" height="6.13" fill="#1fa088"/><rect x="167.63" y="146.02" width="6.11" height="6.13" fill="#2b748e"/><rect x="173.44" y="146.02" width="6.11" height="6.13" fill="#277e8e"/><rect x="179.25" y="146.02" width="6.11" height="6.13" fill="#277e8e"/><rect x="185.06" y="146.02" width="6.11" height="6.13" fill="#31668e"/><rect x="4.95" y="151.85" width="6.11" height="6.13" fill="#2b748e"/><rect x="10.76" y="151.85" width="6.11" height="6.13" fill="#2b748e"/><rect x="16.57" y="151.85" width="6.11" height="6.13" fill="#23898e"/><rect x="22.38" y="151.85" width="6.11" height="6.13" fill="#1fa088"/><rect x="28.19" y="151.85" width="6.11" height="6.13" fill="#22a884"/><rect x="34.00" y="151.85" width="6.11" height="6.13" fill="#22a884"/><rect x="39.81" y="151.85" width="6.11" height="6.13" fill="#000000"/><rect x="45.62" y="151.85" width="6.11" height="6.13" fill="#23898e"/><rect x="51.43" y="151.85" width="6.11" height="6.13" fill="#23898e"/><rect x="57.24" y="151.85" width="6.11" height="6.13" fill="#23898e"/><rect x="63.05" y="151.85" width="6.11" height="6.13" fill="#277e8e"/><rect x="68.86" y="151.85" width="6.11" height="6.13" fill="#23898e"/><rect x="74.67" y="151.85" width="6.11" height="6.13" fill="#277e8e"/><rect x="80.48" y="151.85" width="6.11" height="6.13" fill="#23898e"/><rect x="86.29" y="151.85" width="6.11" height="6.13" fill="#23898e"/><rect x="92.10" y="151.85" width="6.11" height="6.13" fill="#23898e"/><rect x="97.91" y="151.85" width="6.11" height="6.13" fill="#277e8e"/><rect x="103.72" y="151.85" width="6.11" height="6.13" fill="#1fa088"/><rect x="109.53" y="151.85" width="6.11" height="6.13" fill="#23898e"/><rect x="115.34" y="151.85" width="6.11" height="6.13" fill="#277e8e"/><rect x="121.15" y="151.85" width="6.11" height="6.13" fill="#1fa088"/><rect x="126.96" y="151.85" width="6.11" height="6.13" fill="#277e8e"/><rect x="132.77" y="151.85" width="6.11" height="6.13" fill="#2b748e"/><rect x="138.58" y="151.85" width="6.11" height="6.13" fill="#23898e"/><rect x="144.39" y="151.85" width="6.11" height="6.13" fill="#23898e"/><rect x="150.20" y="151.85" width="6.11" height="6.13" fill="#277e8e"/><rect x="156.01" y="151.85" width="6.11" height="6.13" fill="#277e8e"/><rect x="161.82" y="151.85" width="6.11" height="6.13" fill="#277e8e"/><rect x="167.63" y="151.85" width="6.11" height="6.13" fill="#2b748e"/><rect x="173.44" y="151.85" width="6.11" height="6.13" fill="#000000"/><rect x="179.25" y="151.85" width="6.11" height="6.13" fill="#23898e"/><rect x="185.06" y="151.85" width="6.11" height="6.13" fill="#277e8e"/><rect x="4.95" y="157.68" width="6.11" height="6.13" fill="#277e8e"/><rect x="10.76" y="157.68" width="6.11" height="6.13" fill="#2b748e"/><rect x="16.57" y="157.68" width="6.11" height="6.13" fill="#23898e"/><rect x="22.38" y="157.68" width="6.11" height="6.13" fill="#2b748e"/><rect x="28.19" y="157.68" width="6.11" height="6.13" fill="#1fa088"/><rect x="34.00" y="157.68" width="6.11" height="6.13" fill="#22a884"/><rect x="39.81" y="157.68" width="6.11" height="6.13" fill="#000000"/><rect x="45.62" y="157.68" width="6.11" height="6.13" fill="#2fb47c"/><rect x="51.43" y="157.68" width="6.11" height="6.13" fill="#1fa088"/><rect x="57.24" y="157.68" width="6.11" height="6.13" fill="#1fa088"/><rect x="63.05" y="157.68" width="6.11" height="6.13" fill="#1fa088"/><rect x="68.86" y="157.68" width="6.11" height="6.13" fill="#23898e"/><rect x="74.67" y="157.68" width="6.11" height="6.13" fill="#23898e"/><rect x="80.48" y="157.68" width="6.11" height="6.13" fill="#23898e"/><rect x="86.29" y="157.68" width="6.11" height="6.13" fill="#1fa088"/><rect x="92.10" y="157.68" width="6.11" height="6.13" fill="#1fa088"/><rect x="97.91" y="157.68" width="6.11" height="6.13" fill="#23898e"/><rect x="103.72" y="157.68" width="6.11" height="6.13" fill="#22a884"/><rect x="109.53" y="157.68" width="6.11" height="6.13" fill="#1fa088"/><rect x="115.34" y="157.68" width="6.11" height="6.13" fill="#23898e"/><rect x="121.15" y="157.68" width="6.11" height="6.13" fill="#23898e"/><rect x="126.96" y="157.68" width="6.11" height="6.13" fill="#22a884"/><rect x="132.77" y="157.68" width="6.11" height="6.13" fill="#000000"/><rect x="138.58" y="157.68" width="6.11" height="6.13" fill="#23898e"/><rect x="144.39" y="157.68" width="6.11" height="6.13" fill="#23898e"/><rect x="150.20" y="157.68" width="6.11" height="6.13" fill="#277e8e"/><rect x="156.01" y="157.68" width="6.11" height="6.13" fill="#2b748e"/><rect x="161.82" y="157.68" width="6.11" height="6.13" fill="#2b748e"/><rect x="167.63" y="157.68" width="6.11" height="6.13" fill="#277e8e"/><rect x="173.44" y="157.68" width="6.11" height="6.13" fill="#277e8e"/><rect x="179.25" y="157.68" width="6.11" height="6.13" fill="#2b748e"/><rect x="185.06" y="157.68" width="6.11" height="6.13" fill="#000000"/><rect x="4.95" y="163.51" width="6.11" height="6.13" fill="#1fa088"/><rect x="10.76" y="163.51" width="6.11" height="6.13" fill="#23898e"/><rect x="16.57" y="163.51" width="6.11" height="6.13" fill="#277e8e"/><rect x="22.38" y="163.51" width="6.11" height="6.13" fill="#23898e"/><rect x="28.19" y="163.51" width="6.11" height="6.13" fill="#23898e"/><rect x="34.00" y="163.51" width="6.11" height="6.13" fill="#22a884"/><rect x="39.81" y="163.51" width="6.11" height="6.13" fill="#000000"/><rect x="45.62" y="163.51" width="6.11" height="6.13" fill="#2fb47c"/><rect x="51.43" y="163.51" width="6.11" height="6.13" fill="#22a884"/><rect x="57.24" y="163.51" width="6.11" height="6.13" fill="#1fa088"/><rect x="63.05" y="163.51" width="6.11" height="6.13" fill="#22a884"/><rect x="68.86" y="163.51" width="6.11" height="6.13" fill="#22a884"/><rect x="74.67" y="163.51" width="6.11" height="6.13" fill="#22a884"/><rect x="80.48" y="163.51" width="6.11" height="6.13" fill="#1fa088"/><rect x="86.29" y="163.51" width="6.11" height="6.13" fill="#2fb47c"/><rect x="92.10" y="163.51" width="6.11" height="6.13" fill="#1fa088"/><rect x="97.91" y="163.51" width="6.11" height="6.13" fill="#2fb47c"/><rect x="103.72" y="163.51" width="6.11" height="6.13" fill="#23898e"/><rect x="109.53" y="163.51" width="6.11" height="6.13" fill="#23898e"/><rect x="115.34" y="163.51" width="6.11" height="6.13" fill="#23898e"/><rect x="121.15" y="163.51" width="6.11" height="6.13" fill="#1fa088"/><rect x="126.96" y="163.51" width="6.11" height="6.13" fill="#277e8e"/><rect x="132.77" y="163.51" width="6.11" height="6.13" fill="#23898e"/><rect x="138.58" y="163.51" width="6.11" height="6.13" fill="#23898e"/><rect x="144.39" y="163.51" width="6.11" height="6.13" fill="#277e8e"/><rect x="150.20" y="163.51" width="6.11" height="6.13" fill="#277e8e"/><rect x="156.01" y="163.51" width="6.11" height="6.13" fill="#277e8e"/><rect x="161.82" y="163.51" width="6.11" height="6.13" fill="#277e8e"/><rect x="167.63" y="163.51" width="6.11" height="6.13" fill="#277e8e"/><rect x="173.44" y="163.51" width="6.11" height="6.13" fill="#277e8e"/><rect x="179.25" y="163.51" width="6.11" height="6.13" fill="#277e8e"/><rect x="185.06" y="163.51" width="6.11" height="6.13" fill="#000000"/><rect x="4.95" y="169.34" width="6.11" height="6.13" fill="#277e8e"/><rect x="10.76" y="169.34" width="6.11" height="6.13" fill="#2b748e"/><rect x="16.57" y="169.34" width="6.11" height="6.13" fill="#2b748e"/><rect x="22.38" y="169.34" width="6.11" height="6.13" fill="#23898e"/><rect x="28.19" y="169.34" width="6.11" height="6.13" fill="#23898e"/><rect x="34.00" y="169.34" width="6.11" height="6.13" fill="#23898e"/><rect x="39.81" y="169.34" width="6.11" height="6.13" fill="#000000"/><rect x="45.62" y="169.34" width="6.11" height="6.13" fill="#1fa088"/><rect x="51.43" y="169.34" width="6.11" height="6.13" fill="#277e8e"/><rect x="57.24" y="169.34" width="6.11" height="6.13" fill="#1fa088"/><rect x="63.05" y="169.34" width="6.11" height="6.13" fill="#1fa088"/><rect x="68.86" y="169.34" width="6.11" height="6.13" fill="#2fb47c"/><rect x="74.67" y="169.34" width="6.11" height="6.13" fill="#2fb47c"/><rect x="80.48" y="169.34" width="6.11" height="6.13" fill="#22a884"/><rect x="86.29" y="169.34" width="6.11" height="6.13" fill="#1fa088"/><rect x="92.10" y="169.34" width="6.11" height="6.13" fill="#22a884"/><rect x="97.91" y="169.34" width="6.11" height="6.13" fill="#22a884"/><rect x="103.72" y="169.34" width="6.11" height="6.13" fill="#2fb47c"/><rect x="109.53" y="169.34" width="6.11" height="6.13" fill="#23898e"/><rect x="115.34" y="169.34" width="6.11" height="6.13" fill="#23898e"/><rect x="121.15" y="169.34" width="6.11" height="6.13" fill="#277e8e"/><rect x="126.96" y="169.34" width="6.11" height="6.13" fill="#23898e"/><rect x="132.77" y="169.34" width="6.11" height="6.13" fill="#277e8e"/><rect x="138.58" y="169.34" width="6.11" height="6.13" fill="#23898e"/><rect x="144.39" y="169.34" width="6.11" height="6.13" fill="#277e8e"/><rect x="150.20" y="169.34" width="6.11" height="6.13" fill="#277e8e"/><rect x="156.01" y="169.34" width="6.11" height="6.13" fill="#277e8e"/><rect x="161.82" y="169.34" width="6.11" height="6.13" fill="#2b748e"/><rect x="167.63" y="169.34" width="6.11" height="6.13" fill="#2b748e"/><rect x="173.44" y="169.34" width="6.11" height="6.13" fill="#2b748e"/><rect x="179.25" y="169.34" width="6.11" height="6.13" fill="#2b748e"/><rect x="185.06" y="169.34" width="6.11" height="6.13" fill="#3e4c8a"/><rect x="4.95" y="175.17" width="6.11" height="6.13" fill="#277e8e"/><rect x="10.76" y="175.17" width="6.11" height="6.13" fill="#2b748e"/><rect x="16.57" y="175.17" width="6.11" height="6.13" fill="#2b748e"/><rect x="22.38" y="175.17" width="6.11" height="6.13" fill="#277e8e"/><rect x="28.19" y="175.17" width="6.11" height="6.13" fill="#277e8e"/><rect x="34.00" y="175.17" width="6.11" height="6.13" fill="#23898e"/><rect x="39.81" y="175.17" width="6.11" height="6.13" fill="#000000"/><rect x="45.62" y="175.17" width="6.11" height="6.13" fill="#277e8e"/><rect x="51.43" y="175.17" width="6.11" height="6.13" fill="#277e8e"/><rect x="57.24" y="175.17" width="6.11" height="6.13" fill="#23898e"/><rect x="63.05" y="175.17" width="6.11" height="6.13" fill="#23898e"/><rect x="68.86" y="175.17" width="6.11" height="6.13" fill="#23898e"/><rect x="74.67" y="175.17" width="6.11" height="6.13" fill="#23898e"/><rect x="80.48" y="175.17" width="6.11" height="6.13" fill="#277e8e"/><rect x="86.29" y="175.17" width="6.11" height="6.13" fill="#23898e"/><rect x="92.10" y="175.17" width="6.11" height="6.13" fill="#22a884"/><rect x="97.91" y="175.17" width="6.11" height="6.13" fill="#000000"/><rect x="103.72" y="175.17" width="6.11" height="6.13" fill="#1fa088"/><rect x="109.53" y="175.17" width="6.11" height="6.13" fill="#23898e"/><rect x="115.34" y="175.17" width="6.11" height="6.13" fill="#23898e"/><rect x="121.15" y="175.17" width="6.11" height="6.13" fill="#2b748e"/><rect x="126.96" y="175.17" width="6.11" height="6.13" fill="#23898e"/><rect x="132.77" y="175.17" width="6.11" height="6.13" fill="#23898e"/><rect x="138.58" y="175.17" width="6.11" height="6.13" fill="#23898e"/><rect x="144.39" y="175.17" width="6.11" height="6.13" fill="#2b748e"/><rect x="150.20" y="175.17" width="6.11" height="6.13" fill="#2b748e"/><rect x="156.01" y="175.17" width="6.11" height="6.13" fill="#277e8e"/><rect x="161.82" y="175.17" width="6.11" height="6.13" fill="#277e8e"/><rect x="167.63" y="175.17" width="6.11" height="6.13" fill="#2b748e"/><rect x="173.44" y="175.17" width="6.11" height="6.13" fill="#277e8e"/><rect x="179.25" y="175.17" width="6.11" height="6.13" fill="#277e8e"/><rect x="185.06" y="175.17" width="6.11" height="6.13" fill="#2b748e"/><rect x="4.95" y="181.00" width="6.11" height="6.13" fill="#23898e"/><rect x="10.76" y="181.00" width="6.11" height="6.13" fill="#277e8e"/><rect x="16.57" y="181.00" width="6.11" height="6.13" fill="#277e8e"/><rect x="22.38" y="181.00" width="6.11" height="6.13" fill="#2b748e"/><rect x="28.19" y="181.00" width="6.11" height="6.13" fill="#2b748e"/><rect x="34.00" y="181.00" width="6.11" height="6.13" fill="#277e8e"/><rect x="39.81" y="181.00" width="6.11" height="6.13" fill="#000000"/><rect x="45.62" y="181.00" width="6.11" height="6.13" fill="#000000"/><rect x="51.43" y="181.00" width="6.11" height="6.13" fill="#23898e"/><rect x="57.24" y="181.00" width="6.11" height="6.13" fill="#1fa088"/><rect x="63.05" y="181.00" width="6.11" height="6.13" fill="#23898e"/><rect x="68.86" y="181.00" width="6.11" height="6.13" fill="#2b748e"/><rect x="74.67" y="181.00" width="6.11" height="6.13" fill="#23898e"/><rect x="80.48" y="181.00" width="6.11" height="6.13" fill="#23898e"/><rect x="86.29" y="181.00" width="6.11" height="6.13" fill="#1fa088"/><rect x="92.10" y="181.00" width="6.11" height="6.13" fill="#2b748e"/><rect x="97.91" y="181.00" width="6.11" height="6.13" fill="#277e8e"/><rect x="103.72" y="181.00" width="6.11" height="6.13" fill="#277e8e"/><rect x="109.53" y="181.00" width="6.11" height="6.13" fill="#23898e"/><rect x="115.34" y="181.00" width="6.11" height="6.13" fill="#277e8e"/><rect x="121.15" y="181.00" width="6.11" height="6.13" fill="#277e8e"/><rect x="126.96" y="181.00" width="6.11" height="6.13" fill="#277e8e"/><rect x="132.77" y="181.00" width="6.11" height="6.13" fill="#000000"/><rect x="138.58" y="181.00" width="6.11" height="6.13" fill="#277e8e"/><rect x="144.39" y="181.00" width="6.11" height="6.13" fill="#2b748e"/><rect x="150.20" y="181.00" width="6.11" height="6.13" fill="#2b748e"/><rect x="156.01" y="181.00" width="6.11" height="6.13" fill="#277e8e"/><rect x="161.82" y="181.00" width="6.11" height="6.13" fill="#277e8e"/><rect x="167.63" y="181.00" width="6.11" height="6.13" fill="#277e8e"/><rect x="173.44" y="181.00" width="6.11" height="6.13" fill="#277e8e"/><rect x="179.25" y="181.00" width="6.11" height="6.13" fill="#1fa088"/><rect x="185.06" y="181.00" width="6.11" height="6.13" fill="#2b748e"/><rect x="4.95" y="186.83" width="6.11" height="6.13" fill="#1fa088"/><rect x="10.76" y="186.83" width="6.11" height="6.13" fill="#23898e"/><rect x="16.57" y="186.83" width="6.11" height="6.13" fill="#23898e"/><rect x="22.38" y="186.83" width="6.11" height="6.13" fill="#2b748e"/><rect x="28.19" y="186.83" width="6.11" height="6.13" fill="#277e8e"/><rect x="34.00" y="186.83" width="6.11" height="6.13" fill="#277e8e"/><rect x="39.81" y="186.83" width="6.11" height="6.13" fill="#000000"/><rect x="45.62" y="186.83" width="6.11" height="6.13" fill="#2b748e"/><rect x="51.43" y="186.83" width="6.11" height="6.13" fill="#2b748e"/><rect x="57.24" y="186.83" width="6.11" height="6.13" fill="#277e8e"/><rect x="63.05" y="186.83" width="6.11" height="6.13" fill="#23898e"/><rect x="68.86" y="186.83" width="6.11" height="6.13" fill="#2b748e"/><rect x="74.67" y="186.83" width="6.11" height="6.13" fill="#23898e"/><rect x="80.48" y="186.83" width="6.11" height="6.13" fill="#277e8e"/><rect x="86.29" y="186.83" width="6.11" height="6.13" fill="#277e8e"/><rect x="92.10" y="186.83" width="6.11" height="6.13" fill="#2b748e"/><rect x="97.91" y="186.83" width="6.11" height="6.13" fill="#277e8e"/><rect x="103.72" y="186.83" width="6.11" height="6.13" fill="#277e8e"/><rect x="109.53" y="186.83" width="6.11" height="6.13" fill="#23898e"/><rect x="115.34" y="186.83" width="6.11" height="6.13" fill="#277e8e"/><rect x="121.15" y="186.83" width="6.11" height="6.13" fill="#2b748e"/><rect x="126.96" y="186.83" width="6.11" height="6.13" fill="#277e8e"/><rect x="132.77" y="186.83" width="6.11" height="6.13" fill="#277e8e"/><rect x="138.58" y="186.83" width="6.11" height="6.13" fill="#277e8e"/><rect x="144.39" y="186.83" width="6.11" height="6.13" fill="#2b748e"/><rect x="150.20" y="186.83" width="6.11" height="6.13" fill="#277e8e"/><rect x="156.01" y="186.83" width="6.11" height="6.13" fill="#23898e"/><rect x="161.82" y="186.83" width="6.11" height="6.13" fill="#277e8e"/><rect x="167.63" y="186.83" width="6.11" height="6.13" fill="#2b748e"/><rect x="173.44" y="186.83" width="6.11" height="6.13" fill="#000000"/><rect x="179.25" y="186.83" width="6.11" height="6.13" fill="#31668e"/><rect x="185.06" y="186.83" width="6.11" height="6.13" fill="#000000"/><rect x="4.95" y="192.66" width="6.11" height="6.13" fill="#277e8e"/><rect x="10.76" y="192.66" width="6.11" height="6.13" fill="#23898e"/><rect x="16.57" y="192.66" width="6.11" height="6.13" fill="#23898e"/><rect x="22.38" y="192.66" width="6.11" height="6.13" fill="#23898e"/><rect x="28.19" y="192.66" width="6.11" height="6.13" fill="#277e8e"/><rect x="34.00" y="192.66" width="6.11" height="6.13" fill="#2b748e"/><rect x="39.81" y="192.66" width="6.11" height="6.13" fill="#000000"/><rect x="45.62" y="192.66" width="6.11" height="6.13" fill="#2b748e"/><rect x="51.43" y="192.66" width="6.11" height="6.13" fill="#277e8e"/><rect x="57.24" y="192.66" width="6.11" height="6.13" fill="#277e8e"/><rect x="63.05" y="192.66" width="6.11" height="6.13" fill="#277e8e"/><rect x="68.86" y="192.66" width="6.11" height="6.13" fill="#2b748e"/><rect x="74.67" y="192.66" width="6.11" height="6.13" fill="#277e8e"/><rect x="80.48" y="192.66" width="6.11" height="6.13" fill="#277e8e"/><rect x="86.29" y="192.66" width="6.11" height="6.13" fill="#2b748e"/><rect x="92.10" y="192.66" width="6.11" height="6.13" fill="#2b748e"/><rect x="97.91" y="192.66" width="6.11" height="6.13" fill="#277e8e"/><rect x="103.72" y="192.66" width="6.11" height="6.13" fill="#277e8e"/><rect x="109.53" y="192.66" width="6.11" height="6.13" fill="#31668e"/><rect x="115.34" y="192.66" width="6.11" height="6.13" fill="#31668e"/><rect x="121.15" y="192.66" width="6.11" height="6.13" fill="#000000"/><rect x="126.96" y="192.66" width="6.11" height="6.13" fill="#23898e"/><rect x="132.77" y="192.66" width="6.11" height="6.13" fill="#2b748e"/><rect x="138.58" y="192.66" width="6.11" height="6.13" fill="#277e8e"/><rect x="144.39" y="192.66" width="6.11" height="6.13" fill="#23898e"/><rect x="150.20" y="192.66" width="6.11" height="6.13" fill="#277e8e"/><rect x="156.01" y="192.66" width="6.11" height="6.13" fill="#23898e"/><rect x="161.82" y="192.66" width="6.11" height="6.13" fill="#277e8e"/><rect x="167.63" y="192.66" width="6.11" height="6.13" fill="#2b748e"/><rect x="173.44" y="192.66" width="6.11" height="6.13" fill="#277e8e"/><rect x="179.25" y="192.66" width="6.11" height="6.13" fill="#3e4c8a"/><rect x="185.06" y="192.66" width="6.11" height="6.13" fill="#000000"/><rect x="4.95" y="198.49" width="6.11" height="6.13" fill="#277e8e"/><rect x="10.76" y="198.49" width="6.11" height="6.13" fill="#277e8e"/><rect x="16.57" y="198.49" width="6.11" height="6.13" fill="#1fa088"/><rect x="22.38" y="198.49" width="6.11" height="6.13" fill="#1fa088"/><rect x="28.19" y="198.49" width="6.11" height="6.13" fill="#23898e"/><rect x="34.00" y="198.49" width="6.11" height="6.13" fill="#277e8e"/><rect x="39.81" y="198.49" width="6.11" height="6.13" fill="#000000"/><rect x="45.62" y="198.49" width="6.11" height="6.13" fill="#2b748e"/><rect x="51.43" y="198.49" width="6.11" height="6.13" fill="#277e8e"/><rect x="57.24" y="198.49" width="6.11" height="6.13" fill="#2b748e"/><rect x="63.05" y="198.49" width="6.11" height="6.13" fill="#2b748e"/><rect x="68.86" y="198.49" width="6.11" height="6.13" fill="#2b748e"/><rect x="74.67" y="198.49" width="6.11" height="6.13" fill="#23898e"/><rect x="80.48" y="198.49" width="6.11" height="6.13" fill="#277e8e"/><rect x="86.29" y="198.49" width="6.11" height="6.13" fill="#2b748e"/><rect x="92.10" y="198.49" width="6.11" height="6.13" fill="#2b748e"/><rect x="97.91" y="198.49" width="6.11" height="6.13" fill="#277e8e"/><rect x="103.72" y="198.49" width="6.11" height="6.13" fill="#277e8e"/><rect x="109.53" y="198.49" width="6.11" height="6.13" fill="#277e8e"/><rect x="115.34" y="198.49" width="6.11" height="6.13" fill="#277e8e"/><rect x="121.15" y="198.49" width="6.11" height="6.13" fill="#277e8e"/><rect x="126.96" y="198.49" width="6.11" height="6.13" fill="#277e8e"/><rect x="132.77" y="198.49" width="6.11" height="6.13" fill="#2b748e"/><rect x="138.58" y="198.49" width="6.11" height="6.13" fill="#23898e"/><rect x="144.39" y="198.49" width="6.11" height="6.13" fill="#23898e"/><rect x="150.20" y="198.49" width="6.11" height="6.13" fill="#277e8e"/><rect x="156.01" y="198.49" width="6.11" height="6.13" fill="#277e8e"/><rect x="161.82" y="198.49" width="6.11" height="6.13" fill="#23898e"/><rect x="167.63" y="198.49" width="6.11" height="6.13" fill="#2b748e"/><rect x="173.44" y="198.49" width="6.11" height="6.13" fill="#277e8e"/><rect x="179.25" y="198.49" width="6.11" height="6.13" fill="#31668e"/><rect x="185.06" y="198.49" width="6.11" height="6.13" fill="#2b748e"/><rect x="4.95" y="204.32" width="6.11" height="6.13" fill="#277e8e"/><rect x="10.76" y="204.32" width="6.11" height="6.13" fill="#23898e"/><rect x="16.57" y="204.32" width="6.11" height="6.13" fill="#23898e"/><rect x="22.38" y="204.32" width="6.11" height="6.13" fill="#23898e"/><rect x="28.19" y="204.32" width="6.11" height="6.13" fill="#23898e"/><rect x="34.00" y="204.32" width="6.11" height="6.13" fill="#23898e"/><rect x="39.81" y="204.32" width="6.11" height="6.13" fill="#000000"/><rect x="45.62" y="204.32" width="6.11" height="6.13" fill="#277e8e"/><rect x="51.43" y="204.32" width="6.11" height="6.13" fill="#277e8e"/><rect x="57.24" y="204.32" width="6.11" height="6.13" fill="#277e8e"/><rect x="63.05" y="204.32" width="6.11" height="6.13" fill="#2b748e"/><rect x="68.86" y="204.32" width="6.11" height="6.13" fill="#1fa088"/><rect x="74.67" y="204.32" width="6.11" height="6.13" fill="#277e8e"/><rect x="80.48" y="204.32" width="6.11" height="6.13" fill="#31668e"/><rect x="86.29" y="204.32" width="6.11" height="6.13" fill="#277e8e"/><rect x="92.10" y="204.32" width="6.11" height="6.13" fill="#2b748e"/><rect x="97.91" y="204.32" width="6.11" height="6.13" fill="#31668e"/><rect x="103.72" y="204.32" width="6.11" height="6.13" fill="#277e8e"/><rect x="109.53" y="204.32" width="6.11" height="6.13" fill="#23898e"/><rect x="115.34" y="204.32" width="6.11" height="6.13" fill="#277e8e"/><rect x="121.15" y="204.32" width="6.11" height="6.13" fill="#277e8e"/><rect x="126.96" y="204.32" width="6.11" height="6.13" fill="#277e8e"/><rect x="132.77" y="204.32" width="6.11" height="6.13" fill="#277e8e"/><rect x="138.58" y="204.32" width="6.11" height="6.13" fill="#277e8e"/><rect x="144.39" y="204.32" width="6.11" height="6.13" fill="#31668e"/><rect x="150.20" y="204.32" width="6.11" height="6.13" fill="#277e8e"/><rect x="156.01" y="204.32" width="6.11" height="6.13" fill="#31668e"/><rect x="161.82" y="204.32" width="6.11" height="6.13" fill="#2b748e"/><rect x="167.63" y="204.32" width="6.11" height="6.13" fill="#277e8e"/><rect x="173.44" y="204.32" width="6.11" height="6.13" fill="#277e8e"/><rect x="179.25" y="204.32" width="6.11" height="6.13" fill="#277e8e"/><rect x="185.06" y="204.32" width="6.11" height="6.13" fill="#2b748e"/><rect x="4.95" y="210.15" width="6.11" height="6.13" fill="#277e8e"/><rect x="10.76" y="210.15" width="6.11" height="6.13" fill="#23898e"/><rect x="16.57" y="210.15" width="6.11" height="6.13" fill="#23898e"/><rect x="22.38" y="210.15" width="6.11" height="6.13" fill="#23898e"/><rect x="28.19" y="210.15" width="6.11" height="6.13" fill="#23898e"/><rect x="34.00" y="210.15" width="6.11" height="6.13" fill="#277e8e"/><rect x="39.81" y="210.15" width="6.11" height="6.13" fill="#000000"/><rect x="45.62" y="210.15" width="6.11" height="6.13" fill="#277e8e"/><rect x="51.43" y="210.15" width="6.11" height="6.13" fill="#277e8e"/><rect x="57.24" y="210.15" width="6.11" height="6.13" fill="#2b748e"/><rect x="63.05" y="210.15" width="6.11" height="6.13" fill="#277e8e"/><rect x="68.86" y="210.15" width="6.11" height="6.13" fill="#2b748e"/><rect x="74.67" y="210.15" width="6.11" height="6.13" fill="#2b748e"/><rect x="80.48" y="210.15" width="6.11" height="6.13" fill="#23898e"/><rect x="86.29" y="210.15" width="6.11" height="6.13" fill="#277e8e"/><rect x="92.10" y="210.15" width="6.11" height="6.13" fill="#2b748e"/><rect x="97.91" y="210.15" width="6.11" height="6.13" fill="#23898e"/><rect x="103.72" y="210.15" width="6.11" height="6.13" fill="#2b748e"/><rect x="109.53" y="210.15" width="6.11" height="6.13" fill="#277e8e"/><rect x="115.34" y="210.15" width="6.11" height="6.13" fill="#23898e"/><rect x="121.15" y="210.15" width="6.11" height="6.13" fill="#277e8e"/><rect x="126.96" y="210.15" width="6.11" height="6.13" fill="#2b748e"/><rect x="132.77" y="210.15" width="6.11" height="6.13" fill="#23898e"/><rect x="138.58" y="210.15" width="6.11" height="6.13" fill="#2b748e"/><rect x="144.39" y="210.15" width="6.11" height="6.13" fill="#23898e"/><rect x="150.20" y="210.15" width="6.11" height="6.13" fill="#277e8e"/><rect x="156.01" y="210.15" width="6.11" height="6.13" fill="#2b748e"/><rect x="161.82" y="210.15" width="6.11" height="6.13" fill="#2b748e"/><rect x="167.63" y="210.15" width="6.11" height="6.13" fill="#277e8e"/><rect x="173.44" y="210.15" width="6.11" height="6.13" fill="#2b748e"/><rect x="179.25" y="210.15" width="6.11" height="6.13" fill="#2b748e"/><rect x="185.06" y="210.15" width="6.11" height="6.13" fill="#2b748e"/><rect x="4.95" y="215.98" width="6.11" height="6.13" fill="#277e8e"/><rect x="10.76" y="215.98" width="6.11" height="6.13" fill="#23898e"/><rect x="16.57" y="215.98" width="6.11" height="6.13" fill="#277e8e"/><rect x="22.38" y="215.98" width="6.11" height="6.13" fill="#277e8e"/><rect x="28.19" y="215.98" width="6.11" height="6.13" fill="#1fa088"/><rect x="34.00" y="215.98" width="6.11" height="6.13" fill="#1fa088"/><rect x="39.81" y="215.98" width="6.11" height="6.13" fill="#000000"/><rect x="45.62" y="215.98" width="6.11" height="6.13" fill="#1fa088"/><rect x="51.43" y="215.98" width="6.11" height="6.13" fill="#23898e"/><rect x="57.24" y="215.98" width="6.11" height="6.13" fill="#277e8e"/><rect x="63.05" y="215.98" width="6.11" height="6.13" fill="#2b748e"/><rect x="68.86" y="215.98" width="6.11" height="6.13" fill="#277e8e"/><rect x="74.67" y="215.98" width="6.11" height="6.13" fill="#2b748e"/><rect x="80.48" y="215.98" width="6.11" height="6.13" fill="#277e8e"/><rect x="86.29" y="215.98" width="6.11" height="6.13" fill="#277e8e"/><rect x="92.10" y="215.98" width="6.11" height="6.13" fill="#2b748e"/><rect x="97.91" y="215.98" width="6.11" height="6.13" fill="#31668e"/><rect x="103.72" y="215.98" width="6.11" height="6.13" fill="#277e8e"/><rect x="109.53" y="215.98" width="6.11" height="6.13" fill="#277e8e"/><rect x="115.34" y="215.98" width="6.11" height="6.13" fill="#277e8e"/><rect x="121.15" y="215.98" width="6.11" height="6.13" fill="#277e8e"/><rect x="126.96" y="215.98" width="6.11" height="6.13" fill="#2b748e"/><rect x="132.77" y="215.98" width="6.11" height="6.13" fill="#000000"/><rect x="138.58" y="215.98" width="6.11" height="6.13" fill="#2b748e"/><rect x="144.39" y="215.98" width="6.11" height="6.13" fill="#23898e"/><rect x="150.20" y="215.98" width="6.11" height="6.13" fill="#31668e"/><rect x="156.01" y="215.98" width="6.11" height="6.13" fill="#2b748e"/><rect x="161.82" y="215.98" width="6.11" height="6.13" fill="#2b748e"/><rect x="167.63" y="215.98" width="6.11" height="6.13" fill="#31668e"/><rect x="173.44" y="215.98" width="6.11" height="6.13" fill="#31668e"/><rect x="179.25" y="215.98" width="6.11" height="6.13" fill="#2b748e"/><rect x="185.06" y="215.98" width="6.11" height="6.13" fill="#000000"/><rect x="4.95" y="221.81" width="6.11" height="6.13" fill="#2b748e"/><rect x="10.76" y="221.81" width="6.11" height="6.13" fill="#277e8e"/><rect x="16.57" y="221.81" width="6.11" height="6.13" fill="#277e8e"/><rect x="22.38" y="221.81" width="6.11" height="6.13" fill="#2b748e"/><rect x="28.19" y="221.81" width="6.11" height="6.13" fill="#23898e"/><rect x="34.00" y="221.81" width="6.11" height="6.13" fill="#23898e"/><rect x="39.81" y="221.81" width="6.11" height="6.13" fill="#000000"/><rect x="45.62" y="221.81" width="6.11" height="6.13" fill="#2b748e"/><rect x="51.43" y="221.81" width="6.11" height="6.13" fill="#31668e"/><rect x="57.24" y="221.81" width="6.11" height="6.13" fill="#277e8e"/><rect x="63.05" y="221.81" width="6.11" height="6.13" fill="#2b748e"/><rect x="68.86" y="221.81" width="6.11" height="6.13" fill="#1fa088"/><rect x="74.67" y="221.81" width="6.11" height="6.13" fill="#277e8e"/><rect x="80.48" y="221.81" width="6.11" height="6.13" fill="#31668e"/><rect x="86.29" y="221.81" width="6.11" height="6.13" fill="#277e8e"/><rect x="92.10" y="221.81" width="6.11" height="6.13" fill="#31668e"/><rect x="97.91" y="221.81" width="6.11" height="6.13" fill="#2b748e"/><rect x="103.72" y="221.81" width="6.11" height="6.13" fill="#23898e"/><rect x="109.53" y="221.81" width="6.11" height="6.13" fill="#2b748e"/><rect x="115.34" y="221.81" width="6.11" height="6.13" fill="#2b748e"/><rect x="121.15" y="221.81" width="6.11" height="6.13" fill="#2b748e"/><rect x="126.96" y="221.81" width="6.11" height="6.13" fill="#2b748e"/><rect x="132.77" y="221.81" width="6.11" height="6.13" fill="#23898e"/><rect x="138.58" y="221.81" width="6.11" height="6.13" fill="#2b748e"/><rect x="144.39" y="221.81" width="6.11" height="6.13" fill="#2b748e"/><rect x="150.20" y="221.81" width="6.11" height="6.13" fill="#31668e"/><rect x="156.01" y="221.81" width="6.11" height="6.13" fill="#277e8e"/><rect x="161.82" y="221.81" width="6.11" height="6.13" fill="#2b748e"/><rect x="167.63" y="221.81" width="6.11" height="6.13" fill="#31668e"/><rect x="173.44" y="221.81" width="6.11" height="6.13" fill="#3e4c8a"/><rect x="179.25" y="221.81" width="6.11" height="6.13" fill="#2b748e"/><rect x="185.06" y="221.81" width="6.11" height="6.13" fill="#000000"/><rect x="4.95" y="227.64" width="6.11" height="6.13" fill="#277e8e"/><rect x="10.76" y="227.64" width="6.11" height="6.13" fill="#2b748e"/><rect x="16.57" y="227.64" width="6.11" height="6.13" fill="#2b748e"/><rect x="22.38" y="227.64" width="6.11" height="6.13" fill="#277e8e"/><rect x="28.19" y="227.64" width="6.11" height="6.13" fill="#2b748e"/><rect x="34.00" y="227.64" width="6.11" height="6.13" fill="#277e8e"/><rect x="39.81" y="227.64" width="6.11" height="6.13" fill="#000000"/><rect x="45.62" y="227.64" width="6.11" height="6.13" fill="#1fa088"/><rect x="51.43" y="227.64" width="6.11" height="6.13" fill="#277e8e"/><rect x="57.24" y="227.64" width="6.11" height="6.13" fill="#277e8e"/><rect x="63.05" y="227.64" width="6.11" height="6.13" fill="#277e8e"/><rect x="68.86" y="227.64" width="6.11" height="6.13" fill="#277e8e"/><rect x="74.67" y="227.64" width="6.11" height="6.13" fill="#277e8e"/><rect x="80.48" y="227.64" width="6.11" height="6.13" fill="#277e8e"/><rect x="86.29" y="227.64" width="6.11" height="6.13" fill="#277e8e"/><rect x="92.10" y="227.64" width="6.11" height="6.13" fill="#2b748e"/><rect x="97.91" y="227.64" width="6.11" height="6.13" fill="#2b748e"/><rect x="103.72" y="227.64" width="6.11" height="6.13" fill="#2b748e"/><rect x="109.53" y="227.64" width="6.11" height="6.13" fill="#3e4c8a"/><rect x="115.34" y="227.64" width="6.11" height="6.13" fill="#3e4c8a"/><rect x="121.15" y="227.64" width="6.11" height="6.13" fill="#2b748e"/><rect x="126.96" y="227.64" width="6.11" height="6.13" fill="#277e8e"/><rect x="132.77" y="227.64" width="6.11" height="6.13" fill="#2b748e"/><rect x="138.58" y="227.64" width="6.11" height="6.13" fill="#277e8e"/><rect x="144.39" y="227.64" width="6.11" height="6.13" fill="#2b748e"/><rect x="150.20" y="227.64" width="6.11" height="6.13" fill="#2b748e"/><rect x="156.01" y="227.64" width="6.11" height="6.13" fill="#2b748e"/><rect x="161.82" y="227.64" width="6.11" height="6.13" fill="#277e8e"/><rect x="167.63" y="227.64" width="6.11" height="6.13" fill="#277e8e"/><rect x="173.44" y="227.64" width="6.11" height="6.13" fill="#2b748e"/><rect x="179.25" y="227.64" width="6.11" height="6.13" fill="#2b748e"/><rect x="185.06" y="227.64" width="6.11" height="6.13" fill="#31668e"/><rect x="4.95" y="233.47" width="6.11" height="6.13" fill="#31668e"/><rect x="10.76" y="233.47" width="6.11" height="6.13" fill="#23898e"/><rect x="16.57" y="233.47" width="6.11" height="6.13" fill="#31668e"/><rect x="22.38" y="233.47" width="6.11" height="6.13" fill="#000000"/><rect x="28.19" y="233.47" width="6.11" height="6.13" fill="#3e4c8a"/><rect x="34.00" y="233.47" width="6.11" height="6.13" fill="#000000"/><rect x="39.81" y="233.47" width="6.11" height="6.13" fill="#000000"/><rect x="45.62" y="233.47" width="6.11" height="6.13" fill="#000000"/><rect x="51.43" y="233.47" width="6.11" height="6.13" fill="#000000"/><rect x="57.24" y="233.47" width="6.11" height="6.13" fill="#000000"/><rect x="63.05" y="233.47" width="6.11" height="6.13" fill="#31668e"/><rect x="68.86" y="233.47" width="6.11" height="6.13" fill="#000000"/><rect x="74.67" y="233.47" width="6.11" height="6.13" fill="#000000"/><rect x="80.48" y="233.47" width="6.11" height="6.13" fill="#000000"/><rect x="86.29" y="233.47" width="6.11" height="6.13" fill="#000000"/><rect x="92.10" y="233.47" width="6.11" height="6.13" fill="#000000"/><rect x="97.91" y="233.47" width="6.11" height="6.13" fill="#277e8e"/><rect x="103.72" y="233.47" width="6.11" height="6.13" fill="#000000"/><rect x="109.53" y="233.47" width="6.11" height="6.13" fill="#31668e"/><rect x="115.34" y="233.47" width="6.11" height="6.13" fill="#31668e"/><rect x="121.15" y="233.47" width="6.11" height="6.13" fill="#482475"/><rect x="126.96" y="233.47" width="6.11" height="6.13" fill="#2b748e"/><rect x="132.77" y="233.47" width="6.11" height="6.13" fill="#277e8e"/><rect x="138.58" y="233.47" width="6.11" height="6.13" fill="#3e4c8a"/><rect x="144.39" y="233.47" width="6.11" height="6.13" fill="#000000"/><rect x="150.20" y="233.47" width="6.11" height="6.13" fill="#31668e"/><rect x="156.01" y="233.47" width="6.11" height="6.13" fill="#31668e"/><rect x="161.82" y="233.47" width="6.11" height="6.13" fill="#277e8e"/><rect x="167.63" y="233.47" width="6.11" height="6.13" fill="#3e4c8a"/><rect x="173.44" y="233.47" width="6.11" height="6.13" fill="#482475"/><rect x="179.25" y="233.47" width="6.11" height="6.13" fill="#31668e"/><rect x="185.06" y="233.47" width="6.11" height="6.13" fill="#277e8e"/></svg><div class="a" style="left:0px;top:216px;width:4.95px;height:239px;background:#808080"></div><div class="a" style="left:0px;top:216px;width:214px;height:7px;background:#808080"></div><div class="a" style="left:0px;top:459px;width:4.95px;height:238px;background:#808080"></div><div class="a" style="left:0px;top:459px;width:214px;height:6.1px;background:#808080"></div><div class="a" style="left:507px;top:29.5px;width:132px;height:80px;border-top:1px solid #a8a8a8;border-left:1px solid #a8a8a8;border-right:1px solid #fafafa"></div><div class="a" style="left:508.5px;top:31px;width:128px;height:75px;background:#000"></div><div class="a" style="left:508.5px;top:31px;width:128px;height:24px;background:#808080"></div><div class="a" style="left:508.5px;top:52px;width:128px;height:1.3px;background:#00e8ff"></div><svg class="a" style="left:509px;top:55px" width="64" height="50" shape-rendering="crispEdges"><rect x="0.00" y="0.00" width="2.02" height="2.02" fill="#000"/><rect x="1.97" y="0.00" width="2.02" height="2.02" fill="#000"/><rect x="3.94" y="0.00" width="2.02" height="2.02" fill="#000"/><rect x="5.91" y="0.00" width="2.02" height="2.02" fill="#000"/><rect x="7.88" y="0.00" width="2.02" height="2.02" fill="#000"/><rect x="9.85" y="0.00" width="2.02" height="2.02" fill="#000"/><rect x="11.82" y="0.00" width="2.02" height="2.02" fill="#000"/><rect x="13.79" y="0.00" width="2.02" height="2.02" fill="#31668e"/><rect x="15.76" y="0.00" width="2.02" height="2.02" fill="#3e4c8a"/><rect x="17.73" y="0.00" width="2.02" height="2.02" fill="#31668e"/><rect x="19.70" y="0.00" width="2.02" height="2.02" fill="#31668e"/><rect x="21.67" y="0.00" width="2.02" height="2.02" fill="#3e4c8a"/><rect x="23.64" y="0.00" width="2.02" height="2.02" fill="#414487"/><rect x="25.61" y="0.00" width="2.02" height="2.02" fill="#355f8d"/><rect x="27.58" y="0.00" width="2.02" height="2.02" fill="#000"/><rect x="29.55" y="0.00" width="2.02" height="2.02" fill="#000"/><rect x="31.52" y="0.00" width="2.02" height="2.02" fill="#000"/><rect x="33.49" y="0.00" width="2.02" height="2.02" fill="#000"/><rect x="35.46" y="0.00" width="2.02" height="2.02" fill="#000"/><rect x="37.43" y="0.00" width="2.02" height="2.02" fill="#000"/><rect x="39.40" y="0.00" width="2.02" height="2.02" fill="#3e4c8a"/><rect x="41.37" y="0.00" width="2.02" height="2.02" fill="#31668e"/><rect x="43.34" y="0.00" width="2.02" height="2.02" fill="#355f8d"/><rect x="45.31" y="0.00" width="2.02" height="2.02" fill="#3b528b"/><rect x="47.28" y="0.00" width="2.02" height="2.02" fill="#000"/><rect x="49.25" y="0.00" width="2.02" height="2.02" fill="#000"/><rect x="51.22" y="0.00" width="2.02" height="2.02" fill="#000"/><rect x="53.19" y="0.00" width="2.02" height="2.02" fill="#000"/><rect x="55.16" y="0.00" width="2.02" height="2.02" fill="#000"/><rect x="57.13" y="0.00" width="2.02" height="2.02" fill="#000"/><rect x="59.10" y="0.00" width="2.02" height="2.02" fill="#000"/><rect x="61.07" y="0.00" width="2.02" height="2.02" fill="#000"/><rect x="0.00" y="1.97" width="2.02" height="2.02" fill="#31668e"/><rect x="1.97" y="1.97" width="2.02" height="2.02" fill="#2f6c8e"/><rect x="3.94" y="1.97" width="2.02" height="2.02" fill="#355f8d"/><rect x="5.91" y="1.97" width="2.02" height="2.02" fill="#3b528b"/><rect x="7.88" y="1.97" width="2.02" height="2.02" fill="#3e4c8a"/><rect x="9.85" y="1.97" width="2.02" height="2.02" fill="#2a788e"/><rect x="11.82" y="1.97" width="2.02" height="2.02" fill="#000"/><rect x="13.79" y="1.97" width="2.02" height="2.02" fill="#25848e"/><rect x="15.76" y="1.97" width="2.02" height="2.02" fill="#31668e"/><rect x="17.73" y="1.97" width="2.02" height="2.02" fill="#355f8d"/><rect x="19.70" y="1.97" width="2.02" height="2.02" fill="#2a788e"/><rect x="21.67" y="1.97" width="2.02" height="2.02" fill="#3e4c8a"/><rect x="23.64" y="1.97" width="2.02" height="2.02" fill="#3b528b"/><rect x="25.61" y="1.97" width="2.02" height="2.02" fill="#2a788e"/><rect x="27.58" y="1.97" width="2.02" height="2.02" fill="#2a788e"/><rect x="29.55" y="1.97" width="2.02" height="2.02" fill="#414487"/><rect x="31.52" y="1.97" width="2.02" height="2.02" fill="#414487"/><rect x="33.49" y="1.97" width="2.02" height="2.02" fill="#2a788e"/><rect x="35.46" y="1.97" width="2.02" height="2.02" fill="#31668e"/><rect x="37.43" y="1.97" width="2.02" height="2.02" fill="#3b528b"/><rect x="39.40" y="1.97" width="2.02" height="2.02" fill="#31668e"/><rect x="41.37" y="1.97" width="2.02" height="2.02" fill="#414487"/><rect x="43.34" y="1.97" width="2.02" height="2.02" fill="#3e4c8a"/><rect x="45.31" y="1.97" width="2.02" height="2.02" fill="#414487"/><rect x="47.28" y="1.97" width="2.02" height="2.02" fill="#2f6c8e"/><rect x="49.25" y="1.97" width="2.02" height="2.02" fill="#31668e"/><rect x="51.22" y="1.97" width="2.02" height="2.02" fill="#2a788e"/><rect x="53.19" y="1.97" width="2.02" height="2.02" fill="#3b528b"/><rect x="55.16" y="1.97" width="2.02" height="2.02" fill="#31668e"/><rect x="57.13" y="1.97" width="2.02" height="2.02" fill="#2f6c8e"/><rect x="59.10" y="1.97" width="2.02" height="2.02" fill="#25848e"/><rect x="61.07" y="1.97" width="2.02" height="2.02" fill="#3e4c8a"/><rect x="0.00" y="3.94" width="2.02" height="2.02" fill="#3b528b"/><rect x="1.97" y="3.94" width="2.02" height="2.02" fill="#2f6c8e"/><rect x="3.94" y="3.94" width="2.02" height="2.02" fill="#3b528b"/><rect x="5.91" y="3.94" width="2.02" height="2.02" fill="#414487"/><rect x="7.88" y="3.94" width="2.02" height="2.02" fill="#3e4c8a"/><rect x="9.85" y="3.94" width="2.02" height="2.02" fill="#2f6c8e"/><rect x="11.82" y="3.94" width="2.02" height="2.02" fill="#000"/><rect x="13.79" y="3.94" width="2.02" height="2.02" fill="#2a788e"/><rect x="15.76" y="3.94" width="2.02" height="2.02" fill="#3b528b"/><rect x="17.73" y="3.94" width="2.02" height="2.02" fill="#3b528b"/><rect x="19.70" y="3.94" width="2.02" height="2.02" fill="#000"/><rect x="21.67" y="3.94" width="2.02" height="2.02" fill="#25848e"/><rect x="23.64" y="3.94" width="2.02" height="2.02" fill="#3b528b"/><rect x="25.61" y="3.94" width="2.02" height="2.02" fill="#2f6c8e"/><rect x="27.58" y="3.94" width="2.02" height="2.02" fill="#25848e"/><rect x="29.55" y="3.94" width="2.02" height="2.02" fill="#3b528b"/><rect x="31.52" y="3.94" width="2.02" height="2.02" fill="#2a788e"/><rect x="33.49" y="3.94" width="2.02" height="2.02" fill="#2a788e"/><rect x="35.46" y="3.94" width="2.02" height="2.02" fill="#414487"/><rect x="37.43" y="3.94" width="2.02" height="2.02" fill="#414487"/><rect x="39.40" y="3.94" width="2.02" height="2.02" fill="#2a788e"/><rect x="41.37" y="3.94" width="2.02" height="2.02" fill="#31668e"/><rect x="43.34" y="3.94" width="2.02" height="2.02" fill="#25848e"/><rect x="45.31" y="3.94" width="2.02" height="2.02" fill="#25848e"/><rect x="47.28" y="3.94" width="2.02" height="2.02" fill="#25848e"/><rect x="49.25" y="3.94" width="2.02" height="2.02" fill="#3b528b"/><rect x="51.22" y="3.94" width="2.02" height="2.02" fill="#414487"/><rect x="53.19" y="3.94" width="2.02" height="2.02" fill="#2f6c8e"/><rect x="55.16" y="3.94" width="2.02" height="2.02" fill="#3b528b"/><rect x="57.13" y="3.94" width="2.02" height="2.02" fill="#3b528b"/><rect x="59.10" y="3.94" width="2.02" height="2.02" fill="#2f6c8e"/><rect x="61.07" y="3.94" width="2.02" height="2.02" fill="#3b528b"/><rect x="0.00" y="5.91" width="2.02" height="2.02" fill="#2a788e"/><rect x="1.97" y="5.91" width="2.02" height="2.02" fill="#25848e"/><rect x="3.94" y="5.91" width="2.02" height="2.02" fill="#3b528b"/><rect x="5.91" y="5.91" width="2.02" height="2.02" fill="#355f8d"/><rect x="7.88" y="5.91" width="2.02" height="2.02" fill="#000"/><rect x="9.85" y="5.91" width="2.02" height="2.02" fill="#414487"/><rect x="11.82" y="5.91" width="2.02" height="2.02" fill="#000"/><rect x="13.79" y="5.91" width="2.02" height="2.02" fill="#3b528b"/><rect x="15.76" y="5.91" width="2.02" height="2.02" fill="#2a788e"/><rect x="17.73" y="5.91" width="2.02" height="2.02" fill="#2a788e"/><rect x="19.70" y="5.91" width="2.02" height="2.02" fill="#31668e"/><rect x="21.67" y="5.91" width="2.02" height="2.02" fill="#31668e"/><rect x="23.64" y="5.91" width="2.02" height="2.02" fill="#355f8d"/><rect x="25.61" y="5.91" width="2.02" height="2.02" fill="#3e4c8a"/><rect x="27.58" y="5.91" width="2.02" height="2.02" fill="#414487"/><rect x="29.55" y="5.91" width="2.02" height="2.02" fill="#31668e"/><rect x="31.52" y="5.91" width="2.02" height="2.02" fill="#000"/><rect x="33.49" y="5.91" width="2.02" height="2.02" fill="#3e4c8a"/><rect x="35.46" y="5.91" width="2.02" height="2.02" fill="#414487"/><rect x="37.43" y="5.91" width="2.02" height="2.02" fill="#355f8d"/><rect x="39.40" y="5.91" width="2.02" height="2.02" fill="#000"/><rect x="41.37" y="5.91" width="2.02" height="2.02" fill="#25848e"/><rect x="43.34" y="5.91" width="2.02" height="2.02" fill="#000"/><rect x="45.31" y="5.91" width="2.02" height="2.02" fill="#25848e"/><rect x="47.28" y="5.91" width="2.02" height="2.02" fill="#3b528b"/><rect x="49.25" y="5.91" width="2.02" height="2.02" fill="#25848e"/><rect x="51.22" y="5.91" width="2.02" height="2.02" fill="#25848e"/><rect x="53.19" y="5.91" width="2.02" height="2.02" fill="#414487"/><rect x="55.16" y="5.91" width="2.02" height="2.02" fill="#2a788e"/><rect x="57.13" y="5.91" width="2.02" height="2.02" fill="#2f6c8e"/><rect x="59.10" y="5.91" width="2.02" height="2.02" fill="#2f6c8e"/><rect x="61.07" y="5.91" width="2.02" height="2.02" fill="#2a788e"/><rect x="0.00" y="7.88" width="2.02" height="2.02" fill="#414487"/><rect x="1.97" y="7.88" width="2.02" height="2.02" fill="#355f8d"/><rect x="3.94" y="7.88" width="2.02" height="2.02" fill="#25848e"/><rect x="5.91" y="7.88" width="2.02" height="2.02" fill="#3b528b"/><rect x="7.88" y="7.88" width="2.02" height="2.02" fill="#2a788e"/><rect x="9.85" y="7.88" width="2.02" height="2.02" fill="#355f8d"/><rect x="11.82" y="7.88" width="2.02" height="2.02" fill="#000"/><rect x="13.79" y="7.88" width="2.02" height="2.02" fill="#414487"/><rect x="15.76" y="7.88" width="2.02" height="2.02" fill="#31668e"/><rect x="17.73" y="7.88" width="2.02" height="2.02" fill="#2f6c8e"/><rect x="19.70" y="7.88" width="2.02" height="2.02" fill="#2a788e"/><rect x="21.67" y="7.88" width="2.02" height="2.02" fill="#3b528b"/><rect x="23.64" y="7.88" width="2.02" height="2.02" fill="#2f6c8e"/><rect x="25.61" y="7.88" width="2.02" height="2.02" fill="#25848e"/><rect x="27.58" y="7.88" width="2.02" height="2.02" fill="#3b528b"/><rect x="29.55" y="7.88" width="2.02" height="2.02" fill="#3b528b"/><rect x="31.52" y="7.88" width="2.02" height="2.02" fill="#3b528b"/><rect x="33.49" y="7.88" width="2.02" height="2.02" fill="#414487"/><rect x="35.46" y="7.88" width="2.02" height="2.02" fill="#414487"/><rect x="37.43" y="7.88" width="2.02" height="2.02" fill="#2a788e"/><rect x="39.40" y="7.88" width="2.02" height="2.02" fill="#3b528b"/><rect x="41.37" y="7.88" width="2.02" height="2.02" fill="#3b528b"/><rect x="43.34" y="7.88" width="2.02" height="2.02" fill="#31668e"/><rect x="45.31" y="7.88" width="2.02" height="2.02" fill="#355f8d"/><rect x="47.28" y="7.88" width="2.02" height="2.02" fill="#31668e"/><rect x="49.25" y="7.88" width="2.02" height="2.02" fill="#355f8d"/><rect x="51.22" y="7.88" width="2.02" height="2.02" fill="#25848e"/><rect x="53.19" y="7.88" width="2.02" height="2.02" fill="#355f8d"/><rect x="55.16" y="7.88" width="2.02" height="2.02" fill="#000"/><rect x="57.13" y="7.88" width="2.02" height="2.02" fill="#355f8d"/><rect x="59.10" y="7.88" width="2.02" height="2.02" fill="#2f6c8e"/><rect x="61.07" y="7.88" width="2.02" height="2.02" fill="#414487"/><rect x="0.00" y="9.85" width="2.02" height="2.02" fill="#414487"/><rect x="1.97" y="9.85" width="2.02" height="2.02" fill="#414487"/><rect x="3.94" y="9.85" width="2.02" height="2.02" fill="#355f8d"/><rect x="5.91" y="9.85" width="2.02" height="2.02" fill="#3e4c8a"/><rect x="7.88" y="9.85" width="2.02" height="2.02" fill="#414487"/><rect x="9.85" y="9.85" width="2.02" height="2.02" fill="#25848e"/><rect x="11.82" y="9.85" width="2.02" height="2.02" fill="#000"/><rect x="13.79" y="9.85" width="2.02" height="2.02" fill="#31668e"/><rect x="15.76" y="9.85" width="2.02" height="2.02" fill="#000"/><rect x="17.73" y="9.85" width="2.02" height="2.02" fill="#3b528b"/><rect x="19.70" y="9.85" width="2.02" height="2.02" fill="#25848e"/><rect x="21.67" y="9.85" width="2.02" height="2.02" fill="#2a788e"/><rect x="23.64" y="9.85" width="2.02" height="2.02" fill="#000"/><rect x="25.61" y="9.85" width="2.02" height="2.02" fill="#3b528b"/><rect x="27.58" y="9.85" width="2.02" height="2.02" fill="#3b528b"/><rect x="29.55" y="9.85" width="2.02" height="2.02" fill="#2a788e"/><rect x="31.52" y="9.85" width="2.02" height="2.02" fill="#3e4c8a"/><rect x="33.49" y="9.85" width="2.02" height="2.02" fill="#2f6c8e"/><rect x="35.46" y="9.85" width="2.02" height="2.02" fill="#414487"/><rect x="37.43" y="9.85" width="2.02" height="2.02" fill="#25848e"/><rect x="39.40" y="9.85" width="2.02" height="2.02" fill="#000"/><rect x="41.37" y="9.85" width="2.02" height="2.02" fill="#2f6c8e"/><rect x="43.34" y="9.85" width="2.02" height="2.02" fill="#25848e"/><rect x="45.31" y="9.85" width="2.02" height="2.02" fill="#31668e"/><rect x="47.28" y="9.85" width="2.02" height="2.02" fill="#000"/><rect x="49.25" y="9.85" width="2.02" height="2.02" fill="#2f6c8e"/><rect x="51.22" y="9.85" width="2.02" height="2.02" fill="#000"/><rect x="53.19" y="9.85" width="2.02" height="2.02" fill="#000"/><rect x="55.16" y="9.85" width="2.02" height="2.02" fill="#000"/><rect x="57.13" y="9.85" width="2.02" height="2.02" fill="#3e4c8a"/><rect x="59.10" y="9.85" width="2.02" height="2.02" fill="#355f8d"/><rect x="61.07" y="9.85" width="2.02" height="2.02" fill="#3b528b"/><rect x="0.00" y="11.82" width="2.02" height="2.02" fill="#355f8d"/><rect x="1.97" y="11.82" width="2.02" height="2.02" fill="#414487"/><rect x="3.94" y="11.82" width="2.02" height="2.02" fill="#31668e"/><rect x="5.91" y="11.82" width="2.02" height="2.02" fill="#3e4c8a"/><rect x="7.88" y="11.82" width="2.02" height="2.02" fill="#3b528b"/><rect x="9.85" y="11.82" width="2.02" height="2.02" fill="#2f6c8e"/><rect x="11.82" y="11.82" width="2.02" height="2.02" fill="#000"/><rect x="13.79" y="11.82" width="2.02" height="2.02" fill="#414487"/><rect x="15.76" y="11.82" width="2.02" height="2.02" fill="#414487"/><rect x="17.73" y="11.82" width="2.02" height="2.02" fill="#2a788e"/><rect x="19.70" y="11.82" width="2.02" height="2.02" fill="#3b528b"/><rect x="21.67" y="11.82" width="2.02" height="2.02" fill="#2f6c8e"/><rect x="23.64" y="11.82" width="2.02" height="2.02" fill="#25848e"/><rect x="25.61" y="11.82" width="2.02" height="2.02" fill="#31668e"/><rect x="27.58" y="11.82" width="2.02" height="2.02" fill="#414487"/><rect x="29.55" y="11.82" width="2.02" height="2.02" fill="#2a788e"/><rect x="31.52" y="11.82" width="2.02" height="2.02" fill="#2a788e"/><rect x="33.49" y="11.82" width="2.02" height="2.02" fill="#000"/><rect x="35.46" y="11.82" width="2.02" height="2.02" fill="#000"/><rect x="37.43" y="11.82" width="2.02" height="2.02" fill="#355f8d"/><rect x="39.40" y="11.82" width="2.02" height="2.02" fill="#000"/><rect x="41.37" y="11.82" width="2.02" height="2.02" fill="#2f6c8e"/><rect x="43.34" y="11.82" width="2.02" height="2.02" fill="#3b528b"/><rect x="45.31" y="11.82" width="2.02" height="2.02" fill="#3e4c8a"/><rect x="47.28" y="11.82" width="2.02" height="2.02" fill="#355f8d"/><rect x="49.25" y="11.82" width="2.02" height="2.02" fill="#3b528b"/><rect x="51.22" y="11.82" width="2.02" height="2.02" fill="#3b528b"/><rect x="53.19" y="11.82" width="2.02" height="2.02" fill="#355f8d"/><rect x="55.16" y="11.82" width="2.02" height="2.02" fill="#000"/><rect x="57.13" y="11.82" width="2.02" height="2.02" fill="#31668e"/><rect x="59.10" y="11.82" width="2.02" height="2.02" fill="#000"/><rect x="61.07" y="11.82" width="2.02" height="2.02" fill="#3b528b"/><rect x="0.00" y="13.79" width="2.02" height="2.02" fill="#3e4c8a"/><rect x="1.97" y="13.79" width="2.02" height="2.02" fill="#355f8d"/><rect x="3.94" y="13.79" width="2.02" height="2.02" fill="#000"/><rect x="5.91" y="13.79" width="2.02" height="2.02" fill="#2a788e"/><rect x="7.88" y="13.79" width="2.02" height="2.02" fill="#2a788e"/><rect x="9.85" y="13.79" width="2.02" height="2.02" fill="#31668e"/><rect x="11.82" y="13.79" width="2.02" height="2.02" fill="#000"/><rect x="13.79" y="13.79" width="2.02" height="2.02" fill="#3b528b"/><rect x="15.76" y="13.79" width="2.02" height="2.02" fill="#2f6c8e"/><rect x="17.73" y="13.79" width="2.02" height="2.02" fill="#2a788e"/><rect x="19.70" y="13.79" width="2.02" height="2.02" fill="#2a788e"/><rect x="21.67" y="13.79" width="2.02" height="2.02" fill="#3b528b"/><rect x="23.64" y="13.79" width="2.02" height="2.02" fill="#31668e"/><rect x="25.61" y="13.79" width="2.02" height="2.02" fill="#3b528b"/><rect x="27.58" y="13.79" width="2.02" height="2.02" fill="#2f6c8e"/><rect x="29.55" y="13.79" width="2.02" height="2.02" fill="#3b528b"/><rect x="31.52" y="13.79" width="2.02" height="2.02" fill="#355f8d"/><rect x="33.49" y="13.79" width="2.02" height="2.02" fill="#3b528b"/><rect x="35.46" y="13.79" width="2.02" height="2.02" fill="#3b528b"/><rect x="37.43" y="13.79" width="2.02" height="2.02" fill="#31668e"/><rect x="39.40" y="13.79" width="2.02" height="2.02" fill="#3e4c8a"/><rect x="41.37" y="13.79" width="2.02" height="2.02" fill="#3b528b"/><rect x="43.34" y="13.79" width="2.02" height="2.02" fill="#2a788e"/><rect x="45.31" y="13.79" width="2.02" height="2.02" fill="#355f8d"/><rect x="47.28" y="13.79" width="2.02" height="2.02" fill="#000"/><rect x="49.25" y="13.79" width="2.02" height="2.02" fill="#3b528b"/><rect x="51.22" y="13.79" width="2.02" height="2.02" fill="#3b528b"/><rect x="53.19" y="13.79" width="2.02" height="2.02" fill="#3b528b"/><rect x="55.16" y="13.79" width="2.02" height="2.02" fill="#31668e"/><rect x="57.13" y="13.79" width="2.02" height="2.02" fill="#3b528b"/><rect x="59.10" y="13.79" width="2.02" height="2.02" fill="#25848e"/><rect x="61.07" y="13.79" width="2.02" height="2.02" fill="#2a788e"/><rect x="0.00" y="15.76" width="2.02" height="2.02" fill="#31668e"/><rect x="1.97" y="15.76" width="2.02" height="2.02" fill="#2a788e"/><rect x="3.94" y="15.76" width="2.02" height="2.02" fill="#25848e"/><rect x="5.91" y="15.76" width="2.02" height="2.02" fill="#25848e"/><rect x="7.88" y="15.76" width="2.02" height="2.02" fill="#2a788e"/><rect x="9.85" y="15.76" width="2.02" height="2.02" fill="#3b528b"/><rect x="11.82" y="15.76" width="2.02" height="2.02" fill="#000"/><rect x="13.79" y="15.76" width="2.02" height="2.02" fill="#3b528b"/><rect x="15.76" y="15.76" width="2.02" height="2.02" fill="#3b528b"/><rect x="17.73" y="15.76" width="2.02" height="2.02" fill="#3b528b"/><rect x="19.70" y="15.76" width="2.02" height="2.02" fill="#2f6c8e"/><rect x="21.67" y="15.76" width="2.02" height="2.02" fill="#25848e"/><rect x="23.64" y="15.76" width="2.02" height="2.02" fill="#3b528b"/><rect x="25.61" y="15.76" width="2.02" height="2.02" fill="#25848e"/><rect x="27.58" y="15.76" width="2.02" height="2.02" fill="#31668e"/><rect x="29.55" y="15.76" width="2.02" height="2.02" fill="#31668e"/><rect x="31.52" y="15.76" width="2.02" height="2.02" fill="#31668e"/><rect x="33.49" y="15.76" width="2.02" height="2.02" fill="#3e4c8a"/><rect x="35.46" y="15.76" width="2.02" height="2.02" fill="#3b528b"/><rect x="37.43" y="15.76" width="2.02" height="2.02" fill="#3e4c8a"/><rect x="39.40" y="15.76" width="2.02" height="2.02" fill="#3e4c8a"/><rect x="41.37" y="15.76" width="2.02" height="2.02" fill="#000"/><rect x="43.34" y="15.76" width="2.02" height="2.02" fill="#2a788e"/><rect x="45.31" y="15.76" width="2.02" height="2.02" fill="#2f6c8e"/><rect x="47.28" y="15.76" width="2.02" height="2.02" fill="#000"/><rect x="49.25" y="15.76" width="2.02" height="2.02" fill="#3b528b"/><rect x="51.22" y="15.76" width="2.02" height="2.02" fill="#000"/><rect x="53.19" y="15.76" width="2.02" height="2.02" fill="#31668e"/><rect x="55.16" y="15.76" width="2.02" height="2.02" fill="#2a788e"/><rect x="57.13" y="15.76" width="2.02" height="2.02" fill="#414487"/><rect x="59.10" y="15.76" width="2.02" height="2.02" fill="#3b528b"/><rect x="61.07" y="15.76" width="2.02" height="2.02" fill="#000"/><rect x="0.00" y="17.73" width="2.02" height="2.02" fill="#31668e"/><rect x="1.97" y="17.73" width="2.02" height="2.02" fill="#31668e"/><rect x="3.94" y="17.73" width="2.02" height="2.02" fill="#2f6c8e"/><rect x="5.91" y="17.73" width="2.02" height="2.02" fill="#2a788e"/><rect x="7.88" y="17.73" width="2.02" height="2.02" fill="#3b528b"/><rect x="9.85" y="17.73" width="2.02" height="2.02" fill="#2f6c8e"/><rect x="11.82" y="17.73" width="2.02" height="2.02" fill="#000"/><rect x="13.79" y="17.73" width="2.02" height="2.02" fill="#355f8d"/><rect x="15.76" y="17.73" width="2.02" height="2.02" fill="#414487"/><rect x="17.73" y="17.73" width="2.02" height="2.02" fill="#3e4c8a"/><rect x="19.70" y="17.73" width="2.02" height="2.02" fill="#355f8d"/><rect x="21.67" y="17.73" width="2.02" height="2.02" fill="#3b528b"/><rect x="23.64" y="17.73" width="2.02" height="2.02" fill="#31668e"/><rect x="25.61" y="17.73" width="2.02" height="2.02" fill="#31668e"/><rect x="27.58" y="17.73" width="2.02" height="2.02" fill="#000"/><rect x="29.55" y="17.73" width="2.02" height="2.02" fill="#414487"/><rect x="31.52" y="17.73" width="2.02" height="2.02" fill="#3b528b"/><rect x="33.49" y="17.73" width="2.02" height="2.02" fill="#25848e"/><rect x="35.46" y="17.73" width="2.02" height="2.02" fill="#2f6c8e"/><rect x="37.43" y="17.73" width="2.02" height="2.02" fill="#414487"/><rect x="39.40" y="17.73" width="2.02" height="2.02" fill="#25848e"/><rect x="41.37" y="17.73" width="2.02" height="2.02" fill="#414487"/><rect x="43.34" y="17.73" width="2.02" height="2.02" fill="#000"/><rect x="45.31" y="17.73" width="2.02" height="2.02" fill="#414487"/><rect x="47.28" y="17.73" width="2.02" height="2.02" fill="#000"/><rect x="49.25" y="17.73" width="2.02" height="2.02" fill="#25848e"/><rect x="51.22" y="17.73" width="2.02" height="2.02" fill="#414487"/><rect x="53.19" y="17.73" width="2.02" height="2.02" fill="#000"/><rect x="55.16" y="17.73" width="2.02" height="2.02" fill="#3b528b"/><rect x="57.13" y="17.73" width="2.02" height="2.02" fill="#414487"/><rect x="59.10" y="17.73" width="2.02" height="2.02" fill="#355f8d"/><rect x="61.07" y="17.73" width="2.02" height="2.02" fill="#355f8d"/><rect x="0.00" y="19.70" width="2.02" height="2.02" fill="#31668e"/><rect x="1.97" y="19.70" width="2.02" height="2.02" fill="#3b528b"/><rect x="3.94" y="19.70" width="2.02" height="2.02" fill="#2a788e"/><rect x="5.91" y="19.70" width="2.02" height="2.02" fill="#3b528b"/><rect x="7.88" y="19.70" width="2.02" height="2.02" fill="#2f6c8e"/><rect x="9.85" y="19.70" width="2.02" height="2.02" fill="#355f8d"/><rect x="11.82" y="19.70" width="2.02" height="2.02" fill="#000"/><rect x="13.79" y="19.70" width="2.02" height="2.02" fill="#3b528b"/><rect x="15.76" y="19.70" width="2.02" height="2.02" fill="#31668e"/><rect x="17.73" y="19.70" width="2.02" height="2.02" fill="#31668e"/><rect x="19.70" y="19.70" width="2.02" height="2.02" fill="#2f6c8e"/><rect x="21.67" y="19.70" width="2.02" height="2.02" fill="#414487"/><rect x="23.64" y="19.70" width="2.02" height="2.02" fill="#25848e"/><rect x="25.61" y="19.70" width="2.02" height="2.02" fill="#25848e"/><rect x="27.58" y="19.70" width="2.02" height="2.02" fill="#3e4c8a"/><rect x="29.55" y="19.70" width="2.02" height="2.02" fill="#31668e"/><rect x="31.52" y="19.70" width="2.02" height="2.02" fill="#3b528b"/><rect x="33.49" y="19.70" width="2.02" height="2.02" fill="#31668e"/><rect x="35.46" y="19.70" width="2.02" height="2.02" fill="#3b528b"/><rect x="37.43" y="19.70" width="2.02" height="2.02" fill="#3b528b"/><rect x="39.40" y="19.70" width="2.02" height="2.02" fill="#000"/><rect x="41.37" y="19.70" width="2.02" height="2.02" fill="#2a788e"/><rect x="43.34" y="19.70" width="2.02" height="2.02" fill="#2f6c8e"/><rect x="45.31" y="19.70" width="2.02" height="2.02" fill="#2a788e"/><rect x="47.28" y="19.70" width="2.02" height="2.02" fill="#000"/><rect x="49.25" y="19.70" width="2.02" height="2.02" fill="#2f6c8e"/><rect x="51.22" y="19.70" width="2.02" height="2.02" fill="#3b528b"/><rect x="53.19" y="19.70" width="2.02" height="2.02" fill="#000"/><rect x="55.16" y="19.70" width="2.02" height="2.02" fill="#2f6c8e"/><rect x="57.13" y="19.70" width="2.02" height="2.02" fill="#2a788e"/><rect x="59.10" y="19.70" width="2.02" height="2.02" fill="#355f8d"/><rect x="61.07" y="19.70" width="2.02" height="2.02" fill="#25848e"/><rect x="0.00" y="21.67" width="2.02" height="2.02" fill="#31668e"/><rect x="1.97" y="21.67" width="2.02" height="2.02" fill="#414487"/><rect x="3.94" y="21.67" width="2.02" height="2.02" fill="#2a788e"/><rect x="5.91" y="21.67" width="2.02" height="2.02" fill="#2f6c8e"/><rect x="7.88" y="21.67" width="2.02" height="2.02" fill="#414487"/><rect x="9.85" y="21.67" width="2.02" height="2.02" fill="#355f8d"/><rect x="11.82" y="21.67" width="2.02" height="2.02" fill="#000"/><rect x="13.79" y="21.67" width="2.02" height="2.02" fill="#2a788e"/><rect x="15.76" y="21.67" width="2.02" height="2.02" fill="#3b528b"/><rect x="17.73" y="21.67" width="2.02" height="2.02" fill="#31668e"/><rect x="19.70" y="21.67" width="2.02" height="2.02" fill="#3b528b"/><rect x="21.67" y="21.67" width="2.02" height="2.02" fill="#3e4c8a"/><rect x="23.64" y="21.67" width="2.02" height="2.02" fill="#3b528b"/><rect x="25.61" y="21.67" width="2.02" height="2.02" fill="#3b528b"/><rect x="27.58" y="21.67" width="2.02" height="2.02" fill="#414487"/><rect x="29.55" y="21.67" width="2.02" height="2.02" fill="#414487"/><rect x="31.52" y="21.67" width="2.02" height="2.02" fill="#31668e"/><rect x="33.49" y="21.67" width="2.02" height="2.02" fill="#2f6c8e"/><rect x="35.46" y="21.67" width="2.02" height="2.02" fill="#355f8d"/><rect x="37.43" y="21.67" width="2.02" height="2.02" fill="#2a788e"/><rect x="39.40" y="21.67" width="2.02" height="2.02" fill="#31668e"/><rect x="41.37" y="21.67" width="2.02" height="2.02" fill="#3e4c8a"/><rect x="43.34" y="21.67" width="2.02" height="2.02" fill="#2a788e"/><rect x="45.31" y="21.67" width="2.02" height="2.02" fill="#355f8d"/><rect x="47.28" y="21.67" width="2.02" height="2.02" fill="#000"/><rect x="49.25" y="21.67" width="2.02" height="2.02" fill="#414487"/><rect x="51.22" y="21.67" width="2.02" height="2.02" fill="#2f6c8e"/><rect x="53.19" y="21.67" width="2.02" height="2.02" fill="#000"/><rect x="55.16" y="21.67" width="2.02" height="2.02" fill="#3b528b"/><rect x="57.13" y="21.67" width="2.02" height="2.02" fill="#3e4c8a"/><rect x="59.10" y="21.67" width="2.02" height="2.02" fill="#3e4c8a"/><rect x="61.07" y="21.67" width="2.02" height="2.02" fill="#000"/><rect x="0.00" y="23.64" width="2.02" height="2.02" fill="#3e4c8a"/><rect x="1.97" y="23.64" width="2.02" height="2.02" fill="#355f8d"/><rect x="3.94" y="23.64" width="2.02" height="2.02" fill="#25848e"/><rect x="5.91" y="23.64" width="2.02" height="2.02" fill="#414487"/><rect x="7.88" y="23.64" width="2.02" height="2.02" fill="#3b528b"/><rect x="9.85" y="23.64" width="2.02" height="2.02" fill="#25848e"/><rect x="11.82" y="23.64" width="2.02" height="2.02" fill="#000"/><rect x="13.79" y="23.64" width="2.02" height="2.02" fill="#25848e"/><rect x="15.76" y="23.64" width="2.02" height="2.02" fill="#355f8d"/><rect x="17.73" y="23.64" width="2.02" height="2.02" fill="#31668e"/><rect x="19.70" y="23.64" width="2.02" height="2.02" fill="#31668e"/><rect x="21.67" y="23.64" width="2.02" height="2.02" fill="#414487"/><rect x="23.64" y="23.64" width="2.02" height="2.02" fill="#2a788e"/><rect x="25.61" y="23.64" width="2.02" height="2.02" fill="#25848e"/><rect x="27.58" y="23.64" width="2.02" height="2.02" fill="#3e4c8a"/><rect x="29.55" y="23.64" width="2.02" height="2.02" fill="#3e4c8a"/><rect x="31.52" y="23.64" width="2.02" height="2.02" fill="#3b528b"/><rect x="33.49" y="23.64" width="2.02" height="2.02" fill="#31668e"/><rect x="35.46" y="23.64" width="2.02" height="2.02" fill="#3b528b"/><rect x="37.43" y="23.64" width="2.02" height="2.02" fill="#414487"/><rect x="39.40" y="23.64" width="2.02" height="2.02" fill="#3b528b"/><rect x="41.37" y="23.64" width="2.02" height="2.02" fill="#3b528b"/><rect x="43.34" y="23.64" width="2.02" height="2.02" fill="#000"/><rect x="45.31" y="23.64" width="2.02" height="2.02" fill="#414487"/><rect x="47.28" y="23.64" width="2.02" height="2.02" fill="#000"/><rect x="49.25" y="23.64" width="2.02" height="2.02" fill="#000"/><rect x="51.22" y="23.64" width="2.02" height="2.02" fill="#414487"/><rect x="53.19" y="23.64" width="2.02" height="2.02" fill="#000"/><rect x="55.16" y="23.64" width="2.02" height="2.02" fill="#000"/><rect x="57.13" y="23.64" width="2.02" height="2.02" fill="#25848e"/><rect x="59.10" y="23.64" width="2.02" height="2.02" fill="#3b528b"/><rect x="61.07" y="23.64" width="2.02" height="2.02" fill="#2f6c8e"/><rect x="0.00" y="25.61" width="2.02" height="2.02" fill="#3e4c8a"/><rect x="1.97" y="25.61" width="2.02" height="2.02" fill="#3b528b"/><rect x="3.94" y="25.61" width="2.02" height="2.02" fill="#2f6c8e"/><rect x="5.91" y="25.61" width="2.02" height="2.02" fill="#2a788e"/><rect x="7.88" y="25.61" width="2.02" height="2.02" fill="#3b528b"/><rect x="9.85" y="25.61" width="2.02" height="2.02" fill="#3e4c8a"/><rect x="11.82" y="25.61" width="2.02" height="2.02" fill="#000"/><rect x="13.79" y="25.61" width="2.02" height="2.02" fill="#3b528b"/><rect x="15.76" y="25.61" width="2.02" height="2.02" fill="#2a788e"/><rect x="17.73" y="25.61" width="2.02" height="2.02" fill="#31668e"/><rect x="19.70" y="25.61" width="2.02" height="2.02" fill="#3b528b"/><rect x="21.67" y="25.61" width="2.02" height="2.02" fill="#3e4c8a"/><rect x="23.64" y="25.61" width="2.02" height="2.02" fill="#1fa088"/><rect x="25.61" y="25.61" width="2.02" height="2.02" fill="#21918c"/><rect x="27.58" y="25.61" width="2.02" height="2.02" fill="#22a884"/><rect x="29.55" y="25.61" width="2.02" height="2.02" fill="#3e4c8a"/><rect x="31.52" y="25.61" width="2.02" height="2.02" fill="#3b528b"/><rect x="33.49" y="25.61" width="2.02" height="2.02" fill="#355f8d"/><rect x="35.46" y="25.61" width="2.02" height="2.02" fill="#31668e"/><rect x="37.43" y="25.61" width="2.02" height="2.02" fill="#355f8d"/><rect x="39.40" y="25.61" width="2.02" height="2.02" fill="#3e4c8a"/><rect x="41.37" y="25.61" width="2.02" height="2.02" fill="#3e4c8a"/><rect x="43.34" y="25.61" width="2.02" height="2.02" fill="#31668e"/><rect x="45.31" y="25.61" width="2.02" height="2.02" fill="#31668e"/><rect x="47.28" y="25.61" width="2.02" height="2.02" fill="#000"/><rect x="49.25" y="25.61" width="2.02" height="2.02" fill="#3b528b"/><rect x="51.22" y="25.61" width="2.02" height="2.02" fill="#414487"/><rect x="53.19" y="25.61" width="2.02" height="2.02" fill="#000"/><rect x="55.16" y="25.61" width="2.02" height="2.02" fill="#31668e"/><rect x="57.13" y="25.61" width="2.02" height="2.02" fill="#3e4c8a"/><rect x="59.10" y="25.61" width="2.02" height="2.02" fill="#3e4c8a"/><rect x="61.07" y="25.61" width="2.02" height="2.02" fill="#000"/><rect x="0.00" y="27.58" width="2.02" height="2.02" fill="#2f6c8e"/><rect x="1.97" y="27.58" width="2.02" height="2.02" fill="#3e4c8a"/><rect x="3.94" y="27.58" width="2.02" height="2.02" fill="#355f8d"/><rect x="5.91" y="27.58" width="2.02" height="2.02" fill="#3e4c8a"/><rect x="7.88" y="27.58" width="2.02" height="2.02" fill="#3e4c8a"/><rect x="9.85" y="27.58" width="2.02" height="2.02" fill="#3e4c8a"/><rect x="11.82" y="27.58" width="2.02" height="2.02" fill="#000"/><rect x="13.79" y="27.58" width="2.02" height="2.02" fill="#2f6c8e"/><rect x="15.76" y="27.58" width="2.02" height="2.02" fill="#2f6c8e"/><rect x="17.73" y="27.58" width="2.02" height="2.02" fill="#25848e"/><rect x="19.70" y="27.58" width="2.02" height="2.02" fill="#414487"/><rect x="21.67" y="27.58" width="2.02" height="2.02" fill="#2f6c8e"/><rect x="23.64" y="27.58" width="2.02" height="2.02" fill="#1fa088"/><rect x="25.61" y="27.58" width="2.02" height="2.02" fill="#21918c"/><rect x="27.58" y="27.58" width="2.02" height="2.02" fill="#1fa088"/><rect x="29.55" y="27.58" width="2.02" height="2.02" fill="#000"/><rect x="31.52" y="27.58" width="2.02" height="2.02" fill="#2a788e"/><rect x="33.49" y="27.58" width="2.02" height="2.02" fill="#3e4c8a"/><rect x="35.46" y="27.58" width="2.02" height="2.02" fill="#2a788e"/><rect x="37.43" y="27.58" width="2.02" height="2.02" fill="#3e4c8a"/><rect x="39.40" y="27.58" width="2.02" height="2.02" fill="#25848e"/><rect x="41.37" y="27.58" width="2.02" height="2.02" fill="#3e4c8a"/><rect x="43.34" y="27.58" width="2.02" height="2.02" fill="#000"/><rect x="45.31" y="27.58" width="2.02" height="2.02" fill="#3b528b"/><rect x="47.28" y="27.58" width="2.02" height="2.02" fill="#31668e"/><rect x="49.25" y="27.58" width="2.02" height="2.02" fill="#3b528b"/><rect x="51.22" y="27.58" width="2.02" height="2.02" fill="#355f8d"/><rect x="53.19" y="27.58" width="2.02" height="2.02" fill="#3b528b"/><rect x="55.16" y="27.58" width="2.02" height="2.02" fill="#3e4c8a"/><rect x="57.13" y="27.58" width="2.02" height="2.02" fill="#31668e"/><rect x="59.10" y="27.58" width="2.02" height="2.02" fill="#25848e"/><rect x="61.07" y="27.58" width="2.02" height="2.02" fill="#25848e"/><rect x="0.00" y="29.55" width="2.02" height="2.02" fill="#000"/><rect x="1.97" y="29.55" width="2.02" height="2.02" fill="#2f6c8e"/><rect x="3.94" y="29.55" width="2.02" height="2.02" fill="#414487"/><rect x="5.91" y="29.55" width="2.02" height="2.02" fill="#31668e"/><rect x="7.88" y="29.55" width="2.02" height="2.02" fill="#31668e"/><rect x="9.85" y="29.55" width="2.02" height="2.02" fill="#355f8d"/><rect x="11.82" y="29.55" width="2.02" height="2.02" fill="#000"/><rect x="13.79" y="29.55" width="2.02" height="2.02" fill="#3b528b"/><rect x="15.76" y="29.55" width="2.02" height="2.02" fill="#25848e"/><rect x="17.73" y="29.55" width="2.02" height="2.02" fill="#000"/><rect x="19.70" y="29.55" width="2.02" height="2.02" fill="#000"/><rect x="21.67" y="29.55" width="2.02" height="2.02" fill="#21918c"/><rect x="23.64" y="29.55" width="2.02" height="2.02" fill="#21918c"/><rect x="25.61" y="29.55" width="2.02" height="2.02" fill="#000"/><rect x="27.58" y="29.55" width="2.02" height="2.02" fill="#21918c"/><rect x="29.55" y="29.55" width="2.02" height="2.02" fill="#22a884"/><rect x="31.52" y="29.55" width="2.02" height="2.02" fill="#2a788e"/><rect x="33.49" y="29.55" width="2.02" height="2.02" fill="#2f6c8e"/><rect x="35.46" y="29.55" width="2.02" height="2.02" fill="#22a884"/><rect x="37.43" y="29.55" width="2.02" height="2.02" fill="#21918c"/><rect x="39.40" y="29.55" width="2.02" height="2.02" fill="#22a884"/><rect x="41.37" y="29.55" width="2.02" height="2.02" fill="#3e4c8a"/><rect x="43.34" y="29.55" width="2.02" height="2.02" fill="#000"/><rect x="45.31" y="29.55" width="2.02" height="2.02" fill="#25848e"/><rect x="47.28" y="29.55" width="2.02" height="2.02" fill="#2a788e"/><rect x="49.25" y="29.55" width="2.02" height="2.02" fill="#25848e"/><rect x="51.22" y="29.55" width="2.02" height="2.02" fill="#25848e"/><rect x="53.19" y="29.55" width="2.02" height="2.02" fill="#3e4c8a"/><rect x="55.16" y="29.55" width="2.02" height="2.02" fill="#355f8d"/><rect x="57.13" y="29.55" width="2.02" height="2.02" fill="#3e4c8a"/><rect x="59.10" y="29.55" width="2.02" height="2.02" fill="#000"/><rect x="61.07" y="29.55" width="2.02" height="2.02" fill="#414487"/><rect x="0.00" y="31.52" width="2.02" height="2.02" fill="#3e4c8a"/><rect x="1.97" y="31.52" width="2.02" height="2.02" fill="#414487"/><rect x="3.94" y="31.52" width="2.02" height="2.02" fill="#3e4c8a"/><rect x="5.91" y="31.52" width="2.02" height="2.02" fill="#414487"/><rect x="7.88" y="31.52" width="2.02" height="2.02" fill="#3e4c8a"/><rect x="9.85" y="31.52" width="2.02" height="2.02" fill="#355f8d"/><rect x="11.82" y="31.52" width="2.02" height="2.02" fill="#000"/><rect x="13.79" y="31.52" width="2.02" height="2.02" fill="#414487"/><rect x="15.76" y="31.52" width="2.02" height="2.02" fill="#3b528b"/><rect x="17.73" y="31.52" width="2.02" height="2.02" fill="#355f8d"/><rect x="19.70" y="31.52" width="2.02" height="2.02" fill="#3b528b"/><rect x="21.67" y="31.52" width="2.02" height="2.02" fill="#3b528b"/><rect x="23.64" y="31.52" width="2.02" height="2.02" fill="#22a884"/><rect x="25.61" y="31.52" width="2.02" height="2.02" fill="#22a884"/><rect x="27.58" y="31.52" width="2.02" height="2.02" fill="#44bf70"/><rect x="29.55" y="31.52" width="2.02" height="2.02" fill="#25848e"/><rect x="31.52" y="31.52" width="2.02" height="2.02" fill="#3b528b"/><rect x="33.49" y="31.52" width="2.02" height="2.02" fill="#25848e"/><rect x="35.46" y="31.52" width="2.02" height="2.02" fill="#22a884"/><rect x="37.43" y="31.52" width="2.02" height="2.02" fill="#21918c"/><rect x="39.40" y="31.52" width="2.02" height="2.02" fill="#44bf70"/><rect x="41.37" y="31.52" width="2.02" height="2.02" fill="#44bf70"/><rect x="43.34" y="31.52" width="2.02" height="2.02" fill="#3e4c8a"/><rect x="45.31" y="31.52" width="2.02" height="2.02" fill="#414487"/><rect x="47.28" y="31.52" width="2.02" height="2.02" fill="#3b528b"/><rect x="49.25" y="31.52" width="2.02" height="2.02" fill="#31668e"/><rect x="51.22" y="31.52" width="2.02" height="2.02" fill="#3b528b"/><rect x="53.19" y="31.52" width="2.02" height="2.02" fill="#2a788e"/><rect x="55.16" y="31.52" width="2.02" height="2.02" fill="#2a788e"/><rect x="57.13" y="31.52" width="2.02" height="2.02" fill="#3e4c8a"/><rect x="59.10" y="31.52" width="2.02" height="2.02" fill="#3e4c8a"/><rect x="61.07" y="31.52" width="2.02" height="2.02" fill="#31668e"/><rect x="0.00" y="33.49" width="2.02" height="2.02" fill="#21918c"/><rect x="1.97" y="33.49" width="2.02" height="2.02" fill="#21918c"/><rect x="3.94" y="33.49" width="2.02" height="2.02" fill="#2f6c8e"/><rect x="5.91" y="33.49" width="2.02" height="2.02" fill="#3b528b"/><rect x="7.88" y="33.49" width="2.02" height="2.02" fill="#355f8d"/><rect x="9.85" y="33.49" width="2.02" height="2.02" fill="#31668e"/><rect x="11.82" y="33.49" width="2.02" height="2.02" fill="#000"/><rect x="13.79" y="33.49" width="2.02" height="2.02" fill="#3b528b"/><rect x="15.76" y="33.49" width="2.02" height="2.02" fill="#3b528b"/><rect x="17.73" y="33.49" width="2.02" height="2.02" fill="#3b528b"/><rect x="19.70" y="33.49" width="2.02" height="2.02" fill="#25848e"/><rect x="21.67" y="33.49" width="2.02" height="2.02" fill="#31668e"/><rect x="23.64" y="33.49" width="2.02" height="2.02" fill="#25848e"/><rect x="25.61" y="33.49" width="2.02" height="2.02" fill="#3e4c8a"/><rect x="27.58" y="33.49" width="2.02" height="2.02" fill="#3b528b"/><rect x="29.55" y="33.49" width="2.02" height="2.02" fill="#25848e"/><rect x="31.52" y="33.49" width="2.02" height="2.02" fill="#414487"/><rect x="33.49" y="33.49" width="2.02" height="2.02" fill="#21918c"/><rect x="35.46" y="33.49" width="2.02" height="2.02" fill="#1fa088"/><rect x="37.43" y="33.49" width="2.02" height="2.02" fill="#1fa088"/><rect x="39.40" y="33.49" width="2.02" height="2.02" fill="#21918c"/><rect x="41.37" y="33.49" width="2.02" height="2.02" fill="#44bf70"/><rect x="43.34" y="33.49" width="2.02" height="2.02" fill="#3b528b"/><rect x="45.31" y="33.49" width="2.02" height="2.02" fill="#25848e"/><rect x="47.28" y="33.49" width="2.02" height="2.02" fill="#414487"/><rect x="49.25" y="33.49" width="2.02" height="2.02" fill="#3e4c8a"/><rect x="51.22" y="33.49" width="2.02" height="2.02" fill="#3b528b"/><rect x="53.19" y="33.49" width="2.02" height="2.02" fill="#2f6c8e"/><rect x="55.16" y="33.49" width="2.02" height="2.02" fill="#2f6c8e"/><rect x="57.13" y="33.49" width="2.02" height="2.02" fill="#3b528b"/><rect x="59.10" y="33.49" width="2.02" height="2.02" fill="#355f8d"/><rect x="61.07" y="33.49" width="2.02" height="2.02" fill="#000"/><rect x="0.00" y="35.46" width="2.02" height="2.02" fill="#22a884"/><rect x="1.97" y="35.46" width="2.02" height="2.02" fill="#3e4c8a"/><rect x="3.94" y="35.46" width="2.02" height="2.02" fill="#25848e"/><rect x="5.91" y="35.46" width="2.02" height="2.02" fill="#21918c"/><rect x="7.88" y="35.46" width="2.02" height="2.02" fill="#3b528b"/><rect x="9.85" y="35.46" width="2.02" height="2.02" fill="#2f6c8e"/><rect x="11.82" y="35.46" width="2.02" height="2.02" fill="#000"/><rect x="13.79" y="35.46" width="2.02" height="2.02" fill="#31668e"/><rect x="15.76" y="35.46" width="2.02" height="2.02" fill="#3b528b"/><rect x="17.73" y="35.46" width="2.02" height="2.02" fill="#2a788e"/><rect x="19.70" y="35.46" width="2.02" height="2.02" fill="#3b528b"/><rect x="21.67" y="35.46" width="2.02" height="2.02" fill="#2a788e"/><rect x="23.64" y="35.46" width="2.02" height="2.02" fill="#414487"/><rect x="25.61" y="35.46" width="2.02" height="2.02" fill="#2f6c8e"/><rect x="27.58" y="35.46" width="2.02" height="2.02" fill="#25848e"/><rect x="29.55" y="35.46" width="2.02" height="2.02" fill="#25848e"/><rect x="31.52" y="35.46" width="2.02" height="2.02" fill="#3e4c8a"/><rect x="33.49" y="35.46" width="2.02" height="2.02" fill="#1fa088"/><rect x="35.46" y="35.46" width="2.02" height="2.02" fill="#21918c"/><rect x="37.43" y="35.46" width="2.02" height="2.02" fill="#1fa088"/><rect x="39.40" y="35.46" width="2.02" height="2.02" fill="#22a884"/><rect x="41.37" y="35.46" width="2.02" height="2.02" fill="#000"/><rect x="43.34" y="35.46" width="2.02" height="2.02" fill="#25848e"/><rect x="45.31" y="35.46" width="2.02" height="2.02" fill="#2a788e"/><rect x="47.28" y="35.46" width="2.02" height="2.02" fill="#3b528b"/><rect x="49.25" y="35.46" width="2.02" height="2.02" fill="#2f6c8e"/><rect x="51.22" y="35.46" width="2.02" height="2.02" fill="#2f6c8e"/><rect x="53.19" y="35.46" width="2.02" height="2.02" fill="#2f6c8e"/><rect x="55.16" y="35.46" width="2.02" height="2.02" fill="#3b528b"/><rect x="57.13" y="35.46" width="2.02" height="2.02" fill="#3e4c8a"/><rect x="59.10" y="35.46" width="2.02" height="2.02" fill="#3e4c8a"/><rect x="61.07" y="35.46" width="2.02" height="2.02" fill="#3e4c8a"/><rect x="0.00" y="37.43" width="2.02" height="2.02" fill="#000"/><rect x="1.97" y="37.43" width="2.02" height="2.02" fill="#25848e"/><rect x="3.94" y="37.43" width="2.02" height="2.02" fill="#3b528b"/><rect x="5.91" y="37.43" width="2.02" height="2.02" fill="#3b528b"/><rect x="7.88" y="37.43" width="2.02" height="2.02" fill="#21918c"/><rect x="9.85" y="37.43" width="2.02" height="2.02" fill="#25848e"/><rect x="11.82" y="37.43" width="2.02" height="2.02" fill="#000"/><rect x="13.79" y="37.43" width="2.02" height="2.02" fill="#31668e"/><rect x="15.76" y="37.43" width="2.02" height="2.02" fill="#355f8d"/><rect x="17.73" y="37.43" width="2.02" height="2.02" fill="#31668e"/><rect x="19.70" y="37.43" width="2.02" height="2.02" fill="#3e4c8a"/><rect x="21.67" y="37.43" width="2.02" height="2.02" fill="#25848e"/><rect x="23.64" y="37.43" width="2.02" height="2.02" fill="#25848e"/><rect x="25.61" y="37.43" width="2.02" height="2.02" fill="#000"/><rect x="27.58" y="37.43" width="2.02" height="2.02" fill="#2fb47c"/><rect x="29.55" y="37.43" width="2.02" height="2.02" fill="#31668e"/><rect x="31.52" y="37.43" width="2.02" height="2.02" fill="#000"/><rect x="33.49" y="37.43" width="2.02" height="2.02" fill="#3e4c8a"/><rect x="35.46" y="37.43" width="2.02" height="2.02" fill="#000"/><rect x="37.43" y="37.43" width="2.02" height="2.02" fill="#22a884"/><rect x="39.40" y="37.43" width="2.02" height="2.02" fill="#1fa088"/><rect x="41.37" y="37.43" width="2.02" height="2.02" fill="#2a788e"/><rect x="43.34" y="37.43" width="2.02" height="2.02" fill="#000"/><rect x="45.31" y="37.43" width="2.02" height="2.02" fill="#000"/><rect x="47.28" y="37.43" width="2.02" height="2.02" fill="#000"/><rect x="49.25" y="37.43" width="2.02" height="2.02" fill="#3b528b"/><rect x="51.22" y="37.43" width="2.02" height="2.02" fill="#25848e"/><rect x="53.19" y="37.43" width="2.02" height="2.02" fill="#2a788e"/><rect x="55.16" y="37.43" width="2.02" height="2.02" fill="#3b528b"/><rect x="57.13" y="37.43" width="2.02" height="2.02" fill="#3b528b"/><rect x="59.10" y="37.43" width="2.02" height="2.02" fill="#414487"/><rect x="61.07" y="37.43" width="2.02" height="2.02" fill="#000"/><rect x="0.00" y="39.40" width="2.02" height="2.02" fill="#25848e"/><rect x="1.97" y="39.40" width="2.02" height="2.02" fill="#2f6c8e"/><rect x="3.94" y="39.40" width="2.02" height="2.02" fill="#21918c"/><rect x="5.91" y="39.40" width="2.02" height="2.02" fill="#21918c"/><rect x="7.88" y="39.40" width="2.02" height="2.02" fill="#22a884"/><rect x="9.85" y="39.40" width="2.02" height="2.02" fill="#31668e"/><rect x="11.82" y="39.40" width="2.02" height="2.02" fill="#000"/><rect x="13.79" y="39.40" width="2.02" height="2.02" fill="#3b528b"/><rect x="15.76" y="39.40" width="2.02" height="2.02" fill="#414487"/><rect x="17.73" y="39.40" width="2.02" height="2.02" fill="#2a788e"/><rect x="19.70" y="39.40" width="2.02" height="2.02" fill="#21918c"/><rect x="21.67" y="39.40" width="2.02" height="2.02" fill="#25848e"/><rect x="23.64" y="39.40" width="2.02" height="2.02" fill="#31668e"/><rect x="25.61" y="39.40" width="2.02" height="2.02" fill="#22a884"/><rect x="27.58" y="39.40" width="2.02" height="2.02" fill="#2f6c8e"/><rect x="29.55" y="39.40" width="2.02" height="2.02" fill="#2fb47c"/><rect x="31.52" y="39.40" width="2.02" height="2.02" fill="#3e4c8a"/><rect x="33.49" y="39.40" width="2.02" height="2.02" fill="#22a884"/><rect x="35.46" y="39.40" width="2.02" height="2.02" fill="#2f6c8e"/><rect x="37.43" y="39.40" width="2.02" height="2.02" fill="#414487"/><rect x="39.40" y="39.40" width="2.02" height="2.02" fill="#3e4c8a"/><rect x="41.37" y="39.40" width="2.02" height="2.02" fill="#414487"/><rect x="43.34" y="39.40" width="2.02" height="2.02" fill="#2a788e"/><rect x="45.31" y="39.40" width="2.02" height="2.02" fill="#2a788e"/><rect x="47.28" y="39.40" width="2.02" height="2.02" fill="#2a788e"/><rect x="49.25" y="39.40" width="2.02" height="2.02" fill="#2f6c8e"/><rect x="51.22" y="39.40" width="2.02" height="2.02" fill="#2f6c8e"/><rect x="53.19" y="39.40" width="2.02" height="2.02" fill="#25848e"/><rect x="55.16" y="39.40" width="2.02" height="2.02" fill="#2a788e"/><rect x="57.13" y="39.40" width="2.02" height="2.02" fill="#2a788e"/><rect x="59.10" y="39.40" width="2.02" height="2.02" fill="#3b528b"/><rect x="61.07" y="39.40" width="2.02" height="2.02" fill="#414487"/><rect x="0.00" y="41.37" width="2.02" height="2.02" fill="#21918c"/><rect x="1.97" y="41.37" width="2.02" height="2.02" fill="#355f8d"/><rect x="3.94" y="41.37" width="2.02" height="2.02" fill="#22a884"/><rect x="5.91" y="41.37" width="2.02" height="2.02" fill="#22a884"/><rect x="7.88" y="41.37" width="2.02" height="2.02" fill="#355f8d"/><rect x="9.85" y="41.37" width="2.02" height="2.02" fill="#3b528b"/><rect x="11.82" y="41.37" width="2.02" height="2.02" fill="#000"/><rect x="13.79" y="41.37" width="2.02" height="2.02" fill="#3b528b"/><rect x="15.76" y="41.37" width="2.02" height="2.02" fill="#31668e"/><rect x="17.73" y="41.37" width="2.02" height="2.02" fill="#414487"/><rect x="19.70" y="41.37" width="2.02" height="2.02" fill="#2fb47c"/><rect x="21.67" y="41.37" width="2.02" height="2.02" fill="#25848e"/><rect x="23.64" y="41.37" width="2.02" height="2.02" fill="#7ad151"/><rect x="25.61" y="41.37" width="2.02" height="2.02" fill="#7ad151"/><rect x="27.58" y="41.37" width="2.02" height="2.02" fill="#7ad151"/><rect x="29.55" y="41.37" width="2.02" height="2.02" fill="#7ad151"/><rect x="31.52" y="41.37" width="2.02" height="2.02" fill="#7ad151"/><rect x="33.49" y="41.37" width="2.02" height="2.02" fill="#7ad151"/><rect x="35.46" y="41.37" width="2.02" height="2.02" fill="#21918c"/><rect x="37.43" y="41.37" width="2.02" height="2.02" fill="#21918c"/><rect x="39.40" y="41.37" width="2.02" height="2.02" fill="#2fb47c"/><rect x="41.37" y="41.37" width="2.02" height="2.02" fill="#2f6c8e"/><rect x="43.34" y="41.37" width="2.02" height="2.02" fill="#414487"/><rect x="45.31" y="41.37" width="2.02" height="2.02" fill="#3b528b"/><rect x="47.28" y="41.37" width="2.02" height="2.02" fill="#3b528b"/><rect x="49.25" y="41.37" width="2.02" height="2.02" fill="#3b528b"/><rect x="51.22" y="41.37" width="2.02" height="2.02" fill="#3b528b"/><rect x="53.19" y="41.37" width="2.02" height="2.02" fill="#3b528b"/><rect x="55.16" y="41.37" width="2.02" height="2.02" fill="#31668e"/><rect x="57.13" y="41.37" width="2.02" height="2.02" fill="#2f6c8e"/><rect x="59.10" y="41.37" width="2.02" height="2.02" fill="#31668e"/><rect x="61.07" y="41.37" width="2.02" height="2.02" fill="#000"/><rect x="0.00" y="43.34" width="2.02" height="2.02" fill="#3e4c8a"/><rect x="1.97" y="43.34" width="2.02" height="2.02" fill="#21918c"/><rect x="3.94" y="43.34" width="2.02" height="2.02" fill="#25848e"/><rect x="5.91" y="43.34" width="2.02" height="2.02" fill="#22a884"/><rect x="7.88" y="43.34" width="2.02" height="2.02" fill="#1fa088"/><rect x="9.85" y="43.34" width="2.02" height="2.02" fill="#25848e"/><rect x="11.82" y="43.34" width="2.02" height="2.02" fill="#000"/><rect x="13.79" y="43.34" width="2.02" height="2.02" fill="#25848e"/><rect x="15.76" y="43.34" width="2.02" height="2.02" fill="#414487"/><rect x="17.73" y="43.34" width="2.02" height="2.02" fill="#3b528b"/><rect x="19.70" y="43.34" width="2.02" height="2.02" fill="#22a884"/><rect x="21.67" y="43.34" width="2.02" height="2.02" fill="#25848e"/><rect x="23.64" y="43.34" width="2.02" height="2.02" fill="#bddf26"/><rect x="25.61" y="43.34" width="2.02" height="2.02" fill="#fde725"/><rect x="27.58" y="43.34" width="2.02" height="2.02" fill="#fde725"/><rect x="29.55" y="43.34" width="2.02" height="2.02" fill="#fde725"/><rect x="31.52" y="43.34" width="2.02" height="2.02" fill="#fde725"/><rect x="33.49" y="43.34" width="2.02" height="2.02" fill="#bddf26"/><rect x="35.46" y="43.34" width="2.02" height="2.02" fill="#22a884"/><rect x="37.43" y="43.34" width="2.02" height="2.02" fill="#3b528b"/><rect x="39.40" y="43.34" width="2.02" height="2.02" fill="#22a884"/><rect x="41.37" y="43.34" width="2.02" height="2.02" fill="#31668e"/><rect x="43.34" y="43.34" width="2.02" height="2.02" fill="#3e4c8a"/><rect x="45.31" y="43.34" width="2.02" height="2.02" fill="#3b528b"/><rect x="47.28" y="43.34" width="2.02" height="2.02" fill="#31668e"/><rect x="49.25" y="43.34" width="2.02" height="2.02" fill="#000"/><rect x="51.22" y="43.34" width="2.02" height="2.02" fill="#25848e"/><rect x="53.19" y="43.34" width="2.02" height="2.02" fill="#3b528b"/><rect x="55.16" y="43.34" width="2.02" height="2.02" fill="#3b528b"/><rect x="57.13" y="43.34" width="2.02" height="2.02" fill="#3b528b"/><rect x="59.10" y="43.34" width="2.02" height="2.02" fill="#355f8d"/><rect x="61.07" y="43.34" width="2.02" height="2.02" fill="#31668e"/><rect x="0.00" y="45.31" width="2.02" height="2.02" fill="#31668e"/><rect x="1.97" y="45.31" width="2.02" height="2.02" fill="#3b528b"/><rect x="3.94" y="45.31" width="2.02" height="2.02" fill="#1fa088"/><rect x="5.91" y="45.31" width="2.02" height="2.02" fill="#3b528b"/><rect x="7.88" y="45.31" width="2.02" height="2.02" fill="#25848e"/><rect x="9.85" y="45.31" width="2.02" height="2.02" fill="#31668e"/><rect x="11.82" y="45.31" width="2.02" height="2.02" fill="#000"/><rect x="13.79" y="45.31" width="2.02" height="2.02" fill="#3e4c8a"/><rect x="15.76" y="45.31" width="2.02" height="2.02" fill="#2a788e"/><rect x="17.73" y="45.31" width="2.02" height="2.02" fill="#21918c"/><rect x="19.70" y="45.31" width="2.02" height="2.02" fill="#25848e"/><rect x="21.67" y="45.31" width="2.02" height="2.02" fill="#22a884"/><rect x="23.64" y="45.31" width="2.02" height="2.02" fill="#fde725"/><rect x="25.61" y="45.31" width="2.02" height="2.02" fill="#fde725"/><rect x="27.58" y="45.31" width="2.02" height="2.02" fill="#fde725"/><rect x="29.55" y="45.31" width="2.02" height="2.02" fill="#fde725"/><rect x="31.52" y="45.31" width="2.02" height="2.02" fill="#fde725"/><rect x="33.49" y="45.31" width="2.02" height="2.02" fill="#fde725"/><rect x="35.46" y="45.31" width="2.02" height="2.02" fill="#25848e"/><rect x="37.43" y="45.31" width="2.02" height="2.02" fill="#22a884"/><rect x="39.40" y="45.31" width="2.02" height="2.02" fill="#22a884"/><rect x="41.37" y="45.31" width="2.02" height="2.02" fill="#22a884"/><rect x="43.34" y="45.31" width="2.02" height="2.02" fill="#2fb47c"/><rect x="45.31" y="45.31" width="2.02" height="2.02" fill="#25848e"/><rect x="47.28" y="45.31" width="2.02" height="2.02" fill="#355f8d"/><rect x="49.25" y="45.31" width="2.02" height="2.02" fill="#2f6c8e"/><rect x="51.22" y="45.31" width="2.02" height="2.02" fill="#3e4c8a"/><rect x="53.19" y="45.31" width="2.02" height="2.02" fill="#3e4c8a"/><rect x="55.16" y="45.31" width="2.02" height="2.02" fill="#31668e"/><rect x="57.13" y="45.31" width="2.02" height="2.02" fill="#2f6c8e"/><rect x="59.10" y="45.31" width="2.02" height="2.02" fill="#31668e"/><rect x="61.07" y="45.31" width="2.02" height="2.02" fill="#000"/><rect x="0.00" y="47.28" width="2.02" height="2.02" fill="#25848e"/><rect x="1.97" y="47.28" width="2.02" height="2.02" fill="#3b528b"/><rect x="3.94" y="47.28" width="2.02" height="2.02" fill="#21918c"/><rect x="5.91" y="47.28" width="2.02" height="2.02" fill="#21918c"/><rect x="7.88" y="47.28" width="2.02" height="2.02" fill="#25848e"/><rect x="9.85" y="47.28" width="2.02" height="2.02" fill="#3e4c8a"/><rect x="11.82" y="47.28" width="2.02" height="2.02" fill="#000"/><rect x="13.79" y="47.28" width="2.02" height="2.02" fill="#2f6c8e"/><rect x="15.76" y="47.28" width="2.02" height="2.02" fill="#2a788e"/><rect x="17.73" y="47.28" width="2.02" height="2.02" fill="#414487"/><rect x="19.70" y="47.28" width="2.02" height="2.02" fill="#31668e"/><rect x="21.67" y="47.28" width="2.02" height="2.02" fill="#31668e"/><rect x="23.64" y="47.28" width="2.02" height="2.02" fill="#fde725"/><rect x="25.61" y="47.28" width="2.02" height="2.02" fill="#fde725"/><rect x="27.58" y="47.28" width="2.02" height="2.02" fill="#fde725"/><rect x="29.55" y="47.28" width="2.02" height="2.02" fill="#fde725"/><rect x="31.52" y="47.28" width="2.02" height="2.02" fill="#fde725"/><rect x="33.49" y="47.28" width="2.02" height="2.02" fill="#fde725"/><rect x="35.46" y="47.28" width="2.02" height="2.02" fill="#2fb47c"/><rect x="37.43" y="47.28" width="2.02" height="2.02" fill="#25848e"/><rect x="39.40" y="47.28" width="2.02" height="2.02" fill="#2fb47c"/><rect x="41.37" y="47.28" width="2.02" height="2.02" fill="#2a788e"/><rect x="43.34" y="47.28" width="2.02" height="2.02" fill="#21918c"/><rect x="45.31" y="47.28" width="2.02" height="2.02" fill="#31668e"/><rect x="47.28" y="47.28" width="2.02" height="2.02" fill="#414487"/><rect x="49.25" y="47.28" width="2.02" height="2.02" fill="#2a788e"/><rect x="51.22" y="47.28" width="2.02" height="2.02" fill="#3e4c8a"/><rect x="53.19" y="47.28" width="2.02" height="2.02" fill="#25848e"/><rect x="55.16" y="47.28" width="2.02" height="2.02" fill="#3e4c8a"/><rect x="57.13" y="47.28" width="2.02" height="2.02" fill="#31668e"/><rect x="59.10" y="47.28" width="2.02" height="2.02" fill="#355f8d"/><rect x="61.07" y="47.28" width="2.02" height="2.02" fill="#2f6c8e"/><rect x="0.00" y="49.25" width="2.02" height="2.02" fill="#21918c"/><rect x="1.97" y="49.25" width="2.02" height="2.02" fill="#22a884"/><rect x="3.94" y="49.25" width="2.02" height="2.02" fill="#1fa088"/><rect x="5.91" y="49.25" width="2.02" height="2.02" fill="#22a884"/><rect x="7.88" y="49.25" width="2.02" height="2.02" fill="#31668e"/><rect x="9.85" y="49.25" width="2.02" height="2.02" fill="#3b528b"/><rect x="11.82" y="49.25" width="2.02" height="2.02" fill="#000"/><rect x="13.79" y="49.25" width="2.02" height="2.02" fill="#31668e"/><rect x="15.76" y="49.25" width="2.02" height="2.02" fill="#2a788e"/><rect x="17.73" y="49.25" width="2.02" height="2.02" fill="#25848e"/><rect x="19.70" y="49.25" width="2.02" height="2.02" fill="#21918c"/><rect x="21.67" y="49.25" width="2.02" height="2.02" fill="#31668e"/><rect x="23.64" y="49.25" width="2.02" height="2.02" fill="#fde725"/><rect x="25.61" y="49.25" width="2.02" height="2.02" fill="#fde725"/><rect x="27.58" y="49.25" width="2.02" height="2.02" fill="#fde725"/><rect x="29.55" y="49.25" width="2.02" height="2.02" fill="#fde725"/><rect x="31.52" y="49.25" width="2.02" height="2.02" fill="#fde725"/><rect x="33.49" y="49.25" width="2.02" height="2.02" fill="#fde725"/><rect x="35.46" y="49.25" width="2.02" height="2.02" fill="#2fb47c"/><rect x="37.43" y="49.25" width="2.02" height="2.02" fill="#31668e"/><rect x="39.40" y="49.25" width="2.02" height="2.02" fill="#25848e"/><rect x="41.37" y="49.25" width="2.02" height="2.02" fill="#21918c"/><rect x="43.34" y="49.25" width="2.02" height="2.02" fill="#355f8d"/><rect x="45.31" y="49.25" width="2.02" height="2.02" fill="#355f8d"/><rect x="47.28" y="49.25" width="2.02" height="2.02" fill="#355f8d"/><rect x="49.25" y="49.25" width="2.02" height="2.02" fill="#414487"/><rect x="51.22" y="49.25" width="2.02" height="2.02" fill="#25848e"/><rect x="53.19" y="49.25" width="2.02" height="2.02" fill="#2a788e"/><rect x="55.16" y="49.25" width="2.02" height="2.02" fill="#31668e"/><rect x="57.13" y="49.25" width="2.02" height="2.02" fill="#3b528b"/><rect x="59.10" y="49.25" width="2.02" height="2.02" fill="#3b528b"/><rect x="61.07" y="49.25" width="2.02" height="2.02" fill="#414487"/></svg><svg class="a" style="left:559px;top:48px" width="66" height="56"><g stroke="#1ee81e" fill="#1ee81e">
<path d="M13.6 46.3 V20" stroke-width="1.6" fill="none"/><path d="M13.6 46.3 H40" stroke-width="1.6" fill="none"/>
<path d="M13.6 16.3 L9.9 24.6 L13.6 22.4 L17.3 24.6 Z" stroke-width="0.5"/>
<path d="M45.2 46.3 L36.9 42.6 L39.1 46.3 L36.9 50 Z" stroke-width="0.5"/>
</g></svg><div class="t" style="left:608.6px;top:89.2px;font-size:12px;font-weight:bold;color:#1ee81e">X</div><div class="t" style="left:568.8px;top:48.8px;font-size:12px;font-weight:bold;color:#1ee81e">Y</div><div class="a" style="left:643px;top:30px;width:132px;height:80px;border-top:1px solid #a8a8a8;border-left:1px solid #a8a8a8"></div><svg class="a" style="left:0;top:0" width="780" height="110" shape-rendering="crispEdges"><rect x="644.9" y="30.9" width="7.30" height="2.30" fill="#2eaa7a"/><rect x="652" y="30.9" width="23.10" height="2.30" fill="#2a788e"/><rect x="674.9" y="30.9" width="23.20" height="2.30" fill="#2a788e"/><rect x="697.9" y="30.9" width="24.20" height="2.30" fill="#345f8d"/><rect x="721.9" y="30.9" width="23.10" height="2.30" fill="#345f8d"/><rect x="744.8" y="30.9" width="23.50" height="2.30" fill="#345f8d"/><rect x="768.1" y="30.9" width="4.00" height="2.30" fill="#345f8d"/><rect x="644.9" y="33" width="7.30" height="23.00" fill="#2db27d"/><rect x="652" y="33" width="23.10" height="23.00" fill="#277f8e"/><rect x="674.9" y="33" width="23.20" height="23.00" fill="#20998a"/><rect x="697.9" y="33" width="24.20" height="23.00" fill="#000000"/><rect x="721.9" y="33" width="23.10" height="23.00" fill="#433e85"/><rect x="744.8" y="33" width="23.50" height="23.00" fill="#2e6e8e"/><rect x="768.1" y="33" width="4.00" height="23.00" fill="#2e6e8e"/><rect x="644.9" y="55.8" width="7.30" height="23.30" fill="#22a785"/><rect x="652" y="55.8" width="23.10" height="23.30" fill="#23898e"/><rect x="674.9" y="55.8" width="23.20" height="23.30" fill="#26828e"/><rect x="697.9" y="55.8" width="24.20" height="23.30" fill="#355e8d"/><rect x="721.9" y="55.8" width="23.10" height="23.30" fill="#2c738e"/><rect x="744.8" y="55.8" width="23.50" height="23.30" fill="#2c738e"/><rect x="768.1" y="55.8" width="4.00" height="23.30" fill="#3b528b"/><rect x="644.9" y="78.9" width="7.30" height="23.30" fill="#25a386"/><rect x="652" y="78.9" width="23.10" height="23.30" fill="#30698e"/><rect x="674.9" y="78.9" width="23.20" height="23.30" fill="#2f6c8e"/><rect x="697.9" y="78.9" width="24.20" height="23.30" fill="#2f6c8e"/><rect x="721.9" y="78.9" width="23.10" height="23.30" fill="#3e4a89"/><rect x="744.8" y="78.9" width="23.50" height="23.30" fill="#32648e"/><rect x="768.1" y="78.9" width="4.00" height="23.30" fill="#3b528b"/><rect x="644.9" y="102" width="7.30" height="8.20" fill="#28ae80"/><rect x="652" y="102" width="23.10" height="8.20" fill="#2a788e"/><rect x="674.9" y="102" width="23.20" height="8.20" fill="#3b528b"/><rect x="697.9" y="102" width="24.20" height="8.20" fill="#2f6c8e"/><rect x="721.9" y="102" width="23.10" height="8.20" fill="#21918c"/><rect x="744.8" y="102" width="23.50" height="8.20" fill="#3b528b"/><rect x="768.1" y="102" width="4.00" height="8.20" fill="#3b528b"/><rect x="695.6" y="80.6" width="26.4" height="32" fill="none" stroke="#000" stroke-width="1"/><rect x="697.1" y="82.1" width="23.4" height="30" fill="none" stroke="#fff" stroke-width="1.9"/></svg><div class="a" style="left:771.6px;top:31px;width:1.2px;height:75px;background:#ededed"></div><div class="a" style="left:772.8px;top:30px;width:1.2px;height:76px;background:#8e8e8e"></div></div><div class="a" style="left:214px;top:104px;width:967px;height:904px;border-radius:5px 5px 4px 4px;background:#ececec;box-shadow:0 18px 45px rgba(0,0,0,0.42),0 0 0 0.5px rgba(0,0,0,0.35)"></div><div class="a" style="left:214px;top:104px;width:967px;height:22.4px;border-radius:5px 5px 0 0;background:linear-gradient(#ebe9eb,#d5d3d5);border-bottom:1px solid #b4b4b4"></div><div class="a" style="left:222px;top:109px;width:12px;height:12px;border-radius:50%;background:#fc605c;border:0.5px solid #e0463f"></div><div class="a" style="left:242px;top:109px;width:12px;height:12px;border-radius:50%;background:#fdbc40;border:0.5px solid #dea032"></div><div class="a" style="left:262px;top:109px;width:12px;height:12px;border-radius:50%;background:#34c84a;border:0.5px solid #23a83a"></div><div class="t" style="left:497px;width:400px;text-align:center;top:109.15px;font-size:13px;color:#4a4a4a;">Redux</div><div class="a" style="left:214px;top:126.4px;width:967px;height:21.6px;background:#f9f9f9"></div><div class="t" style="left:228px;top:130.10px;font-size:14px;">File</div><div class="t" style="left:264px;top:130.10px;font-size:14px;">Parameters</div><div class="t" style="left:226.4px;top:170.20px;font-size:11.65px;">DRP/CRUSH for HAWC instrument in nodpol mode</div><div class="a" style="left:226px;top:195px;width:333px;height:130px;background:#fff;border:1px solid #b9b9b9;border-top-color:#9d9d9d;overflow:hidden"><div class="t" style="left:4.4px;top:6.3px;font-size:12.6px">Loaded files:</div><div class="t" style="left:11.5px;top:21.00px;font-size:12.05px">2017-11-17_HA_F454_080_CAL_70050954_HAWD_HWPD</div><div class="t" style="left:11.5px;top:35.80px;font-size:12.05px">2017-11-17_HA_F454_081_POL_70050954_HAWD_HWPD</div><div class="t" style="left:11.5px;top:50.60px;font-size:12.05px">2017-11-17_HA_F454_082_POL_70050954_HAWD_HWPD</div><div class="t" style="left:11.5px;top:65.40px;font-size:12.05px">2017-11-17_HA_F454_083_POL_70050954_HAWD_HWPD</div><div class="t" style="left:11.5px;top:80.20px;font-size:12.05px">2017-11-17_HA_F454_084_POL_70050954_HAWD_HWPD</div><div class="t" style="left:11.5px;top:95.00px;font-size:12.05px">2017-11-17_HA_F454_085_CAL_70050954_HAWD_HWPD</div></div><div class="a" style="left:226px;top:341px;width:333px;height:633px;background:#e3e3e3;border:1px solid #d8d8d8;border-radius:5px"></div><div class="btn" style="left:239.8px;top:353.5px;width:58.69999999999999px;height:20.19999999999999px;font-size:13.5px;line-height:19.399999999999988px;line-height:17.5px">Step</div><div class="btn dis" style="left:313px;top:353.5px;width:62.80000000000001px;height:20.19999999999999px;font-size:13.5px;line-height:19.399999999999988px;background:#f1f1f1;border-color:#d2d2d2;line-height:17.5px">Undo</div><div class="btn" style="left:390.5px;top:353.5px;width:74.80000000000001px;height:20.19999999999999px;font-size:13.5px;line-height:19.399999999999988px;line-height:17.5px">Reduce</div><div class="btn" style="left:480.7px;top:353.5px;width:63.69999999999999px;height:20.19999999999999px;font-size:13.5px;line-height:19.399999999999988px;line-height:17.5px">Reset</div><div class="t" style="left:234.6px;top:400.52px;font-size:13.5px;">Step through:</div><div class="combo" style="left:325px;top:397.6px;width:222.5px;height:20.0px;border-radius:4px;font-size:13.5px;overflow:visible"><div class="t" style="left:7.5px;top:0.75px;font-size:13.5px;line-height:1.15">10. Compute Stokes</div><div class="cblue" style="width:17px;top:-1.5px;bottom:-1.5px;border-radius:0 5px 5px 0"><svg class="a" style="left:4px;top:4.5px" width="9" height="12"><path d="M1 4.4 L4.5 0.9 L8 4.4 M1 7.6 L4.5 11.1 L8 7.6" stroke="#fff" stroke-width="1.3" fill="none"/></svg></div></div><div class="a" style="left:234.5px;top:431.5px;width:316px;height:534px;overflow:hidden;background:#fff;border-left:1.5px solid #8f8f8f;border-right:1.5px solid #8f8f8f;border-top:1.5px solid #888"><div class="a" style="left:0;top:0.0px;width:316px;height:34px;background:#ffffff;border-bottom:2px solid #999"></div><div class="t" style="left:4px;top:9.53px;font-size:13.5px;color:#8a8a8a">1.</div><div class="t" style="left:-50.5px;width:300px;text-align:center;top:9.53px;font-size:13.5px;color:#8a8a8a">Make Flats</div><div class="btn dis" style="left:185.70px;top:5.70px;width:52.50px;height:20px;font-size:13.5px;line-height:18px;background:#fff">Edit</div><div class="btn dis" style="left:253.60px;top:5.70px;width:52.50px;height:20px;font-size:13.5px;line-height:18px;background:#fff">Run</div><div class="a" style="left:0;top:34.0px;width:316px;height:34px;background:#edf3fe;border-bottom:2px solid #999"></div><div class="t" style="left:4px;top:43.52px;font-size:13.5px;color:#8a8a8a">2.</div><div class="t" style="left:-50.5px;width:300px;text-align:center;top:43.52px;font-size:13.5px;color:#8a8a8a">Demodulate Chops</div><div class="btn dis" style="left:185.70px;top:39.70px;width:52.50px;height:20px;font-size:13.5px;line-height:18px;background:#f4f8fe">Edit</div><div class="btn dis" style="left:253.60px;top:39.70px;width:52.50px;height:20px;font-size:13.5px;line-height:18px;background:#f4f8fe">Run</div><div class="a" style="left:0;top:68.0px;width:316px;height:34px;background:#ffffff;border-bottom:2px solid #999"></div><div class="t" style="left:4px;top:77.53px;font-size:13.5px;color:#8a8a8a">3.</div><div class="t" style="left:-50.5px;width:300px;text-align:center;top:77.53px;font-size:13.5px;color:#8a8a8a">Make Demod Plots</div><div class="btn dis" style="left:185.70px;top:73.70px;width:52.50px;height:20px;font-size:13.5px;line-height:18px;background:#fff">Edit</div><div class="btn dis" style="left:253.60px;top:73.70px;width:52.50px;height:20px;font-size:13.5px;line-height:18px;background:#fff">Run</div><div class="a" style="left:0;top:102.0px;width:316px;height:34px;background:#edf3fe;border-bottom:2px solid #999"></div><div class="t" style="left:4px;top:111.53px;font-size:13.5px;color:#8a8a8a">4.</div><div class="t" style="left:-50.5px;width:300px;text-align:center;top:111.53px;font-size:13.5px;color:#8a8a8a">Filter Bad Chops</div><div class="btn dis" style="left:185.70px;top:107.70px;width:52.50px;height:20px;font-size:13.5px;line-height:18px;background:#f4f8fe">Edit</div><div class="btn dis" style="left:253.60px;top:107.70px;width:52.50px;height:20px;font-size:13.5px;line-height:18px;background:#f4f8fe">Run</div><div class="a" style="left:0;top:136.0px;width:316px;height:34px;background:#ffffff;border-bottom:2px solid #999"></div><div class="t" style="left:4px;top:145.53px;font-size:13.5px;color:#8a8a8a">5.</div><div class="t" style="left:-50.5px;width:300px;text-align:center;top:145.53px;font-size:13.5px;color:#8a8a8a">Flat Correct</div><div class="btn dis" style="left:185.70px;top:141.70px;width:52.50px;height:20px;font-size:13.5px;line-height:18px;background:#fff">Edit</div><div class="btn dis" style="left:253.60px;top:141.70px;width:52.50px;height:20px;font-size:13.5px;line-height:18px;background:#fff">Run</div><div class="a" style="left:0;top:170.0px;width:316px;height:34px;background:#edf3fe;border-bottom:2px solid #999"></div><div class="t" style="left:4px;top:179.53px;font-size:13.5px;color:#8a8a8a">6.</div><div class="t" style="left:-50.5px;width:300px;text-align:center;top:179.53px;font-size:13.5px;color:#8a8a8a">Align Arrays</div><div class="btn dis" style="left:185.70px;top:175.70px;width:52.50px;height:20px;font-size:13.5px;line-height:18px;background:#f4f8fe">Edit</div><div class="btn dis" style="left:253.60px;top:175.70px;width:52.50px;height:20px;font-size:13.5px;line-height:18px;background:#f4f8fe">Run</div><div class="a" style="left:0;top:204.0px;width:316px;height:34px;background:#ffffff;border-bottom:2px solid #999"></div><div class="t" style="left:4px;top:213.53px;font-size:13.5px;color:#8a8a8a">7.</div><div class="t" style="left:-50.5px;width:300px;text-align:center;top:213.53px;font-size:13.5px;color:#8a8a8a">Split By Nod/HWP</div><div class="btn dis" style="left:185.70px;top:209.70px;width:52.50px;height:20px;font-size:13.5px;line-height:18px;background:#fff">Edit</div><div class="btn dis" style="left:253.60px;top:209.70px;width:52.50px;height:20px;font-size:13.5px;line-height:18px;background:#fff">Run</div><div class="a" style="left:0;top:238.0px;width:316px;height:34px;background:#edf3fe;border-bottom:2px solid #999"></div><div class="t" style="left:4px;top:247.53px;font-size:13.5px;color:#8a8a8a">8.</div><div class="t" style="left:-50.5px;width:300px;text-align:center;top:247.53px;font-size:13.5px;color:#8a8a8a">Combine Time Series</div><div class="btn dis" style="left:185.70px;top:243.70px;width:52.50px;height:20px;font-size:13.5px;line-height:18px;background:#f4f8fe">Edit</div><div class="btn dis" style="left:253.60px;top:243.70px;width:52.50px;height:20px;font-size:13.5px;line-height:18px;background:#f4f8fe">Run</div><div class="a" style="left:0;top:272.0px;width:316px;height:34px;background:#ffffff;border-bottom:2px solid #999"></div><div class="t" style="left:4px;top:281.52px;font-size:13.5px;color:#8a8a8a">9.</div><div class="t" style="left:-50.5px;width:300px;text-align:center;top:281.52px;font-size:13.5px;color:#8a8a8a">Subtract Nods</div><div class="btn dis" style="left:185.70px;top:277.70px;width:52.50px;height:20px;font-size:13.5px;line-height:18px;background:#fff">Edit</div><div class="btn dis" style="left:253.60px;top:277.70px;width:52.50px;height:20px;font-size:13.5px;line-height:18px;background:#fff">Run</div><div class="a" style="left:0;top:306.0px;width:316px;height:34px;background:#edf3fe;border-bottom:2px solid #999"></div><div class="t" style="left:4px;top:315.52px;font-size:13.5px;color:#8a8a8a">10.</div><div class="t" style="left:-47.5px;width:300px;text-align:center;top:315.52px;font-size:13.5px;color:#8a8a8a">Compute Stokes</div><div class="btn dis" style="left:185.70px;top:311.70px;width:52.50px;height:20px;font-size:13.5px;line-height:18px;background:#f4f8fe">Edit</div><div class="btn dis" style="left:253.60px;top:311.70px;width:52.50px;height:20px;font-size:13.5px;line-height:18px;background:#f4f8fe">Run</div><div class="a" style="left:0;top:340.0px;width:316px;height:34px;background:#ffffff;border-bottom:2px solid #999"></div><div class="t" style="left:4px;top:349.52px;font-size:13.5px;color:#000">11.</div><div class="t" style="left:-47.5px;width:300px;text-align:center;top:349.52px;font-size:13.5px;color:#000">Add WCS</div><div class="btn" style="left:185.70px;top:345.70px;width:52.50px;height:20px;font-size:13.5px;line-height:18px;">Edit</div><div class="btn" style="left:253.60px;top:345.70px;width:52.50px;height:20px;font-size:13.5px;line-height:18px;">Run</div><div class="a" style="left:0;top:374.0px;width:316px;height:34px;background:#edf3fe;border-bottom:2px solid #999"></div><div class="t" style="left:4px;top:383.52px;font-size:13.5px;color:#000">12.</div><div class="t" style="left:-47.5px;width:300px;text-align:center;top:383.52px;font-size:13.5px;color:#000">Correct Opacity</div><div class="btn" style="left:185.70px;top:379.70px;width:52.50px;height:20px;font-size:13.5px;line-height:18px;">Edit</div><div class="btn dis" style="left:253.60px;top:379.70px;width:52.50px;height:20px;font-size:13.5px;line-height:18px;background:#f4f8fe">Run</div><div class="a" style="left:0;top:408.0px;width:316px;height:34px;background:#ffffff;border-bottom:2px solid #999"></div><div class="t" style="left:4px;top:417.52px;font-size:13.5px;color:#000">13.</div><div class="t" style="left:-47.5px;width:300px;text-align:center;top:417.52px;font-size:13.5px;color:#000">Correct IP</div><div class="btn" style="left:185.70px;top:413.70px;width:52.50px;height:20px;font-size:13.5px;line-height:18px;">Edit</div><div class="btn dis" style="left:253.60px;top:413.70px;width:52.50px;height:20px;font-size:13.5px;line-height:18px;background:#fff">Run</div><div class="a" style="left:0;top:442.0px;width:316px;height:34px;background:#edf3fe;border-bottom:2px solid #999"></div><div class="t" style="left:4px;top:451.52px;font-size:13.5px;color:#000">14.</div><div class="t" style="left:-47.5px;width:300px;text-align:center;top:451.52px;font-size:13.5px;color:#000">Rotate Stokes</div><div class="btn" style="left:185.70px;top:447.70px;width:52.50px;height:20px;font-size:13.5px;line-height:18px;">Edit</div><div class="btn dis" style="left:253.60px;top:447.70px;width:52.50px;height:20px;font-size:13.5px;line-height:18px;background:#f4f8fe">Run</div><div class="a" style="left:0;top:476.0px;width:316px;height:34px;background:#ffffff;border-bottom:2px solid #999"></div><div class="t" style="left:4px;top:485.52px;font-size:13.5px;color:#000">15.</div><div class="t" style="left:-47.5px;width:300px;text-align:center;top:485.52px;font-size:13.5px;color:#000">Calibrate Flux</div><div class="btn" style="left:185.70px;top:481.70px;width:52.50px;height:20px;font-size:13.5px;line-height:18px;">Edit</div><div class="btn dis" style="left:253.60px;top:481.70px;width:52.50px;height:20px;font-size:13.5px;line-height:18px;background:#fff">Run</div><div class="a" style="left:0;top:510.0px;width:316px;height:34px;background:#edf3fe;border-bottom:2px solid #999"></div><div class="t" style="left:4px;top:519.52px;font-size:13.5px;color:#000">16.</div><div class="t" style="left:-47.5px;width:300px;text-align:center;top:519.52px;font-size:13.5px;color:#000">Subtract Background</div><div class="btn" style="left:185.70px;top:515.70px;width:52.50px;height:20px;font-size:13.5px;line-height:18px;">Edit</div><div class="btn dis" style="left:253.60px;top:515.70px;width:52.50px;height:20px;font-size:13.5px;line-height:18px;background:#f4f8fe">Run</div></div><div class="a" style="left:569.3px;top:170.5px;width:600.2px;height:804px;background:#e3e3e3;border:1px solid #dadada;border-radius:5px"></div><div class="a" style="left:745px;top:160px;width:245px;height:21px;border-radius:4px;background:#fff;border:1px solid #c6c6c6;border-bottom-color:#b2b2b2;overflow:hidden"><div class="a" style="left:-1px;top:-1px;width:84px;height:21px;background:linear-gradient(#6aaffb,#1b7cf6 60%,#176ff1);border-radius:4px 0 0 4px"></div><div class="a" style="left:199px;top:0;width:1px;height:19px;background:#d0d0d0"></div></div><div class="t" style="left:755.6px;top:163.75px;font-size:13px;color:#fff;">Data View</div><div class="t" style="left:840.4px;top:163.33px;font-size:13.5px;">File Information</div><div class="t" style="left:958.5px;top:163.33px;font-size:13.5px;">Log</div><div class="a" style="left:582px;top:196.3px;width:574px;height:766.2px;background:#ececec;border:1px solid #a9a9a9;border-top-color:#9b9b9b"></div><div class="t" style="left:593.8px;top:209.10px;font-size:14px;font-weight:bold;">QAD Tools</div><div class="a" style="left:599.5px;top:242.2px;width:155.89999999999998px;height:36.0px;border:1px solid #a7a7a7;background:linear-gradient(#e6e6e6,#f4f4f4)"></div><div class="a" style="left:770.4px;top:242.2px;width:155.39999999999998px;height:36.0px;border:1px solid #a7a7a7;background:linear-gradient(#e6e6e6,#f4f4f4)"></div><div class="a" style="left:940.3px;top:242.2px;width:198.29999999999995px;height:36.0px;border:1px solid #a7a7a7;background:linear-gradient(#e6e6e6,#f4f4f4)"></div><div class="t" style="left:671.1px;top:253.72px;font-size:13.5px;">ImExam</div><div class="t" style="left:826.4px;top:253.72px;font-size:13.5px;">Header View</div><div class="t" style="left:990.5px;top:253.72px;font-size:13.5px;">Save Current Settings</div><svg class="a" style="left:630px;top:240px" width="40" height="40" viewBox="0 0 40 40">
<defs><linearGradient id="ry" x1="0" y1="0" x2="1" y2="1"><stop offset="0" stop-color="#fff27a"/><stop offset="0.6" stop-color="#f1d410"/><stop offset="1" stop-color="#d8b400"/></linearGradient></defs>
<path d="M33.8 4.6 L33.9 32.6 L14.4 32.6 Z" fill="url(#ry)" stroke="#c9a200" stroke-width="0.9" stroke-linejoin="round"/>
<path d="M29.2 17.2 L29.2 27.8 L23.6 27.8 Z" fill="#ececec" stroke="#c9a200" stroke-width="0.8"/>
<path d="M32.4 9 L32.4 31" stroke="#fff6a8" stroke-width="0.9" stroke-dasharray="0.9 1.4"/>
<path d="M10.4 5.2 L8.4 8.7 L15.3 19.8 L17.4 18.6 Z" fill="#f2f2f2" stroke="#808080" stroke-width="0.8" stroke-linejoin="round"/>
<path d="M22.6 5.1 L24.7 8.7 L17.6 19.8 L15.6 18.6 Z" fill="#f2f2f2" stroke="#808080" stroke-width="0.8" stroke-linejoin="round"/>
<ellipse cx="10.2" cy="25.3" rx="5.1" ry="3.3" transform="rotate(-38 10.2 25.3)" fill="none" stroke="#e01e1e" stroke-width="2.8"/>
<ellipse cx="22.4" cy="24.9" rx="5.0" ry="3.3" transform="rotate(52 22.4 24.9)" fill="none" stroke="#e01e1e" stroke-width="2.8"/>
<path d="M14 20.5 L15.8 19.5 L17.6 20.5" stroke="#e01e1e" stroke-width="2.2" fill="none"/>
</svg><svg class="a" style="left:788px;top:240px" width="40" height="40" viewBox="0 0 40 40">
<defs><radialGradient id="mg" cx="0.4" cy="0.35" r="0.7"><stop offset="0" stop-color="#f4f8fd"/><stop offset="1" stop-color="#b9d0ec"/></radialGradient>
<linearGradient id="hd" x1="0" y1="0" x2="1" y2="1"><stop offset="0" stop-color="#9a9a9a"/><stop offset="0.5" stop-color="#d8d8d8"/><stop offset="1" stop-color="#8a8a8a"/></linearGradient></defs>
<rect x="6.5" y="6.3" width="23" height="27.3" rx="1.2" fill="#fff" stroke="#4a4a4a" stroke-width="0.9"/>
<rect x="8.1" y="8.1" width="19.8" height="23.6" fill="#f1f1f1"/>
<rect x="8.1" y="8.1" width="2.6" height="23.6" fill="#e4e4e4"/>
<path d="M13.1 10.5H25.9M13.1 12.5H25.9M13.1 14.5H25.9M13.1 16.4H25.9" stroke="#bdbdbd" stroke-width="0.7"/>
<path d="M24.6 28.2 L31.2 33.1" stroke="#6f6f6f" stroke-width="3.6" stroke-linecap="round"/>
<path d="M24.6 28.2 L31.2 33.1" stroke="url(#hd)" stroke-width="2.4" stroke-linecap="round"/>
<circle cx="19.4" cy="23.3" r="7" fill="#fff" stroke="#8c8c8c" stroke-width="0.8"/>
<circle cx="19.4" cy="23.3" r="5.3" fill="url(#mg)" stroke="#3b73c4" stroke-width="1.2"/>
</svg><svg class="a" style="left:950px;top:240px" width="40" height="40" viewBox="0 0 40 40">
<defs><linearGradient id="dv" x1="0" y1="0" x2="0" y2="1"><stop offset="0" stop-color="#fafafa"/><stop offset="1" stop-color="#dcdcdc"/></linearGradient>
<linearGradient id="bl" x1="0" y1="0" x2="1" y2="1"><stop offset="0" stop-color="#9ab8e0"/><stop offset="1" stop-color="#2f5fa8"/></linearGradient></defs>
<path d="M10.3 12.3 H29.7 L34.5 23.8 V32.2 Q34.5 33.3 33.4 33.3 H6.6 Q5.5 33.3 5.5 32.2 V23.8 Z" fill="url(#dv)" stroke="#474747" stroke-width="1"/>
<rect x="7.5" y="27.3" width="25.4" height="4.4" fill="#b4b4b4"/>
<rect x="9" y="28.2" width="13" height="2.8" fill="#9a9a9a"/>
<path d="M23.6 27.5V31.5M25.4 27.5V31.5M27.2 27.5V31.5M29 27.5V31.5M30.8 27.5V31.5" stroke="#e6e6e6" stroke-width="0.7"/>
<path d="M7.6 13.2 C8.5 7 13 4.8 16.5 5.3 C20.5 5.8 23.2 9.2 23 14.3 L28.5 14.3 L20.5 23.8 L11.9 14.3 L17.6 14.3 C18 11.5 16.8 9.3 14.3 9.1 C11.6 8.9 9.3 10.8 7.6 13.2 Z" fill="url(#bl)" stroke="#22529b" stroke-width="0.9" stroke-linejoin="round"/>
</svg><div class="t" style="left:593.5px;top:302.52px;font-size:13.5px;">Status:</div><div class="a" style="left:644.3px;top:300.5px;width:500.5px;height:17px;border:1px solid #a9a9a9;border-top-color:#9c9c9c;background:#ebebeb"></div><div class="a" style="left:593px;top:329.3px;width:552px;height:1px;background:#c9c9c9"></div><div class="a" style="left:593px;top:330.3px;width:552px;height:1px;background:#f8f8f8"></div><div class="t" style="left:593.5px;top:344.64px;font-size:14.3px;font-weight:bold;">Display Settings</div><div class="t" style="left:314.5px;width:400px;text-align:right;top:374.92px;font-size:13.5px;">Extension to display</div><div class="t" style="left:314.5px;width:400px;text-align:right;top:405.32px;font-size:13.5px;">Lock frames to</div><div class="t" style="left:314.5px;width:400px;text-align:right;top:435.32px;font-size:13.5px;">Lock slice to</div><div class="t" style="left:314.5px;width:400px;text-align:right;top:465.52px;font-size:13.5px;">Scale</div><div class="t" style="left:314.5px;width:400px;text-align:right;top:495.72px;font-size:13.5px;">Color map</div><div class="combo" style="left:723px;top:371.3px;width:412.79999999999995px;height:20.399999999999977px;border-radius:0;font-size:13.5px;overflow:visible"><div class="t" style="left:1.5px;top:0.95px;font-size:13.5px;line-height:1.15">First</div><div class="cblue" style="width:18px;top:-1.5px;bottom:-1.5px;border-radius:0 5px 5px 0"><svg class="a" style="left:4.5px;top:8.2px" width="9" height="6"><path d="M1 1.2 L4.5 4.6 L8 1.2" stroke="#fff" stroke-width="1.3" fill="none"/></svg></div></div><div class="combo" style="left:723px;top:402.2px;width:412.79999999999995px;height:20.400000000000034px;border-radius:4px;font-size:13.5px;overflow:visible"><div class="t" style="left:6px;top:0.95px;font-size:13.5px;line-height:1.15">Image</div><div class="cblue" style="width:17px;top:-1.5px;bottom:-1.5px;border-radius:0 5px 5px 0"><svg class="a" style="left:4px;top:4.7px" width="9" height="12"><path d="M1 4.4 L4.5 0.9 L8 4.4 M1 7.6 L4.5 11.1 L8 7.6" stroke="#fff" stroke-width="1.3" fill="none"/></svg></div></div><div class="combo" style="left:723px;top:432.2px;width:412.79999999999995px;height:20.400000000000034px;border-radius:4px;font-size:13.5px;overflow:visible"><div class="t" style="left:6px;top:0.95px;font-size:13.5px;line-height:1.15">Image</div><div class="cblue" style="width:17px;top:-1.5px;bottom:-1.5px;border-radius:0 5px 5px 0"><svg class="a" style="left:4px;top:4.7px" width="9" height="12"><path d="M1 4.4 L4.5 0.9 L8 4.4 M1 7.6 L4.5 11.1 L8 7.6" stroke="#fff" stroke-width="1.3" fill="none"/></svg></div></div><div class="combo" style="left:723px;top:462.3px;width:412.79999999999995px;height:20.399999999999977px;border-radius:4px;font-size:13.5px;overflow:visible"><div class="t" style="left:6px;top:0.95px;font-size:13.5px;line-height:1.15">ZScale</div><div class="cblue" style="width:17px;top:-1.5px;bottom:-1.5px;border-radius:0 5px 5px 0"><svg class="a" style="left:4px;top:4.7px" width="9" height="12"><path d="M1 4.4 L4.5 0.9 L8 4.4 M1 7.6 L4.5 11.1 L8 7.6" stroke="#fff" stroke-width="1.3" fill="none"/></svg></div></div><div class="field" style="left:723px;top:492.3px;width:412.5px;height:20.19999999999999px"><div class="t" style="left:0.5px;top:4.12px;font-size:13.5px">viridis</div></div><div class="t" style="left:314.9px;width:400px;text-align:right;top:524.92px;font-size:13.5px;">Zoom to fit</div><div class="a" style="left:722.7px;top:524.2px;width:14px;height:14px;border-radius:3px;background:#3f99fb;border:0.5px solid #3a90f0"><svg class="a" style="left:1.3px;top:1.3px" width="10" height="10"><path d="M1.6 5.4 L4 8 L8.6 1.6" stroke="#fff" stroke-width="1.5" fill="none"/></svg></div><div class="t" style="left:314.9px;width:400px;text-align:right;top:550.73px;font-size:13.5px;">Tile images</div><div class="a" style="left:722.7px;top:549.9px;width:14px;height:14px;border-radius:3px;background:#3f99fb;border:0.5px solid #3a90f0"><svg class="a" style="left:1.3px;top:1.3px" width="10" height="10"><path d="M1.6 5.4 L4 8 L8.6 1.6" stroke="#fff" stroke-width="1.5" fill="none"/></svg></div><div class="btn" style="left:599.6px;top:587.3px;width:262.0px;height:20.0px;font-size:13.5px;line-height:19.2px;">Reset Display Settings</div><div class="btn" style="left:876.3px;top:587.3px;width:262.29999999999995px;height:20.0px;font-size:13.5px;line-height:19.2px;">Restore Default Display Settings</div><div class="a" style="left:593px;top:628px;width:552px;height:1px;background:#c9c9c9"></div><div class="a" style="left:593px;top:629px;width:552px;height:1px;background:#f8f8f8"></div><div class="t" style="left:593.5px;top:643.76px;font-size:14.4px;font-weight:bold;">Photometry Settings</div><div class="t" style="left:340.5px;width:400px;text-align:right;top:671.52px;font-size:13.5px;">Show radial plots</div><div class="a" style="left:749.4px;top:671.4px;width:14px;height:14px;border-radius:3px;background:#fff;border:1px solid #b5b5b5"></div><div class="t" style="left:340.5px;width:400px;text-align:right;top:699.52px;font-size:13.5px;">Model type</div><div class="combo" style="left:748.6px;top:696.6px;width:294.30000000000007px;height:20.199999999999932px;border-radius:4px;font-size:13.5px;overflow:visible"><div class="t" style="left:8px;top:0.85px;font-size:13.5px;line-height:1.15">Moffat</div><div class="cblue" style="width:17px;top:-1.5px;bottom:-1.5px;border-radius:0 5px 5px 0"><svg class="a" style="left:4px;top:4.6px" width="9" height="12"><path d="M1 4.4 L4.5 0.9 L8 4.4 M1 7.6 L4.5 11.1 L8 7.6" stroke="#fff" stroke-width="1.3" fill="none"/></svg></div></div><div class="t" style="left:340.5px;width:400px;text-align:right;top:730.02px;font-size:13.5px;">Window size</div><div class="field" style="left:749.1px;top:726.3px;width:293.6px;height:20.200000000000045px"><div class="t" style="left:0.5px;top:4.12px;font-size:13.5px">50.0</div></div><div class="t" style="left:1053.2px;top:730.02px;font-size:13.5px;">pixels</div><div class="t" style="left:340.5px;width:400px;text-align:right;top:761.02px;font-size:13.5px;">Starting FWHM</div><div class="field" style="left:749.1px;top:757.3px;width:293.6px;height:20.300000000000068px"><div class="t" style="left:0.5px;top:4.12px;font-size:13.5px">3.0</div></div><div class="combo" style="left:1052.5px;top:757.2px;width:89.70000000000005px;height:20.59999999999991px;border-radius:4px;font-size:13.5px;overflow:visible"><div class="t" style="left:7.5px;top:1.05px;font-size:13.5px;line-height:1.15">arcsec</div><div class="cblue" style="width:17px;top:-1.5px;bottom:-1.5px;border-radius:0 5px 5px 0"><svg class="a" style="left:4px;top:4.8px" width="9" height="12"><path d="M1 4.4 L4.5 0.9 L8 4.4 M1 7.6 L4.5 11.1 L8 7.6" stroke="#fff" stroke-width="1.3" fill="none"/></svg></div></div><div class="t" style="left:340.5px;width:400px;text-align:right;top:791.73px;font-size:13.5px;">Aperture radius</div><div class="field" style="left:749.1px;top:788.3px;width:293.6px;height:20.300000000000068px"><div class="t" style="left:0.5px;top:4.12px;font-size:13.5px">12.0</div></div><div class="combo" style="left:1052.5px;top:788.3px;width:89.70000000000005px;height:20.700000000000045px;border-radius:4px;font-size:13.5px;overflow:visible"><div class="t" style="left:7.5px;top:1.10px;font-size:13.5px;line-height:1.15">pixels</div><div class="cblue" style="width:17px;top:-1.5px;bottom:-1.5px;border-radius:0 5px 5px 0"><svg class="a" style="left:4px;top:4.9px" width="9" height="12"><path d="M1 4.4 L4.5 0.9 L8 4.4 M1 7.6 L4.5 11.1 L8 7.6" stroke="#fff" stroke-width="1.3" fill="none"/></svg></div></div><div class="t" style="left:340.5px;width:400px;text-align:right;top:822.82px;font-size:13.5px;">Background inner radius</div><div class="field" style="left:749.3px;top:819.5px;width:293.4000000000001px;height:20.200000000000045px"><div class="t" style="left:0.5px;top:4.12px;font-size:13.5px">15.0</div></div><div class="t" style="left:340.5px;width:400px;text-align:right;top:853.92px;font-size:13.5px;">Background width</div><div class="field" style="left:749.3px;top:850.6px;width:293.4000000000001px;height:20.199999999999932px"><div class="t" style="left:0.5px;top:4.12px;font-size:13.5px">10.0</div></div><div class="t" style="left:340.5px;width:400px;text-align:right;top:884.73px;font-size:13.5px;">Fitter</div><div class="combo" style="left:748.6px;top:881.9px;width:294.30000000000007px;height:19.800000000000068px;border-radius:4px;font-size:13.5px;overflow:visible"><div class="t" style="left:8px;top:0.65px;font-size:13.5px;line-height:1.15">LevMar LSQ (more stable)</div><div class="cblue" style="width:17px;top:-1.5px;bottom:-1.5px;border-radius:0 5px 5px 0"><svg class="a" style="left:4px;top:4.4px" width="9" height="12"><path d="M1 4.4 L4.5 0.9 L8 4.4 M1 7.6 L4.5 11.1 L8 7.6" stroke="#fff" stroke-width="1.3" fill="none"/></svg></div></div><div class="btn" style="left:599.4px;top:923.5px;width:262.20000000000005px;height:20.0px;font-size:13.5px;line-height:19.2px;">Reset Photometry Settings</div><div class="btn" style="left:876.3px;top:923.5px;width:262.29999999999995px;height:20.0px;font-size:13.5px;line-height:19.2px;">Restore Default Photometry Settings</div><div class="a" style="left:214px;top:986.8px;width:967px;height:1px;background:#c6c6c6"></div></body></html>
